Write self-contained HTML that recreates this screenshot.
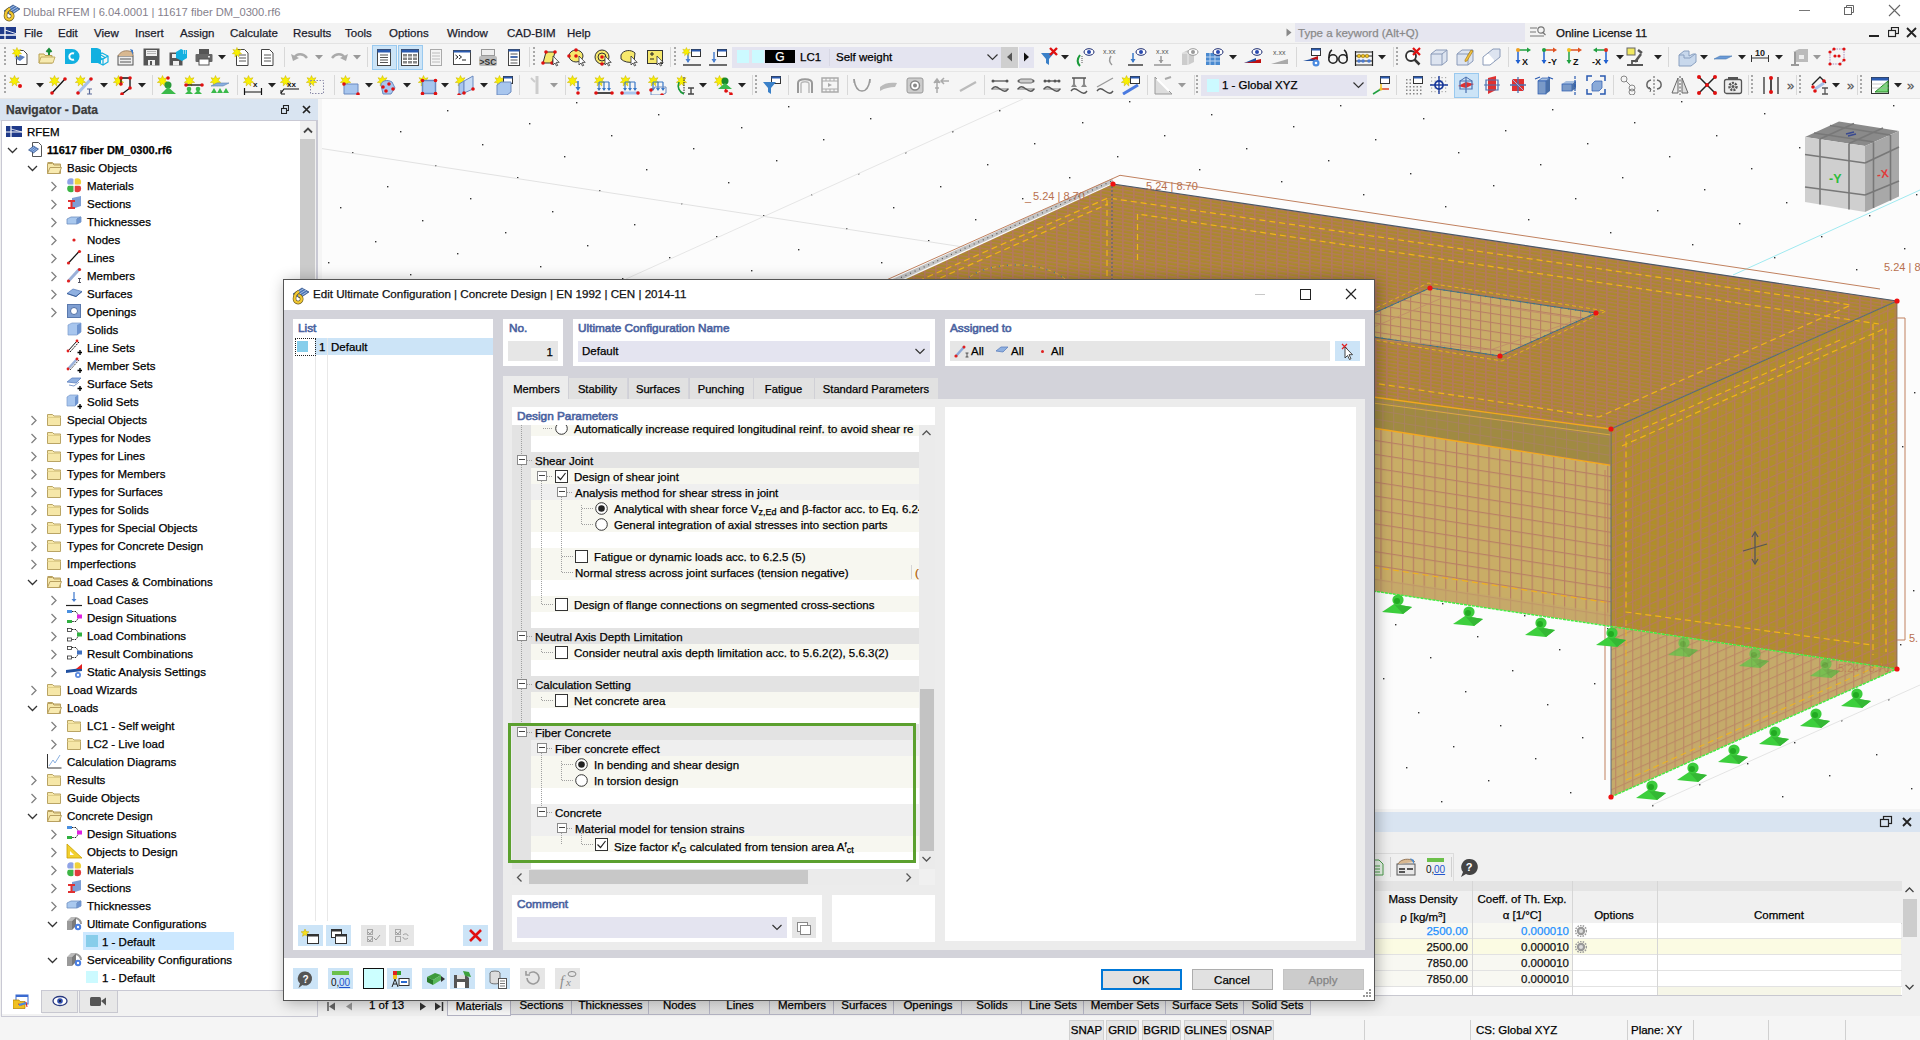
<!DOCTYPE html><html><head><meta charset="utf-8"><style>
*{margin:0;padding:0;box-sizing:border-box}
html,body{width:1920px;height:1040px;overflow:hidden;background:#f0f0f0;font-family:"Liberation Sans",sans-serif;font-size:11.5px;color:#000}
.t{-webkit-text-stroke:0.25px currentColor}
div{position:absolute}
.t{white-space:nowrap}
</style></head><body><div style="left:0px;top:0px;width:1920px;height:23px;background:#fff"></div>
<div class="t" style="left:23px;top:4.0px;height:16px;line-height:16px;color:#857f8c;font-size:11.2px;-webkit-text-stroke:0">Dlubal RFEM | 6.04.0001 | 11617 fiber DM_0300.rf6</div>
<div style="left:0px;top:23px;width:1920px;height:20px;background:#f3f3f3"></div>
<div class="t" style="left:24px;top:25.0px;height:16px;line-height:16px;color:#1c1c2c">File</div>
<div class="t" style="left:58px;top:25.0px;height:16px;line-height:16px;color:#1c1c2c">Edit</div>
<div class="t" style="left:94px;top:25.0px;height:16px;line-height:16px;color:#1c1c2c">View</div>
<div class="t" style="left:135px;top:25.0px;height:16px;line-height:16px;color:#1c1c2c">Insert</div>
<div class="t" style="left:180px;top:25.0px;height:16px;line-height:16px;color:#1c1c2c">Assign</div>
<div class="t" style="left:230px;top:25.0px;height:16px;line-height:16px;color:#1c1c2c">Calculate</div>
<div class="t" style="left:293px;top:25.0px;height:16px;line-height:16px;color:#1c1c2c">Results</div>
<div class="t" style="left:345px;top:25.0px;height:16px;line-height:16px;color:#1c1c2c">Tools</div>
<div class="t" style="left:389px;top:25.0px;height:16px;line-height:16px;color:#1c1c2c">Options</div>
<div class="t" style="left:447px;top:25.0px;height:16px;line-height:16px;color:#1c1c2c">Window</div>
<div class="t" style="left:507px;top:25.0px;height:16px;line-height:16px;color:#1c1c2c">CAD-BIM</div>
<div class="t" style="left:567px;top:25.0px;height:16px;line-height:16px;color:#1c1c2c">Help</div>
<div style="left:0px;top:43px;width:1920px;height:56px;background:#f5f5f5"></div>
<div style="left:0px;top:43px;width:1920px;height:1px;background:#e3e3e3"></div>
<div style="left:0px;top:71px;width:1920px;height:1px;background:#e6e6e6"></div>
<div style="left:0px;top:98px;width:1920px;height:1px;background:#e6e6e6"></div>
<div style="left:0px;top:99px;width:318px;height:22px;background:#d9e4f1"></div>
<div class="t" style="left:6px;top:102.0px;height:16px;line-height:16px;font-weight:bold;font-size:12px;color:#3a3a3a">Navigator - Data</div>
<div style="left:1px;top:120px;width:317px;height:870px;background:#fff;border:1px solid #c9c9d4;border-bottom:none;border-right:2px solid #c9c9d4"></div>
<div style="left:318px;top:99px;width:1602px;height:710px;background:#f5f5f5"></div>
<div style="left:322px;top:99px;width:1598px;height:710px;background:#fcfcfc"></div>
<div style="left:318px;top:809px;width:1602px;height:188px;background:#f0f0f0"></div>
<div style="left:318px;top:812px;width:1602px;height:20px;background:#d9e4f1"></div>
<div style="left:0px;top:1016px;width:1920px;height:24px;background:#f0f0f0"></div>
<div style="left:318px;top:809px;width:1602px;height:3px;background:#f4f4f4"></div>
<svg style="position:absolute;left:1879px;top:815px;" width="14" height="14" viewBox="0 0 14 14"><rect x="4.5" y="1.5" width="8" height="7" fill="none" stroke="#222" stroke-width="1.2"/><rect x="1.5" y="4.5" width="8" height="7" fill="#d9e4f1" stroke="#222" stroke-width="1.2"/></svg>
<svg style="position:absolute;left:1901px;top:816px;" width="12" height="12" viewBox="0 0 12 12"><path d="M2 2l8 8M10 2l-8 8" stroke="#222" stroke-width="1.8"/></svg>
<div style="left:1330px;top:853px;width:124px;height:28px;border:1px solid #dcdcdc;border-bottom:none;background:#f0f0f0"></div>
<svg style="position:absolute;left:1366px;top:857px;" width="20" height="20" viewBox="0 0 20 20"><path d="M3 3h10l4 4v11h-14z" fill="#e8f4e8" stroke="#4a9a4a"/><path d="M5 9h9M5 12h9M5 15h9" stroke="#4a9a4a"/></svg>
<div style="left:1390px;top:857px;width:1px;height:20px;background:#d0d0d0"></div>
<svg style="position:absolute;left:1395px;top:855px;" width="22" height="22" viewBox="0 0 22 22"><rect x="2" y="9" width="18" height="11" fill="#e8e8e8" stroke="#555"/><rect x="4" y="13" width="6" height="2" fill="#555"/><rect x="12" y="13" width="6" height="2" fill="#555"/><rect x="4" y="16" width="6" height="2" fill="#555"/><path d="M3 9c2-4 8-6 14-4l3 2" fill="#d8b890" stroke="#806040" stroke-width="0.8"/><path d="M15 3l4 2v4" fill="#4a8ad0"/></svg>
<svg style="position:absolute;left:1424px;top:856px;" width="22" height="22" viewBox="0 0 22 22"><rect x="3" y="2" width="17" height="4" fill="#6cc04a"/><text x="2" y="17" font-size="10" fill="#111" font-family="Liberation Sans">0,</text><text x="10" y="17" font-size="10" fill="#2255cc" font-family="Liberation Sans" text-decoration="underline">00</text></svg>
<div style="left:1451px;top:857px;width:1px;height:20px;background:#d0d0d0"></div>
<svg style="position:absolute;left:1458px;top:857px;" width="20" height="20" viewBox="0 0 20 20"><path d="M11 2a8 8 0 1 1-3 15l-5 3 2-5a8 8 0 0 1 6-13z" fill="#444"/><text x="11" y="14" font-size="11" font-weight="bold" text-anchor="middle" fill="#fff" font-family="Liberation Sans">?</text></svg>
<div style="left:318px;top:881px;width:1584px;height:10px;background:#e4e4e4"></div>
<div style="left:318px;top:891px;width:1584px;height:32px;background:#f0f0f0"></div>
<div style="left:1472px;top:881px;width:1px;height:114px;background:#d6d6d6"></div>
<div style="left:1572px;top:881px;width:1px;height:114px;background:#d6d6d6"></div>
<div style="left:1657px;top:881px;width:1px;height:114px;background:#d6d6d6"></div>
<div style="left:318px;top:923px;width:1584px;height:1px;background:#d6d6d6"></div>
<div class="t" style="left:1363.0px;width:120px;text-align:center;top:891.0px;height:16px;line-height:16px;">Mass Density</div>
<div class="t" style="left:1363.0px;width:120px;text-align:center;top:907.0px;height:16px;line-height:16px;">ρ [kg/m<sup style='font-size:8px;vertical-align:4px'>3</sup>]</div>
<div class="t" style="left:1462.0px;width:120px;text-align:center;top:891.0px;height:16px;line-height:16px;">Coeff. of Th. Exp.</div>
<div class="t" style="left:1462.0px;width:120px;text-align:center;top:907.0px;height:16px;line-height:16px;">α [1/°C]</div>
<div class="t" style="left:1571.5px;width:85px;text-align:center;top:907.0px;height:16px;line-height:16px;">Options</div>
<div class="t" style="left:1659.0px;width:240px;text-align:center;top:907.0px;height:16px;line-height:16px;">Comment</div>
<div style="left:1373px;top:923px;width:99px;height:16px;background:#f8f8f2"></div>
<div style="left:1473px;top:923px;width:99px;height:16px;background:#f8f8f2"></div>
<div style="left:1573px;top:923px;width:84px;height:16px;background:#ffffff"></div>
<div style="left:1658px;top:923px;width:243px;height:16px;background:#ffffff"></div>
<div style="left:1373px;top:939px;width:99px;height:16px;background:#fbfbe3"></div>
<div style="left:1473px;top:939px;width:99px;height:16px;background:#fbfbe3"></div>
<div style="left:1573px;top:939px;width:84px;height:16px;background:#fbfbe3"></div>
<div style="left:1658px;top:939px;width:243px;height:16px;background:#fbfbe3"></div>
<div style="left:1373px;top:955px;width:99px;height:16px;background:#f8f8f2"></div>
<div style="left:1473px;top:955px;width:99px;height:16px;background:#f8f8f2"></div>
<div style="left:1573px;top:955px;width:84px;height:16px;background:#ffffff"></div>
<div style="left:1658px;top:955px;width:243px;height:16px;background:#ffffff"></div>
<div style="left:1373px;top:971px;width:99px;height:16px;background:#f8f8f2"></div>
<div style="left:1473px;top:971px;width:99px;height:16px;background:#f8f8f2"></div>
<div style="left:1573px;top:971px;width:84px;height:16px;background:#ffffff"></div>
<div style="left:1658px;top:971px;width:243px;height:16px;background:#ffffff"></div>
<div style="left:1373px;top:987px;width:529px;height:8px;background:#fff"></div>
<div style="left:1658px;top:987px;width:243px;height:8px;background:#f6f6e8"></div>
<div style="left:1373px;top:938px;width:529px;height:1px;background:#e2e2e2"></div>
<div style="left:1373px;top:954px;width:529px;height:1px;background:#e2e2e2"></div>
<div style="left:1373px;top:970px;width:529px;height:1px;background:#e2e2e2"></div>
<div style="left:1373px;top:986px;width:529px;height:1px;background:#e2e2e2"></div>
<div style="left:1472px;top:881px;width:1px;height:114px;background:#d6d6d6"></div>
<div style="left:1572px;top:881px;width:1px;height:114px;background:#d6d6d6"></div>
<div style="left:1657px;top:881px;width:1px;height:114px;background:#d6d6d6"></div>
<div style="left:318px;top:995px;width:1584px;height:1px;background:#c8c8d0"></div>
<div class="t" style="right:452px;top:923.0px;height:16px;line-height:16px;color:#1e90ff">2500.00</div>
<div class="t" style="right:351px;top:923.0px;height:16px;line-height:16px;color:#1e90ff">0.000010</div>
<svg style="position:absolute;left:1575px;top:925px;" width="12" height="12" viewBox="0 0 12 12"><circle cx="6" cy="6" r="4.2" fill="#999"/><circle cx="6" cy="6" r="5.5" fill="none" stroke="#999" stroke-width="1.5" stroke-dasharray="1.5 1.2"/><circle cx="6" cy="6" r="2" fill="#ddd"/></svg>
<div class="t" style="right:452px;top:939.0px;height:16px;line-height:16px;color:#111">2500.00</div>
<div class="t" style="right:351px;top:939.0px;height:16px;line-height:16px;color:#111">0.000010</div>
<svg style="position:absolute;left:1575px;top:941px;" width="12" height="12" viewBox="0 0 12 12"><circle cx="6" cy="6" r="4.2" fill="#999"/><circle cx="6" cy="6" r="5.5" fill="none" stroke="#999" stroke-width="1.5" stroke-dasharray="1.5 1.2"/><circle cx="6" cy="6" r="2" fill="#ddd"/></svg>
<div class="t" style="right:452px;top:955.0px;height:16px;line-height:16px;color:#111">7850.00</div>
<div class="t" style="right:351px;top:955.0px;height:16px;line-height:16px;color:#111">0.000010</div>
<div class="t" style="right:452px;top:971.0px;height:16px;line-height:16px;color:#111">7850.00</div>
<div class="t" style="right:351px;top:971.0px;height:16px;line-height:16px;color:#111">0.000010</div>
<div style="left:1902px;top:881px;width:16px;height:114px;background:#f0f0f0"></div>
<svg style="position:absolute;left:1904px;top:886px;" width="11" height="8" viewBox="0 0 11 8"><path d="M1.5 6l4-4 4 4" fill="none" stroke="#444" stroke-width="1.3"/></svg>
<div style="left:1903px;top:899px;width:14px;height:38px;background:#cdcdcd"></div>
<svg style="position:absolute;left:1904px;top:983px;" width="11" height="8" viewBox="0 0 11 8"><path d="M1.5 2l4 4 4-4" fill="none" stroke="#444" stroke-width="1.3"/></svg>
<div style="left:318px;top:996px;width:1602px;height:20px;background:#f0f0f0"></div>
<svg style="position:absolute;left:327px;top:1002px;" width="9" height="10" viewBox="0 0 9 10"><path d="M1 0v9" stroke="#666" stroke-width="1.6"/><path d="M8 0.5l-6 4 6 4z" fill="#666"/></svg>
<svg style="position:absolute;left:345px;top:1002px;" width="8" height="10" viewBox="0 0 8 10"><path d="M7 0.5l-6 4 6 4z" fill="#999"/></svg>
<div class="t" style="left:369px;top:997.0px;height:16px;line-height:16px;">1 of 13</div>
<svg style="position:absolute;left:418px;top:1001px;" width="10" height="11" viewBox="0 0 10 11"><path d="M2 1.5l6 4-6 4z" fill="#333"/></svg>
<svg style="position:absolute;left:433px;top:1001px;" width="12" height="11" viewBox="0 0 12 11"><path d="M2 1.5l6 4-6 4z" fill="#333"/><path d="M9.5 1v9" stroke="#333" stroke-width="1.5"/></svg>
<div style="left:447px;top:996px;width:64px;height:20px;background:#f7f7f7;border:1px solid #b4b4c4;border-top:none"></div>
<div class="t" style="left:447.0px;width:64px;text-align:center;top:998.0px;height:16px;line-height:16px;">Materials</div>
<div style="left:511px;top:996px;width:61px;height:19px;background:linear-gradient(#f0f0f0,#dedede);border:1px solid #b4b4c4;border-top:none;border-left:none"></div>
<div class="t" style="left:511.0px;width:61px;text-align:center;top:997.0px;height:16px;line-height:16px;">Sections</div>
<div style="left:572px;top:996px;width:77px;height:19px;background:linear-gradient(#f0f0f0,#dedede);border:1px solid #b4b4c4;border-top:none;border-left:none"></div>
<div class="t" style="left:572.0px;width:77px;text-align:center;top:997.0px;height:16px;line-height:16px;">Thicknesses</div>
<div style="left:649px;top:996px;width:61px;height:19px;background:linear-gradient(#f0f0f0,#dedede);border:1px solid #b4b4c4;border-top:none;border-left:none"></div>
<div class="t" style="left:649.0px;width:61px;text-align:center;top:997.0px;height:16px;line-height:16px;">Nodes</div>
<div style="left:710px;top:996px;width:60px;height:19px;background:linear-gradient(#f0f0f0,#dedede);border:1px solid #b4b4c4;border-top:none;border-left:none"></div>
<div class="t" style="left:710.0px;width:60px;text-align:center;top:997.0px;height:16px;line-height:16px;">Lines</div>
<div style="left:770px;top:996px;width:64px;height:19px;background:linear-gradient(#f0f0f0,#dedede);border:1px solid #b4b4c4;border-top:none;border-left:none"></div>
<div class="t" style="left:770.0px;width:64px;text-align:center;top:997.0px;height:16px;line-height:16px;">Members</div>
<div style="left:834px;top:996px;width:60px;height:19px;background:linear-gradient(#f0f0f0,#dedede);border:1px solid #b4b4c4;border-top:none;border-left:none"></div>
<div class="t" style="left:834.0px;width:60px;text-align:center;top:997.0px;height:16px;line-height:16px;">Surfaces</div>
<div style="left:894px;top:996px;width:68px;height:19px;background:linear-gradient(#f0f0f0,#dedede);border:1px solid #b4b4c4;border-top:none;border-left:none"></div>
<div class="t" style="left:894.0px;width:68px;text-align:center;top:997.0px;height:16px;line-height:16px;">Openings</div>
<div style="left:962px;top:996px;width:60px;height:19px;background:linear-gradient(#f0f0f0,#dedede);border:1px solid #b4b4c4;border-top:none;border-left:none"></div>
<div class="t" style="left:962.0px;width:60px;text-align:center;top:997.0px;height:16px;line-height:16px;">Solids</div>
<div style="left:1022px;top:996px;width:62px;height:19px;background:linear-gradient(#f0f0f0,#dedede);border:1px solid #b4b4c4;border-top:none;border-left:none"></div>
<div class="t" style="left:1022.0px;width:62px;text-align:center;top:997.0px;height:16px;line-height:16px;">Line Sets</div>
<div style="left:1084px;top:996px;width:82px;height:19px;background:linear-gradient(#f0f0f0,#dedede);border:1px solid #b4b4c4;border-top:none;border-left:none"></div>
<div class="t" style="left:1084.0px;width:82px;text-align:center;top:997.0px;height:16px;line-height:16px;">Member Sets</div>
<div style="left:1166px;top:996px;width:78px;height:19px;background:linear-gradient(#f0f0f0,#dedede);border:1px solid #b4b4c4;border-top:none;border-left:none"></div>
<div class="t" style="left:1166.0px;width:78px;text-align:center;top:997.0px;height:16px;line-height:16px;">Surface Sets</div>
<div style="left:1244px;top:996px;width:67px;height:19px;background:linear-gradient(#f0f0f0,#dedede);border:1px solid #b4b4c4;border-top:none;border-left:none"></div>
<div class="t" style="left:1244.0px;width:67px;text-align:center;top:997.0px;height:16px;line-height:16px;">Solid Sets</div>
<div style="left:0px;top:1016px;width:1920px;height:24px;background:#f5f5f5"></div>
<div style="left:1069px;top:1020px;width:35px;height:20px;background:#e6e6e6;border:1px solid #d0d0d0;border-bottom:none"></div>
<div class="t" style="left:1069.0px;width:35px;text-align:center;top:1022.0px;height:16px;line-height:16px;">SNAP</div>
<div style="left:1106px;top:1020px;width:33px;height:20px;background:#e6e6e6;border:1px solid #d0d0d0;border-bottom:none"></div>
<div class="t" style="left:1106.0px;width:33px;text-align:center;top:1022.0px;height:16px;line-height:16px;">GRID</div>
<div style="left:1142px;top:1020px;width:39px;height:20px;background:#e6e6e6;border:1px solid #d0d0d0;border-bottom:none"></div>
<div class="t" style="left:1142.0px;width:39px;text-align:center;top:1022.0px;height:16px;line-height:16px;">BGRID</div>
<div style="left:1184px;top:1020px;width:43px;height:20px;background:#e6e6e6;border:1px solid #d0d0d0;border-bottom:none"></div>
<div class="t" style="left:1184.0px;width:43px;text-align:center;top:1022.0px;height:16px;line-height:16px;">GLINES</div>
<div style="left:1230px;top:1020px;width:44px;height:20px;background:#e6e6e6;border:1px solid #d0d0d0;border-bottom:none"></div>
<div class="t" style="left:1230.0px;width:44px;text-align:center;top:1022.0px;height:16px;line-height:16px;">OSNAP</div>
<div style="left:1364px;top:1020px;width:1px;height:20px;background:#d0d0d0"></div>
<div style="left:1470px;top:1020px;width:1px;height:20px;background:#d0d0d0"></div>
<div style="left:1627px;top:1020px;width:1px;height:20px;background:#d0d0d0"></div>
<div style="left:1693px;top:1020px;width:1px;height:20px;background:#d0d0d0"></div>
<div style="left:1768px;top:1020px;width:1px;height:20px;background:#d0d0d0"></div>
<div style="left:1845px;top:1020px;width:1px;height:20px;background:#d0d0d0"></div>
<div class="t" style="left:1476px;top:1022.0px;height:16px;line-height:16px;">CS: Global XYZ</div>
<div class="t" style="left:1631px;top:1022.0px;height:16px;line-height:16px;">Plane: XY</div>
<svg style="position:absolute;left:2px;top:2px;" width="20" height="20" viewBox="0 0 20 20"><path d="M2 9l9-6 7 4-9 6z" fill="#4a72b4" stroke="#2a4a80" stroke-width="0.7"/><path d="M5 8.5l8-5M7 10l8-5M9 11.5l7-4.5" stroke="#b0c8ea" stroke-width="0.9"/><path d="M8 6.5c-3 1.5-4.5 4-4.5 7.5a3.6 3.6 0 1 0 3.6-3.6" fill="none" stroke="#6a5a20" stroke-width="3.6"/><path d="M8 6.5c-3 1.5-4.5 4-4.5 7.5a3.6 3.6 0 1 0 3.6-3.6" fill="none" stroke="#f2c832" stroke-width="2.3"/><circle cx="7.1" cy="14" r="1" fill="#fff"/></svg>
<div style="left:1799px;top:10px;width:11px;height:1px;background:#777"></div>
<svg style="position:absolute;left:1843px;top:4px;" width="12" height="12" viewBox="0 0 12 12"><rect x="1.5" y="3.5" width="7" height="7" fill="none" stroke="#666"/><path d="M3.5 3.5v-2h7v7h-2" fill="none" stroke="#666"/></svg>
<svg style="position:absolute;left:1888px;top:4px;" width="13" height="13" viewBox="0 0 13 13"><path d="M1 1l11 11M12 1l-11 11" stroke="#666" stroke-width="1.1"/></svg>
<svg style="position:absolute;left:0px;top:27px;" width="16" height="12" viewBox="0 0 16 12"><rect x="0" y="0" width="17" height="13" fill="#1f3a8a"/><path d="M0 8h17M5 0v13" stroke="#fff" stroke-width="1.3"/><path d="M5 3l12 4" stroke="#fff" stroke-width="0.9"/></svg>
<svg style="position:absolute;left:1286px;top:28px;" width="6" height="9" viewBox="0 0 6 9"><path d="M0.5 0.5l5 4-5 4z" fill="#888"/></svg>
<div style="left:1295px;top:23px;width:230px;height:19px;background:#e6e6f0"></div>
<div class="t" style="left:1298px;top:24.5px;height:16px;line-height:16px;color:#8a8a8a">Type a keyword (Alt+Q)</div>
<svg style="position:absolute;left:1530px;top:25px;" width="16" height="14" viewBox="0 0 16 14"><path d="M0 3h7M0 7h6M0 11h14" stroke="#777" stroke-width="1.2"/><circle cx="11" cy="5" r="3.2" fill="none" stroke="#777" stroke-width="1.2"/><path d="M13 7.5l2.5 2.5" stroke="#777" stroke-width="1.2"/></svg>
<div class="t" style="left:1556px;top:24.5px;height:16px;line-height:16px;color:#111">Online License 11</div>
<div style="left:1869px;top:35px;width:10px;height:2px;background:#222"></div>
<svg style="position:absolute;left:1888px;top:27px;" width="11" height="11" viewBox="0 0 11 11"><rect x="3.5" y="0.5" width="7" height="6" fill="none" stroke="#222" stroke-width="1.2"/><rect x="0.5" y="3.5" width="7" height="6" fill="#f3f3f3" stroke="#222" stroke-width="1.2"/></svg>
<svg style="position:absolute;left:1906px;top:27px;" width="11" height="11" viewBox="0 0 11 11"><path d="M1 1l9 9M10 1l-9 9" stroke="#222" stroke-width="1.8"/></svg>
<svg style="position:absolute;left:2.5px;top:46px;" width="4" height="22" viewBox="0 0 4 22"><g fill="#a8a8a8"><rect x="1" y="1" width="2" height="2"/><rect x="1" y="5" width="2" height="2"/><rect x="1" y="9" width="2" height="2"/><rect x="1" y="13" width="2" height="2"/><rect x="1" y="17" width="2" height="2"/></g></svg>
<svg style="position:absolute;left:12px;top:47px;" width="20" height="20" viewBox="0 0 20 20"><path d="M4.5 3.5h7l3.5 3.5v10.5h-10.5z" fill="#fff" stroke="#444"/><path d="M3 11l5-3 5 2-5 4z" fill="#5a80c0"/><g transform="translate(0,0) scale(0.9)"><path d="M5.5 0.5l1.3 3 3.2-.8-1.8 2.7 2.5 2-3.2.4.3 3.2-2.3-2.2-2.3 2.2.3-3.2-3.2-.4 2.5-2-1.8-2.7 3.2.8z" fill="#f8f000" stroke="#c8b000" stroke-width="0.5"/></g></svg>
<svg style="position:absolute;left:38px;top:47px;" width="20" height="20" viewBox="0 0 20 20"><path d="M1 16v-9h5l1 1.5h7v7.5z" fill="#f3e6a0" stroke="#b8a050"/><path d="M1 16l2-6h14l-2 6z" fill="#f6eab0" stroke="#b8a050" stroke-width="0.8"/><path d="M11 8v-5M8.5 5l2.5-3 2.5 3" stroke="#1a8a3a" stroke-width="2" fill="#1a8a3a"/></svg>
<svg style="position:absolute;left:63px;top:47px;" width="20" height="20" viewBox="0 0 20 20"><path d="M2 2h7a7.5 7.5 0 0 1 0 15h-7z" fill="#12b0e0"/><path d="M11 6.5a3.3 3.3 0 1 0 0 6" fill="none" stroke="#fff" stroke-width="2"/></svg>
<svg style="position:absolute;left:90px;top:47px;" width="20" height="20" viewBox="0 0 20 20"><path d="M1 1h6a7 7 0 0 1 4 2v13h-10z" fill="#12b0e0"/><g fill="none" stroke="#12b0e0" stroke-width="1.2"><path d="M7 9l5-3 6 3v6l-5 3-6-3z"/><path d="M7 9l6 3 5-3M13 12v6M10 7.5l5 3M9.5 13.5l6-3"/></g></svg>
<svg style="position:absolute;left:116px;top:47px;" width="20" height="20" viewBox="0 0 20 20"><rect x="2" y="9" width="15" height="9" fill="#eee" stroke="#555"/><path d="M4 12h11M4 15h11" stroke="#555"/><path d="M2 9c2-4 6-6 11-5l4 1v4" fill="#d8b890" stroke="#8a6a4a" stroke-width="0.7"/><path d="M14 2l3 1v5" fill="#3a78c8"/></svg>
<svg style="position:absolute;left:142px;top:47px;" width="20" height="20" viewBox="0 0 20 20"><path d="M1.5 1.5h16v17h-16z" fill="#555"/><rect x="4" y="3" width="11" height="6" fill="#eee"/><path d="M5 4.5h9M5 6.5h9" stroke="#999" stroke-width="0.7"/><rect x="6" y="13" width="7" height="5.5" fill="#eee"/><rect x="8" y="14" width="2" height="4" fill="#555"/></svg>
<svg style="position:absolute;left:168px;top:47px;" width="20" height="20" viewBox="0 0 20 20"><path d="M1.5 5.5h13v13h-13z" fill="#555"/><rect x="4" y="7" width="7" height="4" fill="#eee"/><rect x="5" y="14" width="6" height="4.5" fill="#eee"/><path d="M8 5l5-3 6 3v6l-5 3-6-3z" fill="#12b0e0"/><path d="M14 3h5v6h-5z" fill="#12b0e0"/><path d="M15 4h1M17 4h1M15 6h1M17 6h1" stroke="#fff"/></svg>
<svg style="position:absolute;left:194px;top:47px;" width="20" height="20" viewBox="0 0 20 20"><rect x="5" y="2" width="10" height="5" fill="#555"/><rect x="1.5" y="7" width="17" height="8" rx="1" fill="#666"/><rect x="5" y="12" width="10" height="6" fill="#fff" stroke="#555"/><rect x="14" y="9" width="2" height="1.5" fill="#ddd"/></svg>
<svg style="position:absolute;left:218px;top:55px;" width="8" height="5" viewBox="0 0 8 5"><path d="M0 0h8l-4 4.5z" fill="#222"/></svg>
<svg style="position:absolute;left:232px;top:47px;" width="20" height="20" viewBox="0 0 20 20"><path d="M4.5 2.5h8l3.5 3.5v12.5h-11.5z" fill="#fff" stroke="#444"/><path d="M7 8h7M7 11h7M7 14h7" stroke="#444" stroke-width="0.9"/><g transform="translate(0,0) scale(0.9)"><path d="M5.5 0.5l1.3 3 3.2-.8-1.8 2.7 2.5 2-3.2.4.3 3.2-2.3-2.2-2.3 2.2.3-3.2-3.2-.4 2.5-2-1.8-2.7 3.2.8z" fill="#f8f000" stroke="#c8b000" stroke-width="0.5"/></g></svg>
<svg style="position:absolute;left:258px;top:47px;" width="20" height="20" viewBox="0 0 20 20"><path d="M3.5 2.5h8l3.5 3.5v12.5h-11.5z" fill="#fff" stroke="#444"/><path d="M6 8h7M6 11h7M6 14h7" stroke="#444" stroke-width="0.9"/></svg>
<div style="left:284px;top:47px;width:1px;height:20px;background:#d8d8d8"></div>
<svg style="position:absolute;left:290px;top:47px;" width="20" height="20" viewBox="0 0 20 20"><path d="M4 11c3-5 9-5 13 0" fill="none" stroke="#aaa" stroke-width="2.5"/><path d="M1 7l2 7 6-3z" fill="#aaa"/></svg>
<svg style="position:absolute;left:315px;top:55px;" width="8" height="5" viewBox="0 0 8 5"><path d="M0 0h8l-4 4.5z" fill="#999"/></svg>
<svg style="position:absolute;left:329px;top:47px;" width="20" height="20" viewBox="0 0 20 20"><path d="M16 11c-3-5-9-5-13 0" fill="none" stroke="#aaa" stroke-width="2.5"/><path d="M19 7l-2 7-6-3z" fill="#aaa"/></svg>
<svg style="position:absolute;left:353px;top:55px;" width="8" height="5" viewBox="0 0 8 5"><path d="M0 0h8l-4 4.5z" fill="#999"/></svg>
<div style="left:367px;top:47px;width:1px;height:20px;background:#d8d8d8"></div>
<div style="left:372px;top:45px;width:25px;height:25px;background:#cce4f7;border:1px solid #99c9ef"></div>
<svg style="position:absolute;left:374px;top:47px;" width="20" height="20" viewBox="0 0 20 20"><rect x="3.5" y="2.5" width="13" height="16" fill="#fff" stroke="#444"/><rect x="3.5" y="2.5" width="13" height="3" fill="#2a5ab0"/><path d="M6 8h8M6 10.5h8M6 13h8M6 15.5h8" stroke="#555" stroke-width="1.2"/></svg>
<div style="left:398px;top:45px;width:25px;height:25px;background:#cce4f7;border:1px solid #99c9ef"></div>
<svg style="position:absolute;left:400px;top:47px;" width="20" height="20" viewBox="0 0 20 20"><rect x="1.5" y="2.5" width="17" height="16" fill="#fff" stroke="#444"/><rect x="1.5" y="2.5" width="17" height="3" fill="#2a5ab0"/><g fill="#888"><rect x="3" y="7" width="4" height="2.5"/><rect x="8" y="7" width="4" height="2.5"/><rect x="13" y="7" width="4" height="2.5"/><rect x="3" y="10.5" width="4" height="2.5"/><rect x="8" y="10.5" width="4" height="2.5"/><rect x="13" y="10.5" width="4" height="2.5"/><rect x="3" y="14" width="4" height="2.5"/><rect x="8" y="14" width="4" height="2.5"/><rect x="13" y="14" width="4" height="2.5"/></g></svg>
<svg style="position:absolute;left:426px;top:47px;" width="20" height="20" viewBox="0 0 20 20"><rect x="4.5" y="2.5" width="11" height="16" fill="#f4f4f4" stroke="#aaa"/><path d="M6 6h8M6 9h8M6 12h8M6 15h8" stroke="#bbb" stroke-width="1.2"/></svg>
<svg style="position:absolute;left:452px;top:47px;" width="20" height="20" viewBox="0 0 20 20"><rect x="1.5" y="3.5" width="17" height="14" fill="#fff" stroke="#444"/><rect x="1.5" y="3.5" width="17" height="2" fill="#2a5ab0"/><path d="M3.5 8l2.5 2-2.5 2M7 8l2.5 2-2.5 2M10 13h4" stroke="#222" fill="none"/></svg>
<svg style="position:absolute;left:478px;top:47px;" width="20" height="20" viewBox="0 0 20 20"><rect x="3.5" y="2.5" width="13" height="6" fill="#eee" stroke="#999"/><rect x="1" y="9" width="18" height="10" rx="2" fill="#bbb"/><text x="10" y="17.5" font-size="8.5" font-weight="bold" text-anchor="middle" fill="#333" font-family="Liberation Sans">&gt;SC</text></svg>
<svg style="position:absolute;left:504px;top:47px;" width="20" height="20" viewBox="0 0 20 20"><rect x="4.5" y="2.5" width="11" height="16" fill="#fff" stroke="#444"/><rect x="4.5" y="2.5" width="11" height="2" fill="#2a5ab0"/><path d="M6.5 7h7M6.5 10h7M6.5 13h7M6.5 16h7" stroke="#555"/><path d="M6.5 10h7" stroke="#2a5ab0" stroke-width="1.5"/></svg>
<div style="left:529px;top:47px;width:1px;height:20px;background:#d8d8d8"></div>
<svg style="position:absolute;left:532px;top:46px;" width="4" height="22" viewBox="0 0 4 22"><g fill="#a8a8a8"><rect x="1" y="1" width="2" height="2"/><rect x="1" y="5" width="2" height="2"/><rect x="1" y="9" width="2" height="2"/><rect x="1" y="13" width="2" height="2"/><rect x="1" y="17" width="2" height="2"/></g></svg>
<svg style="position:absolute;left:541px;top:47px;" width="20" height="20" viewBox="0 0 20 20"><path d="M5 5h9l-3 11h-9z" fill="#f6e86c" stroke="#333"/><circle cx="5" cy="5" r="1.8" fill="#e01010"/><circle cx="14" cy="5" r="1.8" fill="#e01010"/><circle cx="11" cy="16" r="1.8" fill="#e01010"/><circle cx="2" cy="16" r="1.8" fill="#e01010"/><path d="M12 9v9l2-2 1.5 3 1.2-.6-1.5-3h3z" fill="#fff" stroke="#333" stroke-width="0.8"/></svg>
<svg style="position:absolute;left:567px;top:47px;" width="20" height="20" viewBox="0 0 20 20"><ellipse cx="9" cy="9" rx="7" ry="6" fill="#f6e86c" stroke="#333"/><circle cx="9" cy="3" r="1.8" fill="#e01010"/><circle cx="2" cy="9" r="1.8" fill="#e01010"/><circle cx="9" cy="9" r="1.8" fill="#e01010"/><path d="M12 9v9l2-2 1.5 3 1.2-.6-1.5-3h3z" fill="#fff" stroke="#333" stroke-width="0.8"/></svg>
<svg style="position:absolute;left:593px;top:47px;" width="20" height="20" viewBox="0 0 20 20"><circle cx="9" cy="10" r="7" fill="#f6e86c" stroke="#333"/><circle cx="9" cy="10" r="4" fill="none" stroke="#333"/><circle cx="9" cy="10" r="1.8" fill="#e01010"/><circle cx="9" cy="17" r="1.8" fill="#e01010"/><path d="M12 9v9l2-2 1.5 3 1.2-.6-1.5-3h3z" fill="#fff" stroke="#333" stroke-width="0.8"/></svg>
<svg style="position:absolute;left:619px;top:47px;" width="20" height="20" viewBox="0 0 20 20"><path d="M2 8c2-5 10-6 14-2l-1 9c-5 1-10 0-13-3z" fill="#f6e86c" stroke="#333"/><path d="M12 9v9l2-2 1.5 3 1.2-.6-1.5-3h3z" fill="#fff" stroke="#333" stroke-width="0.8"/></svg>
<svg style="position:absolute;left:645px;top:47px;" width="20" height="20" viewBox="0 0 20 20"><rect x="2.5" y="3.5" width="15" height="13" fill="#f6e86c" stroke="#333"/><path d="M5 7h4M7 5v4M5 12h4" stroke="#222"/><path d="M12 9v9l2-2 1.5 3 1.2-.6-1.5-3h3z" fill="#fff" stroke="#333" stroke-width="0.8"/></svg>
<div style="left:670px;top:47px;width:1px;height:20px;background:#d8d8d8"></div>
<svg style="position:absolute;left:673px;top:46px;" width="4" height="22" viewBox="0 0 4 22"><g fill="#a8a8a8"><rect x="1" y="1" width="2" height="2"/><rect x="1" y="5" width="2" height="2"/><rect x="1" y="9" width="2" height="2"/><rect x="1" y="13" width="2" height="2"/><rect x="1" y="17" width="2" height="2"/></g></svg>
<svg style="position:absolute;left:682px;top:47px;" width="20" height="20" viewBox="0 0 20 20"><rect x="9.5" y="2.5" width="9" height="7" fill="#fff" stroke="#333"/><rect x="9.5" y="2.5" width="9" height="2" fill="#2a5ab0"/><path d="M6 5v10" stroke="#4a80d0" stroke-width="1.5"/><path d="M3.5 12l2.5 4 2.5-4z" fill="#4a80d0"/><path d="M1 18h18" stroke="#222" stroke-width="1.3"/><g transform="translate(0,0) scale(0.8)"><path d="M5.5 0.5l1.3 3 3.2-.8-1.8 2.7 2.5 2-3.2.4.3 3.2-2.3-2.2-2.3 2.2.3-3.2-3.2-.4 2.5-2-1.8-2.7 3.2.8z" fill="#f8f000" stroke="#c8b000" stroke-width="0.5"/></g></svg>
<svg style="position:absolute;left:708px;top:47px;" width="20" height="20" viewBox="0 0 20 20"><rect x="9.5" y="2.5" width="9" height="7" fill="#fff" stroke="#333"/><rect x="9.5" y="2.5" width="9" height="2" fill="#2a5ab0"/><path d="M6 5v10" stroke="#4a80d0" stroke-width="1.5"/><path d="M3.5 12l2.5 4 2.5-4z" fill="#4a80d0"/><path d="M1 18h18" stroke="#222" stroke-width="1.3"/></svg>
<div style="left:732px;top:47px;width:270px;height:21px;background:#e4e4f0"></div>
<div style="left:737px;top:50px;width:12px;height:13px;background:#ccfaff"></div>
<div style="left:752px;top:50px;width:12px;height:13px;background:#ccfaff"></div>
<div style="left:765px;top:50px;width:30px;height:13px;background:#000"></div>
<div class="t" style="left:765.0px;width:30px;text-align:center;top:48.5px;height:16px;line-height:16px;color:#fff;font-size:12px">G</div>
<div class="t" style="left:800px;top:49.0px;height:16px;line-height:16px;">LC1</div>
<div style="left:829px;top:49px;width:1px;height:17px;background:#d8d8e4"></div>
<div class="t" style="left:836px;top:49.0px;height:16px;line-height:16px;">Self weight</div>
<svg style="position:absolute;left:986px;top:53px;" width="13" height="8" viewBox="0 0 13 8"><path d="M1.5 1.5l5 5 5-5" fill="none" stroke="#333" stroke-width="1.2"/></svg>
<div style="left:1001px;top:47px;width:17px;height:21px;background:#cfcfcf"></div>
<svg style="position:absolute;left:1006px;top:52px;" width="7" height="10" viewBox="0 0 7 10"><path d="M6 0.5l-5 4.5 5 4.5z" fill="#555"/></svg>
<div style="left:1019px;top:47px;width:15px;height:21px;background:#e4e4f0"></div>
<svg style="position:absolute;left:1023px;top:52px;" width="7" height="10" viewBox="0 0 7 10"><path d="M1 0.5l5 4.5-5 4.5z" fill="#111"/></svg>
<svg style="position:absolute;left:1040px;top:47px;" width="20" height="20" viewBox="0 0 20 20"><path d="M1 6h13l-5 6v6l-3-2v-4z" fill="#3a80c8"/><path d="M10 1l7 7M17 1l-7 7" stroke="#e01010" stroke-width="2.4"/></svg>
<svg style="position:absolute;left:1061px;top:55px;" width="8" height="5" viewBox="0 0 8 5"><path d="M0 0h8l-4 4.5z" fill="#222"/></svg>
<svg style="position:absolute;left:1075px;top:47px;" width="20" height="20" viewBox="0 0 20 20"><path d="M5 8c-3 4-3 8 0 11" fill="none" stroke="#1a9a3a" stroke-width="2"/><path d="M7 9v8" stroke="#555" stroke-dasharray="1 1"/><ellipse cx="14" cy="5" rx="5" ry="3.3" fill="#fff" stroke="#1a2a70"/><circle cx="14" cy="5" r="2" fill="#2a4ab0"/></svg>
<svg style="position:absolute;left:1102px;top:47px;" width="20" height="20" viewBox="0 0 20 20"><text x="1" y="7" font-size="7" fill="#555" font-family="Liberation Sans">x.xx</text><path d="M9 9c-2 3-2 6 1 9" fill="none" stroke="#999" stroke-width="1.5"/></svg>
<svg style="position:absolute;left:1127px;top:47px;" width="20" height="20" viewBox="0 0 20 20"><path d="M6 6v9" stroke="#3a78c8" stroke-width="1.5"/><path d="M3.5 12l2.5 4 2.5-4z" fill="#3a78c8"/><path d="M1 18h15" stroke="#222" stroke-width="1.3"/><ellipse cx="14" cy="5" rx="5" ry="3.3" fill="#fff" stroke="#1a2a70"/><circle cx="14" cy="5" r="2" fill="#2a4ab0"/></svg>
<svg style="position:absolute;left:1153px;top:47px;" width="20" height="20" viewBox="0 0 20 20"><text x="3" y="7" font-size="7" fill="#555" font-family="Liberation Sans">x.xx</text><path d="M8 9v7" stroke="#999" stroke-width="1.5"/><path d="M5.5 13l2.5 3 2.5-3z" fill="#999"/><path d="M1 18h17" stroke="#888" stroke-width="1.3"/></svg>
<svg style="position:absolute;left:1179px;top:47px;" width="20" height="20" viewBox="0 0 20 20"><path d="M3 6l6-3h6v12l-6 3h-6z" fill="#ccc"/><path d="M9 6v12M3 6h6l6-3" fill="none" stroke="#eee"/><ellipse cx="14" cy="5" rx="5" ry="3.3" fill="#fff" stroke="#999"/><circle cx="14" cy="5" r="2" fill="#999"/></svg>
<svg style="position:absolute;left:1204px;top:47px;" width="20" height="20" viewBox="0 0 20 20"><rect x="2" y="6" width="14" height="12" fill="#4a8ad0"/><path d="M2 10h14M2 14h14M6 6v12M11 6v12" stroke="#bcd4f0"/><ellipse cx="14" cy="5" rx="5" ry="3.3" fill="#fff" stroke="#1a2a70"/><circle cx="14" cy="5" r="2" fill="#2a4ab0"/></svg>
<svg style="position:absolute;left:1229px;top:55px;" width="8" height="5" viewBox="0 0 8 5"><path d="M0 0h8l-4 4.5z" fill="#222"/></svg>
<svg style="position:absolute;left:1243px;top:47px;" width="20" height="20" viewBox="0 0 20 20"><path d="M1 16l17-4v4z" fill="#c01010"/><path d="M1 16l12-5v3z" fill="#2050a0"/><ellipse cx="14" cy="5" rx="5" ry="3.3" fill="#fff" stroke="#1a2a70"/><circle cx="14" cy="5" r="2" fill="#2a4ab0"/></svg>
<svg style="position:absolute;left:1270px;top:47px;" width="20" height="20" viewBox="0 0 20 20"><text x="3" y="8" font-size="7" fill="#555" font-family="Liberation Sans">x.xx</text><path d="M1 17l17-5v5z" fill="#aaa"/></svg>
<div style="left:1296px;top:47px;width:1px;height:20px;background:#d8d8d8"></div>
<svg style="position:absolute;left:1302px;top:47px;" width="20" height="20" viewBox="0 0 20 20"><rect x="9.5" y="1.5" width="9" height="7" fill="#fff" stroke="#333"/><rect x="9.5" y="1.5" width="9" height="2" fill="#2a5ab0"/><path d="M1 14l12-3v3z" fill="#2050a0"/><path d="M8 12l8-3v4z" fill="#c01010"/><circle cx="14" cy="16" r="3.5" fill="#4a8ae0"/><circle cx="14" cy="16" r="1.3" fill="#fff"/></svg>
<svg style="position:absolute;left:1328px;top:47px;" width="20" height="20" viewBox="0 0 20 20"><circle cx="5" cy="12" r="4.2" fill="none" stroke="#222" stroke-width="1.6"/><circle cx="15" cy="12" r="4.2" fill="none" stroke="#222" stroke-width="1.6"/><path d="M1 11c0-4 1-7 3-8M19 11c0-4-1-7-3-8" fill="none" stroke="#222" stroke-width="1.6"/></svg>
<svg style="position:absolute;left:1354px;top:47px;" width="20" height="20" viewBox="0 0 20 20"><path d="M1.5 4v15M18.5 4v15M1 5h18M1 18h18M1 9h18M1 14h18" stroke="#222" stroke-width="1.2"/><g fill="#f0c020" stroke="#806000" stroke-width="0.5"><circle cx="5" cy="9" r="1.8"/><circle cx="9" cy="9" r="1.8"/><circle cx="13" cy="9" r="1.8"/></g><g fill="#4a7ad0"><circle cx="5" cy="14" r="1.8"/><circle cx="9" cy="14" r="1.8"/><circle cx="15" cy="14" r="1.8"/></g></svg>
<svg style="position:absolute;left:1378px;top:55px;" width="8" height="5" viewBox="0 0 8 5"><path d="M0 0h8l-4 4.5z" fill="#222"/></svg>
<div style="left:1393px;top:47px;width:1px;height:20px;background:#d8d8d8"></div>
<svg style="position:absolute;left:1395px;top:46px;" width="4" height="22" viewBox="0 0 4 22"><g fill="#a8a8a8"><rect x="1" y="1" width="2" height="2"/><rect x="1" y="5" width="2" height="2"/><rect x="1" y="9" width="2" height="2"/><rect x="1" y="13" width="2" height="2"/><rect x="1" y="17" width="2" height="2"/></g></svg>
<svg style="position:absolute;left:1403px;top:47px;" width="20" height="20" viewBox="0 0 20 20"><circle cx="8" cy="9" r="5" fill="#fff" stroke="#333" stroke-width="1.8"/><path d="M11.5 12.5l5 5" stroke="#333" stroke-width="2.5"/><path d="M10 1l7 7M17 1l-7 7" stroke="#e01010" stroke-width="2.2"/></svg>
<svg style="position:absolute;left:1429px;top:47px;" width="20" height="20" viewBox="0 0 20 20"><path d="M2 7l5-4h11v11l-5 4h-11z" fill="#dde4f0" stroke="#8a9ab8"/><path d="M2 7h11v11M13 7l5-4" fill="none" stroke="#8a9ab8"/></svg>
<svg style="position:absolute;left:1455px;top:47px;" width="20" height="20" viewBox="0 0 20 20"><path d="M2 7l5-4h11v11l-5 4h-11z" fill="#dde4f0" stroke="#8a9ab8"/><path d="M2 7h11v11M13 7l5-4" fill="none" stroke="#8a9ab8"/><path d="M10 13l6-10 2 1-6 10-2 .5z" fill="#f0c040" stroke="#a07000" stroke-width="0.6"/></svg>
<svg style="position:absolute;left:1481px;top:47px;" width="20" height="20" viewBox="0 0 20 20"><path d="M2 10l5-4h7v8l-5 4h-7z" fill="#fff" stroke="#8a9ab8"/><path d="M7 6l5-4h7v8l-5 4" fill="#dde4f0" stroke="#8a9ab8"/></svg>
<div style="left:1508px;top:47px;width:1px;height:20px;background:#d8d8d8"></div>
<svg style="position:absolute;left:1514px;top:47px;" width="20" height="20" viewBox="0 0 20 20"><path d="M4 3v13" stroke="#2060d0" stroke-width="1.5"/><path d="M1.5 13l2.5 4 2.5-4z" fill="#2060d0"/><path d="M4 3h11" stroke="#20a040" stroke-width="1.5"/><path d="M13 0.5l4 2.5-4 2.5z" fill="#20a040"/><circle cx="4" cy="3" r="2" fill="#f0a020"/><text x="8" y="18" font-size="9" font-weight="bold" fill="#111" font-family="Liberation Sans">X</text></svg>
<svg style="position:absolute;left:1540px;top:47px;" width="20" height="20" viewBox="0 0 20 20"><path d="M4 3v13" stroke="#2060d0" stroke-width="1.5"/><path d="M1.5 13l2.5 4 2.5-4z" fill="#2060d0"/><path d="M4 3h11" stroke="#e05020" stroke-width="1.5"/><path d="M13 0.5l4 2.5-4 2.5z" fill="#e05020"/><circle cx="4" cy="3" r="2" fill="#20a040"/><text x="8" y="18" font-size="9" font-weight="bold" fill="#111" font-family="Liberation Sans">-Y</text></svg>
<svg style="position:absolute;left:1565px;top:47px;" width="20" height="20" viewBox="0 0 20 20"><path d="M4 3v13" stroke="#20a040" stroke-width="1.5"/><path d="M1.5 13l2.5 4 2.5-4z" fill="#20a040"/><path d="M4 3h11" stroke="#e05020" stroke-width="1.5"/><path d="M13 0.5l4 2.5-4 2.5z" fill="#e05020"/><circle cx="4" cy="3" r="2" fill="#f0c020"/><text x="8" y="18" font-size="9" font-weight="bold" fill="#111" font-family="Liberation Sans">Z</text></svg>
<svg style="position:absolute;left:1591px;top:47px;" width="20" height="20" viewBox="0 0 20 20"><path d="M15 3v13" stroke="#2060d0" stroke-width="1.5"/><path d="M12.5 13l2.5 4 2.5-4z" fill="#2060d0"/><path d="M15 3h-11" stroke="#20a040" stroke-width="1.5"/><path d="M6 0.5l-4 2.5 4 2.5z" fill="#20a040"/><circle cx="15" cy="3" r="2" fill="#e03020"/><text x="1" y="18" font-size="9" font-weight="bold" fill="#111" font-family="Liberation Sans">-X</text></svg>
<svg style="position:absolute;left:1616px;top:55px;" width="8" height="5" viewBox="0 0 8 5"><path d="M0 0h8l-4 4.5z" fill="#222"/></svg>
<svg style="position:absolute;left:1626px;top:47px;" width="20" height="20" viewBox="0 0 20 20"><rect x="1" y="1" width="8" height="7" fill="#f0e860" stroke="#666"/><path d="M9 15l6-8M12 3l4 3" stroke="#555" stroke-width="2.5"/><path d="M1 18h16M6 18v-4h6" stroke="#555" stroke-width="1.8" fill="none"/></svg>
<svg style="position:absolute;left:1654px;top:55px;" width="8" height="5" viewBox="0 0 8 5"><path d="M0 0h8l-4 4.5z" fill="#222"/></svg>
<div style="left:1668px;top:47px;width:1px;height:20px;background:#d8d8d8"></div>
<svg style="position:absolute;left:1677px;top:47px;" width="20" height="20" viewBox="0 0 20 20"><path d="M2 8l5-4h5v5l4-2h3v8l-5 4h-12z" fill="#c8d8ec" stroke="#8aa0c0"/><path d="M2 8h5v3h6l5-4" fill="none" stroke="#8aa0c0"/></svg>
<svg style="position:absolute;left:1700px;top:55px;" width="8" height="5" viewBox="0 0 8 5"><path d="M0 0h8l-4 4.5z" fill="#222"/></svg>
<svg style="position:absolute;left:1713px;top:47px;" width="20" height="20" viewBox="0 0 20 20"><path d="M1 12l6-3h12l-6 3z" fill="#6a9ad8" stroke="#4a7ab0" stroke-width="0.6"/></svg>
<svg style="position:absolute;left:1738px;top:55px;" width="8" height="5" viewBox="0 0 8 5"><path d="M0 0h8l-4 4.5z" fill="#222"/></svg>
<svg style="position:absolute;left:1750px;top:47px;" width="20" height="20" viewBox="0 0 20 20"><text x="5" y="9" font-size="9" font-weight="bold" fill="#222" font-family="Liberation Sans">10</text><path d="M1 11h18M1.5 8v7M18.5 8v7" stroke="#333"/></svg>
<svg style="position:absolute;left:1775px;top:55px;" width="8" height="5" viewBox="0 0 8 5"><path d="M0 0h8l-4 4.5z" fill="#222"/></svg>
<svg style="position:absolute;left:1790px;top:47px;" width="20" height="20" viewBox="0 0 20 20"><path d="M3 5l6-3h9v13h-12v-10z" fill="#bbb"/><rect x="9" y="8" width="5" height="4" fill="#eee"/><path d="M1 18h8M5 5v13" stroke="#999" stroke-width="2"/></svg>
<svg style="position:absolute;left:1813px;top:55px;" width="8" height="5" viewBox="0 0 8 5"><path d="M0 0h8l-4 4.5z" fill="#999"/></svg>
<svg style="position:absolute;left:1827px;top:47px;" width="20" height="20" viewBox="0 0 20 20"><path d="M3 5l4-3h10v11l-4 4h-10z" fill="none" stroke="#aa8ab8" stroke-dasharray="1.5 1"/><circle cx="3" cy="5" r="1.6" fill="#e01010"/><circle cx="7" cy="2" r="1.6" fill="#e01010"/><circle cx="17" cy="2" r="1.6" fill="#e01010"/><circle cx="17" cy="13" r="1.6" fill="#e01010"/><circle cx="13" cy="17" r="1.6" fill="#e01010"/><circle cx="3" cy="17" r="1.6" fill="#e01010"/><circle cx="8" cy="9" r="1.6" fill="#e01010"/><circle cx="12" cy="9" r="1.6" fill="#e01010"/></svg>
<svg style="position:absolute;left:2.5px;top:74px;" width="4" height="22" viewBox="0 0 4 22"><g fill="#a8a8a8"><rect x="1" y="1" width="2" height="2"/><rect x="1" y="5" width="2" height="2"/><rect x="1" y="9" width="2" height="2"/><rect x="1" y="13" width="2" height="2"/><rect x="1" y="17" width="2" height="2"/></g></svg>
<svg style="position:absolute;left:9px;top:75px;" width="20" height="20" viewBox="0 0 20 20"><g transform="translate(0,0) scale(1)"><path d="M5.5 0.5l1.3 3 3.2-.8-1.8 2.7 2.5 2-3.2.4.3 3.2-2.3-2.2-2.3 2.2.3-3.2-3.2-.4 2.5-2-1.8-2.7 3.2.8z" fill="#f8f000" stroke="#c8b000" stroke-width="0.5"/></g><circle cx="11" cy="11" r="2" fill="#e01010"/></svg>
<svg style="position:absolute;left:36px;top:83px;" width="8" height="5" viewBox="0 0 8 5"><path d="M0 0h8l-4 4.5z" fill="#222"/></svg>
<svg style="position:absolute;left:49px;top:75px;" width="20" height="20" viewBox="0 0 20 20"><g transform="translate(0,0) scale(1)"><path d="M5.5 0.5l1.3 3 3.2-.8-1.8 2.7 2.5 2-3.2.4.3 3.2-2.3-2.2-2.3 2.2.3-3.2-3.2-.4 2.5-2-1.8-2.7 3.2.8z" fill="#f8f000" stroke="#c8b000" stroke-width="0.5"/></g><path d="M3 18l13-14" stroke="#111" stroke-width="1.3"/><circle cx="3" cy="18" r="1.8" fill="#e01010"/><circle cx="16" cy="4" r="1.8" fill="#e01010"/></svg>
<svg style="position:absolute;left:75px;top:75px;" width="20" height="20" viewBox="0 0 20 20"><g transform="translate(0,0) scale(1)"><path d="M5.5 0.5l1.3 3 3.2-.8-1.8 2.7 2.5 2-3.2.4.3 3.2-2.3-2.2-2.3 2.2.3-3.2-3.2-.4 2.5-2-1.8-2.7 3.2.8z" fill="#f8f000" stroke="#c8b000" stroke-width="0.5"/></g><path d="M3 18l13-14" stroke="#a8c0e8" stroke-width="3"/><circle cx="3" cy="18" r="1.8" fill="#e01010"/><circle cx="16" cy="4" r="1.8" fill="#e01010"/><path d="M12 14h5M14.5 14v5M12 19h5" stroke="#5a6a9a" stroke-width="1.2"/></svg>
<svg style="position:absolute;left:100px;top:83px;" width="8" height="5" viewBox="0 0 8 5"><path d="M0 0h8l-4 4.5z" fill="#222"/></svg>
<svg style="position:absolute;left:113px;top:75px;" width="20" height="20" viewBox="0 0 20 20"><g transform="translate(0,0) scale(1)"><path d="M5.5 0.5l1.3 3 3.2-.8-1.8 2.7 2.5 2-3.2.4.3 3.2-2.3-2.2-2.3 2.2.3-3.2-3.2-.4 2.5-2-1.8-2.7 3.2.8z" fill="#f8f000" stroke="#c8b000" stroke-width="0.5"/></g><path d="M8 3h9v10l-8 6" fill="none" stroke="#111" stroke-width="1.3"/><path d="M8 3v6" stroke="#111" stroke-width="1.3"/><circle cx="8" cy="3" r="1.8" fill="#e01010"/><circle cx="17" cy="3" r="1.8" fill="#e01010"/><circle cx="8" cy="9" r="1.8" fill="#e01010"/><circle cx="17" cy="13" r="1.8" fill="#e01010"/><circle cx="9" cy="19" r="1.8" fill="#e01010"/></svg>
<svg style="position:absolute;left:138px;top:83px;" width="8" height="5" viewBox="0 0 8 5"><path d="M0 0h8l-4 4.5z" fill="#222"/></svg>
<div style="left:152px;top:75px;width:1px;height:20px;background:#d8d8d8"></div>
<svg style="position:absolute;left:157px;top:75px;" width="20" height="20" viewBox="0 0 20 20"><g transform="translate(0,0) scale(1)"><path d="M5.5 0.5l1.3 3 3.2-.8-1.8 2.7 2.5 2-3.2.4.3 3.2-2.3-2.2-2.3 2.2.3-3.2-3.2-.4 2.5-2-1.8-2.7 3.2.8z" fill="#f8f000" stroke="#c8b000" stroke-width="0.5"/></g><circle cx="11" cy="3" r="1.8" fill="#e01010"/><circle cx="11" cy="10" r="3.5" fill="#2a9a3a"/><path d="M4 19l7-7 8 7z" fill="#3aba4a"/></svg>
<svg style="position:absolute;left:184px;top:75px;" width="20" height="20" viewBox="0 0 20 20"><g transform="translate(0,0) scale(1)"><path d="M5.5 0.5l1.3 3 3.2-.8-1.8 2.7 2.5 2-3.2.4.3 3.2-2.3-2.2-2.3 2.2.3-3.2-3.2-.4 2.5-2-1.8-2.7 3.2.8z" fill="#f8f000" stroke="#c8b000" stroke-width="0.5"/></g><path d="M2 10h16" stroke="#111" stroke-width="1.3"/><circle cx="2" cy="10" r="1.8" fill="#e01010"/><circle cx="18" cy="10" r="1.8" fill="#e01010"/><g fill="#3aba4a"><circle cx="5" cy="14" r="2.3"/><circle cx="14" cy="14" r="2.3"/><path d="M1 19l4-4 4 4zM10 19l4-4 4 4z"/></g></svg>
<svg style="position:absolute;left:210px;top:75px;" width="20" height="20" viewBox="0 0 20 20"><g transform="translate(0,0) scale(1)"><path d="M5.5 0.5l1.3 3 3.2-.8-1.8 2.7 2.5 2-3.2.4.3 3.2-2.3-2.2-2.3 2.2.3-3.2-3.2-.4 2.5-2-1.8-2.7 3.2.8z" fill="#f8f000" stroke="#c8b000" stroke-width="0.5"/></g><path d="M1 11l6-3h12l-6 3z" fill="#8ab0e0" stroke="#5a80b0" stroke-width="0.6"/><g fill="#3aba4a"><path d="M1 18l3-5 3 5zM7 18l3-5 3 5zM13 18l3-5 3 5z"/></g></svg>
<div style="left:237px;top:75px;width:1px;height:20px;background:#d8d8d8"></div>
<svg style="position:absolute;left:243px;top:75px;" width="20" height="20" viewBox="0 0 20 20"><g transform="translate(0,0) scale(1)"><path d="M5.5 0.5l1.3 3 3.2-.8-1.8 2.7 2.5 2-3.2.4.3 3.2-2.3-2.2-2.3 2.2.3-3.2-3.2-.4 2.5-2-1.8-2.7 3.2.8z" fill="#f8f000" stroke="#c8b000" stroke-width="0.5"/></g><text x="10" y="12" font-size="8" font-weight="bold" fill="#111" font-family="Liberation Sans">x</text><path d="M1 17h18M1.5 13v7M18.5 13v7" stroke="#111" stroke-width="1.2"/></svg>
<svg style="position:absolute;left:268px;top:83px;" width="8" height="5" viewBox="0 0 8 5"><path d="M0 0h8l-4 4.5z" fill="#222"/></svg>
<svg style="position:absolute;left:280px;top:75px;" width="20" height="20" viewBox="0 0 20 20"><g transform="translate(0,0) scale(1)"><path d="M5.5 0.5l1.3 3 3.2-.8-1.8 2.7 2.5 2-3.2.4.3 3.2-2.3-2.2-2.3 2.2.3-3.2-3.2-.4 2.5-2-1.8-2.7 3.2.8z" fill="#f8f000" stroke="#c8b000" stroke-width="0.5"/></g><text x="7" y="12" font-size="8" font-weight="bold" fill="#111" font-family="Liberation Sans">xx</text><path d="M19 14h-15l-3 4" stroke="#111" stroke-width="1.2" fill="none"/><path d="M1 15v4h4" stroke="#111" fill="none"/></svg>
<svg style="position:absolute;left:306px;top:75px;" width="20" height="20" viewBox="0 0 20 20"><g transform="translate(0,0) scale(1)"><path d="M5.5 0.5l1.3 3 3.2-.8-1.8 2.7 2.5 2-3.2.4.3 3.2-2.3-2.2-2.3 2.2.3-3.2-3.2-.4 2.5-2-1.8-2.7 3.2.8z" fill="#f8f000" stroke="#c8b000" stroke-width="0.5"/></g><rect x="4.5" y="5.5" width="13" height="13" fill="none" stroke="#8a8aa8" stroke-dasharray="1.5 1.5"/></svg>
<div style="left:334px;top:75px;width:1px;height:20px;background:#d8d8d8"></div>
<svg style="position:absolute;left:340px;top:75px;" width="20" height="20" viewBox="0 0 20 20"><g transform="translate(0,0) scale(1)"><path d="M5.5 0.5l1.3 3 3.2-.8-1.8 2.7 2.5 2-3.2.4.3 3.2-2.3-2.2-2.3 2.2.3-3.2-3.2-.4 2.5-2-1.8-2.7 3.2.8z" fill="#f8f000" stroke="#c8b000" stroke-width="0.5"/></g><path d="M4 9h14v10h-14z" fill="#a8c6ee" stroke="#6a8ac0"/><circle cx="4" cy="9" r="1.8" fill="#e01010"/><circle cx="18" cy="19" r="1.8" fill="#e01010"/></svg>
<svg style="position:absolute;left:365px;top:83px;" width="8" height="5" viewBox="0 0 8 5"><path d="M0 0h8l-4 4.5z" fill="#222"/></svg>
<svg style="position:absolute;left:377px;top:75px;" width="20" height="20" viewBox="0 0 20 20"><g transform="translate(0,0) scale(1)"><path d="M5.5 0.5l1.3 3 3.2-.8-1.8 2.7 2.5 2-3.2.4.3 3.2-2.3-2.2-2.3 2.2.3-3.2-3.2-.4 2.5-2-1.8-2.7 3.2.8z" fill="#f8f000" stroke="#c8b000" stroke-width="0.5"/></g><path d="M4 10c0-4 6-6 11-3l3 6-4 6h-8z" fill="#a8c6ee" stroke="#6a8ac0"/><circle cx="6" cy="12" r="1.8" fill="#e01010"/><circle cx="12" cy="9" r="1.8" fill="#e01010"/><circle cx="9" cy="16" r="1.8" fill="#e01010"/><circle cx="16" cy="14" r="1.8" fill="#e01010"/></svg>
<svg style="position:absolute;left:403px;top:83px;" width="8" height="5" viewBox="0 0 8 5"><path d="M0 0h8l-4 4.5z" fill="#222"/></svg>
<svg style="position:absolute;left:418px;top:75px;" width="20" height="20" viewBox="0 0 20 20"><g transform="translate(0,0) scale(1)"><path d="M5.5 0.5l1.3 3 3.2-.8-1.8 2.7 2.5 2-3.2.4.3 3.2-2.3-2.2-2.3 2.2.3-3.2-3.2-.4 2.5-2-1.8-2.7 3.2.8z" fill="#f8f000" stroke="#c8b000" stroke-width="0.5"/></g><rect x="4.5" y="5.5" width="13" height="13" fill="#a8c6ee" stroke="#6a8ac0" stroke-width="1.5"/><circle cx="4.5" cy="5.5" r="1.8" fill="#e01010"/><circle cx="17.5" cy="5.5" r="1.8" fill="#e01010"/><circle cx="4.5" cy="18.5" r="1.8" fill="#e01010"/><circle cx="17.5" cy="18.5" r="1.8" fill="#e01010"/></svg>
<svg style="position:absolute;left:441px;top:83px;" width="8" height="5" viewBox="0 0 8 5"><path d="M0 0h8l-4 4.5z" fill="#222"/></svg>
<svg style="position:absolute;left:455px;top:75px;" width="20" height="20" viewBox="0 0 20 20"><g transform="translate(0,0) scale(1)"><path d="M5.5 0.5l1.3 3 3.2-.8-1.8 2.7 2.5 2-3.2.4.3 3.2-2.3-2.2-2.3 2.2.3-3.2-3.2-.4 2.5-2-1.8-2.7 3.2.8z" fill="#f8f000" stroke="#c8b000" stroke-width="0.5"/></g><path d="M4 9l5-3v12l-5 2z" fill="#a8c6ee" stroke="#6a8ac0"/><path d="M9 6l9-5v13l-9 4z" fill="#c8dcf4" stroke="#6a8ac0"/><circle cx="4" cy="20" r="1.8" fill="#e01010"/><circle cx="18" cy="14" r="1.8" fill="#e01010"/><circle cx="9" cy="18" r="1.8" fill="#e01010"/></svg>
<svg style="position:absolute;left:480px;top:83px;" width="8" height="5" viewBox="0 0 8 5"><path d="M0 0h8l-4 4.5z" fill="#222"/></svg>
<svg style="position:absolute;left:494px;top:75px;" width="20" height="20" viewBox="0 0 20 20"><g transform="translate(0,0) scale(1)"><path d="M5.5 0.5l1.3 3 3.2-.8-1.8 2.7 2.5 2-3.2.4.3 3.2-2.3-2.2-2.3 2.2.3-3.2-3.2-.4 2.5-2-1.8-2.7 3.2.8z" fill="#f8f000" stroke="#c8b000" stroke-width="0.5"/></g><rect x="9.5" y="1.5" width="9" height="7" fill="#fff" stroke="#333"/><rect x="9.5" y="1.5" width="9" height="2" fill="#2a5ab0"/><path d="M3 10l4-3h10v10l-4 3h-10z" fill="#a8c6ee" stroke="#6a8ac0"/></svg>
<div style="left:519px;top:75px;width:1px;height:20px;background:#d8d8d8"></div>
<svg style="position:absolute;left:527px;top:75px;" width="20" height="20" viewBox="0 0 20 20"><path d="M10 1v18" stroke="#ccc" stroke-width="3"/><path d="M4 3l4 4" stroke="#ccc" stroke-width="2"/></svg>
<svg style="position:absolute;left:550px;top:83px;" width="8" height="5" viewBox="0 0 8 5"><path d="M0 0h8l-4 4.5z" fill="#999"/></svg>
<div style="left:565px;top:75px;width:1px;height:20px;background:#d8d8d8"></div>
<svg style="position:absolute;left:567px;top:75px;" width="20" height="20" viewBox="0 0 20 20"><g transform="translate(0,0) scale(1)"><path d="M5.5 0.5l1.3 3 3.2-.8-1.8 2.7 2.5 2-3.2.4.3 3.2-2.3-2.2-2.3 2.2.3-3.2-3.2-.4 2.5-2-1.8-2.7 3.2.8z" fill="#f8f000" stroke="#c8b000" stroke-width="0.5"/></g><path d="M11 6v8" stroke="#3a78c8" stroke-width="1.5"/><path d="M8.5 12l2.5 4 2.5-4z" fill="#3a78c8"/><circle cx="11" cy="18" r="1.8" fill="#e01010"/></svg>
<svg style="position:absolute;left:594px;top:75px;" width="20" height="20" viewBox="0 0 20 20"><g transform="translate(0,0) scale(1)"><path d="M5.5 0.5l1.3 3 3.2-.8-1.8 2.7 2.5 2-3.2.4.3 3.2-2.3-2.2-2.3 2.2.3-3.2-3.2-.4 2.5-2-1.8-2.7 3.2.8z" fill="#f8f000" stroke="#c8b000" stroke-width="0.5"/></g><g stroke="#3a78c8" stroke-width="1.2"><path d="M5 7v8M10 7v8M15 7v8M5 7h10"/></g><g fill="#3a78c8"><path d="M3 13l2 3 2-3zM8 13l2 3 2-3zM13 13l2 3 2-3z"/></g><path d="M2 18h16" stroke="#111" stroke-width="1.5"/><circle cx="2" cy="18" r="1.8" fill="#e01010"/><circle cx="18" cy="18" r="1.8" fill="#e01010"/></svg>
<svg style="position:absolute;left:620px;top:75px;" width="20" height="20" viewBox="0 0 20 20"><g transform="translate(0,0) scale(1)"><path d="M5.5 0.5l1.3 3 3.2-.8-1.8 2.7 2.5 2-3.2.4.3 3.2-2.3-2.2-2.3 2.2.3-3.2-3.2-.4 2.5-2-1.8-2.7 3.2.8z" fill="#f8f000" stroke="#c8b000" stroke-width="0.5"/></g><g stroke="#3a78c8" stroke-width="1.2"><path d="M5 7v8M10 7v8M15 7v8M5 7h10"/></g><g fill="#3a78c8"><path d="M3 13l2 3 2-3zM8 13l2 3 2-3zM13 13l2 3 2-3z"/></g><path d="M1 18h18" stroke="#a8c6ee" stroke-width="3"/><circle cx="2" cy="18" r="1.8" fill="#e01010"/><circle cx="18" cy="18" r="1.8" fill="#e01010"/></svg>
<svg style="position:absolute;left:648px;top:75px;" width="20" height="20" viewBox="0 0 20 20"><g transform="translate(0,0) scale(1)"><path d="M5.5 0.5l1.3 3 3.2-.8-1.8 2.7 2.5 2-3.2.4.3 3.2-2.3-2.2-2.3 2.2.3-3.2-3.2-.4 2.5-2-1.8-2.7 3.2.8z" fill="#f8f000" stroke="#c8b000" stroke-width="0.5"/></g><g stroke="#3a78c8" stroke-width="1.2"><path d="M5 7v8M10 7v8M15 7v8M5 7h10"/></g><g fill="#3a78c8"><path d="M3 13l2 3 2-3zM8 13l2 3 2-3zM13 13l2 3 2-3z"/></g><path d="M3 15l4-3h11v6l-4 2h-11z" fill="none" stroke="#6a8ac0"/><circle cx="3" cy="15" r="1.8" fill="#e01010"/><circle cx="14" cy="20" r="1.8" fill="#e01010"/></svg>
<svg style="position:absolute;left:676px;top:75px;" width="20" height="20" viewBox="0 0 20 20"><g transform="translate(0,0) scale(1)"><path d="M5.5 0.5l1.3 3 3.2-.8-1.8 2.7 2.5 2-3.2.4.3 3.2-2.3-2.2-2.3 2.2.3-3.2-3.2-.4 2.5-2-1.8-2.7 3.2.8z" fill="#f8f000" stroke="#c8b000" stroke-width="0.5"/></g><path d="M3 7c-2 5 0 10 5 12" fill="none" stroke="#1a9a3a" stroke-width="1.6"/><path d="M8 2v16" stroke="#222" stroke-dasharray="1.5 1"/><path d="M12 13h6M15 13v6M12 19h6" stroke="#444" stroke-width="1.4"/></svg>
<svg style="position:absolute;left:699px;top:83px;" width="8" height="5" viewBox="0 0 8 5"><path d="M0 0h8l-4 4.5z" fill="#222"/></svg>
<svg style="position:absolute;left:714px;top:75px;" width="20" height="20" viewBox="0 0 20 20"><g transform="translate(0,0) scale(1)"><path d="M5.5 0.5l1.3 3 3.2-.8-1.8 2.7 2.5 2-3.2.4.3 3.2-2.3-2.2-2.3 2.2.3-3.2-3.2-.4 2.5-2-1.8-2.7 3.2.8z" fill="#f8f000" stroke="#c8b000" stroke-width="0.5"/></g><circle cx="11" cy="6" r="3.5" fill="#1a8a2a"/><path d="M4 14l7-6 7 6z" fill="#3aba4a"/><circle cx="12" cy="16" r="1.8" fill="#e01010"/><circle cx="17" cy="19" r="1.8" fill="#e01010"/><path d="M11 14l6 5" stroke="#e01010" stroke-dasharray="1.5 1"/></svg>
<svg style="position:absolute;left:738px;top:83px;" width="8" height="5" viewBox="0 0 8 5"><path d="M0 0h8l-4 4.5z" fill="#222"/></svg>
<div style="left:752px;top:75px;width:1px;height:20px;background:#d8d8d8"></div>
<svg style="position:absolute;left:754px;top:74px;" width="4" height="22" viewBox="0 0 4 22"><g fill="#a8a8a8"><rect x="1" y="1" width="2" height="2"/><rect x="1" y="5" width="2" height="2"/><rect x="1" y="9" width="2" height="2"/><rect x="1" y="13" width="2" height="2"/><rect x="1" y="17" width="2" height="2"/></g></svg>
<svg style="position:absolute;left:762px;top:75px;" width="20" height="20" viewBox="0 0 20 20"><rect x="9.5" y="1.5" width="9" height="7" fill="#fff" stroke="#333"/><rect x="9.5" y="1.5" width="9" height="2" fill="#2a5ab0"/><path d="M1 7h13l-5 6v6l-3-2v-4z" fill="#3a80c8"/></svg>
<div style="left:788px;top:75px;width:1px;height:20px;background:#d8d8d8"></div>
<svg style="position:absolute;left:795px;top:75px;" width="20" height="20" viewBox="0 0 20 20"><path d="M3 18v-10c0-5 14-5 14 0v10" fill="none" stroke="#999" stroke-width="2"/><path d="M6 18v-9c0-3 8-3 8 0v9" fill="none" stroke="#bbb" stroke-width="1.5"/></svg>
<svg style="position:absolute;left:820px;top:75px;" width="20" height="20" viewBox="0 0 20 20"><rect x="2" y="3" width="16" height="14" fill="none" stroke="#aaa" stroke-width="1.5"/><path d="M2 6h16M2 14h16M6 3v3M10 3v3M14 3v3M6 14v3M10 14v3M14 14v3" stroke="#aaa"/><path d="M8 8l4 2-4 2z" fill="#aaa"/></svg>
<div style="left:847px;top:75px;width:1px;height:20px;background:#d8d8d8"></div>
<svg style="position:absolute;left:852px;top:75px;" width="20" height="20" viewBox="0 0 20 20"><path d="M2 4c1 8 3 12 8 12s7-4 8-12" fill="none" stroke="#999" stroke-width="1.6"/><path d="M2 4v4M18 4v4" stroke="#999"/></svg>
<svg style="position:absolute;left:879px;top:75px;" width="20" height="20" viewBox="0 0 20 20"><path d="M1 12c4-4 10-5 17-4l-2 4c-5 0-10 1-15 4z" fill="#bbb"/></svg>
<svg style="position:absolute;left:905px;top:75px;" width="20" height="20" viewBox="0 0 20 20"><rect x="2" y="3" width="16" height="15" rx="2" fill="#ccc" stroke="#999"/><circle cx="10" cy="10.5" r="4.5" fill="#fff" stroke="#888" stroke-width="1.5"/><circle cx="10" cy="10.5" r="2" fill="#888"/></svg>
<svg style="position:absolute;left:931px;top:75px;" width="20" height="20" viewBox="0 0 20 20"><path d="M6 4v14M3 8l3-4 3 4M4 13h4" stroke="#aaa" stroke-width="1.5" fill="#aaa"/><path d="M10 6h8M13 3l-3 3 3 3" stroke="#aaa" stroke-width="1.5" fill="none"/></svg>
<svg style="position:absolute;left:958px;top:75px;" width="20" height="20" viewBox="0 0 20 20"><path d="M2 16l16-9" stroke="#bbb" stroke-width="2.2"/></svg>
<div style="left:984px;top:75px;width:1px;height:20px;background:#d8d8d8"></div>
<svg style="position:absolute;left:990px;top:75px;" width="20" height="20" viewBox="0 0 20 20"><path d="M3 6h14" stroke="#555" stroke-width="1.3"/><circle cx="3" cy="6" r="1.5" fill="#555"/><circle cx="17" cy="6" r="1.5" fill="#555"/><path d="M2 14c2-3 4-3 8 0s6 3 8 0" fill="none" stroke="#555" stroke-width="1.4"/><path d="M1 14h18" stroke="#555" stroke-width="0.8"/></svg>
<svg style="position:absolute;left:1016px;top:75px;" width="20" height="20" viewBox="0 0 20 20"><path d="M3 6h14" stroke="#555" stroke-width="1.3"/><circle cx="3" cy="6" r="1.5" fill="#555"/><circle cx="17" cy="6" r="1.5" fill="#555"/><rect x="3" y="4" width="14" height="4" rx="2" fill="#ccc" stroke="#777"/><path d="M2 14c2-3 4-3 8 0s6 3 8 0" fill="none" stroke="#555" stroke-width="1.4"/><path d="M1 14h18" stroke="#555" stroke-width="0.8"/></svg>
<svg style="position:absolute;left:1042px;top:75px;" width="20" height="20" viewBox="0 0 20 20"><path d="M3 6h14" stroke="#555" stroke-width="1.3"/><circle cx="3" cy="6" r="1.5" fill="#555"/><circle cx="17" cy="6" r="1.5" fill="#555"/><circle cx="7" cy="6" r="1.5" fill="#555"/><circle cx="13" cy="6" r="1.5" fill="#555"/><path d="M2 14c2-3 4-3 8 0s6 3 8 0" fill="none" stroke="#555" stroke-width="1.4"/><path d="M1 14h18" stroke="#555" stroke-width="0.8"/></svg>
<svg style="position:absolute;left:1069px;top:75px;" width="20" height="20" viewBox="0 0 20 20"><path d="M3 3h14M5 3v6M15 3v6" stroke="#555" stroke-width="1.3"/><path d="M2 12l3-4 3 4zM12 12l3-4 3 4z" fill="#888"/><path d="M2 16c2-3 4-3 8 0s6 3 8 0" fill="none" stroke="#555" stroke-width="1.4"/></svg>
<svg style="position:absolute;left:1095px;top:75px;" width="20" height="20" viewBox="0 0 20 20"><path d="M2 12l16-9" stroke="#999" stroke-width="1.3"/><path d="M2 16c2-3 4-3 8 0s6 3 8 0" fill="none" stroke="#555" stroke-width="1.4"/></svg>
<svg style="position:absolute;left:1121px;top:75px;" width="20" height="20" viewBox="0 0 20 20"><g transform="translate(0,0) scale(1)"><path d="M5.5 0.5l1.3 3 3.2-.8-1.8 2.7 2.5 2-3.2.4.3 3.2-2.3-2.2-2.3 2.2.3-3.2-3.2-.4 2.5-2-1.8-2.7 3.2.8z" fill="#f8f000" stroke="#c8b000" stroke-width="0.5"/></g><rect x="9.5" y="1.5" width="9" height="7" fill="#fff" stroke="#333"/><rect x="9.5" y="1.5" width="9" height="2" fill="#2a5ab0"/><path d="M2 19l15-9" stroke="#4a7ae0" stroke-width="3"/></svg>
<div style="left:1147px;top:75px;width:1px;height:20px;background:#d8d8d8"></div>
<svg style="position:absolute;left:1153px;top:75px;" width="20" height="20" viewBox="0 0 20 20"><path d="M2 2v17h17z" fill="#ddd" stroke="#999"/><path d="M4 4l12 12" stroke="#fff" stroke-width="2"/><path d="M12 4l6 -2" stroke="#aaa" stroke-width="2"/></svg>
<svg style="position:absolute;left:1178px;top:83px;" width="8" height="5" viewBox="0 0 8 5"><path d="M0 0h8l-4 4.5z" fill="#999"/></svg>
<div style="left:1194px;top:75px;width:1px;height:20px;background:#d8d8d8"></div>
<svg style="position:absolute;left:1195px;top:74px;" width="4" height="22" viewBox="0 0 4 22"><g fill="#a8a8a8"><rect x="1" y="1" width="2" height="2"/><rect x="1" y="5" width="2" height="2"/><rect x="1" y="9" width="2" height="2"/><rect x="1" y="13" width="2" height="2"/><rect x="1" y="17" width="2" height="2"/></g></svg>
<div style="left:1201px;top:75px;width:166px;height:21px;background:#e4e4f0"></div>
<div style="left:1207px;top:79px;width:12px;height:13px;background:#ccfaff"></div>
<div class="t" style="left:1222px;top:77.0px;height:16px;line-height:16px;">1 - Global XYZ</div>
<svg style="position:absolute;left:1352px;top:81px;" width="13" height="8" viewBox="0 0 13 8"><path d="M1.5 1.5l5 5 5-5" fill="none" stroke="#333" stroke-width="1.2"/></svg>
<svg style="position:absolute;left:1371px;top:75px;" width="20" height="20" viewBox="0 0 20 20"><rect x="9.5" y="1.5" width="9" height="7" fill="#fff" stroke="#333"/><rect x="9.5" y="1.5" width="9" height="2" fill="#2a5ab0"/><path d="M10 14l-8 5" stroke="#20a040" stroke-width="1.5"/><path d="M10 14h8" stroke="#e04020" stroke-width="1.5"/><path d="M10 14v-5" stroke="#f0c020" stroke-width="1.5"/><circle cx="10" cy="14" r="1.5" fill="#f0c020"/></svg>
<div style="left:1396px;top:75px;width:1px;height:20px;background:#d8d8d8"></div>
<svg style="position:absolute;left:1404px;top:75px;" width="20" height="20" viewBox="0 0 20 20"><g fill="#888"><rect x="2.0" y="4.0" width="1.5" height="1.5"/><rect x="2.0" y="7.5" width="1.5" height="1.5"/><rect x="2.0" y="11.0" width="1.5" height="1.5"/><rect x="2.0" y="14.5" width="1.5" height="1.5"/><rect x="2.0" y="18.0" width="1.5" height="1.5"/><rect x="5.5" y="4.0" width="1.5" height="1.5"/><rect x="5.5" y="7.5" width="1.5" height="1.5"/><rect x="5.5" y="11.0" width="1.5" height="1.5"/><rect x="5.5" y="14.5" width="1.5" height="1.5"/><rect x="5.5" y="18.0" width="1.5" height="1.5"/><rect x="9.0" y="4.0" width="1.5" height="1.5"/><rect x="9.0" y="7.5" width="1.5" height="1.5"/><rect x="9.0" y="11.0" width="1.5" height="1.5"/><rect x="9.0" y="14.5" width="1.5" height="1.5"/><rect x="9.0" y="18.0" width="1.5" height="1.5"/><rect x="12.5" y="4.0" width="1.5" height="1.5"/><rect x="12.5" y="7.5" width="1.5" height="1.5"/><rect x="12.5" y="11.0" width="1.5" height="1.5"/><rect x="12.5" y="14.5" width="1.5" height="1.5"/><rect x="12.5" y="18.0" width="1.5" height="1.5"/><rect x="16.0" y="4.0" width="1.5" height="1.5"/><rect x="16.0" y="7.5" width="1.5" height="1.5"/><rect x="16.0" y="11.0" width="1.5" height="1.5"/><rect x="16.0" y="14.5" width="1.5" height="1.5"/><rect x="16.0" y="18.0" width="1.5" height="1.5"/></g><rect x="9.5" y="1.5" width="9" height="7" fill="#fff" stroke="#333"/><rect x="9.5" y="1.5" width="9" height="2" fill="#2a5ab0"/></svg>
<svg style="position:absolute;left:1429px;top:75px;" width="20" height="20" viewBox="0 0 20 20"><g fill="#aaa"><rect x="2.0" y="2.0" width="1.2" height="1.2"/><rect x="2.0" y="5.5" width="1.2" height="1.2"/><rect x="2.0" y="9.0" width="1.2" height="1.2"/><rect x="2.0" y="12.5" width="1.2" height="1.2"/><rect x="2.0" y="16.0" width="1.2" height="1.2"/><rect x="5.5" y="2.0" width="1.2" height="1.2"/><rect x="5.5" y="5.5" width="1.2" height="1.2"/><rect x="5.5" y="9.0" width="1.2" height="1.2"/><rect x="5.5" y="12.5" width="1.2" height="1.2"/><rect x="5.5" y="16.0" width="1.2" height="1.2"/><rect x="9.0" y="2.0" width="1.2" height="1.2"/><rect x="9.0" y="5.5" width="1.2" height="1.2"/><rect x="9.0" y="9.0" width="1.2" height="1.2"/><rect x="9.0" y="12.5" width="1.2" height="1.2"/><rect x="9.0" y="16.0" width="1.2" height="1.2"/><rect x="12.5" y="2.0" width="1.2" height="1.2"/><rect x="12.5" y="5.5" width="1.2" height="1.2"/><rect x="12.5" y="9.0" width="1.2" height="1.2"/><rect x="12.5" y="12.5" width="1.2" height="1.2"/><rect x="12.5" y="16.0" width="1.2" height="1.2"/><rect x="16.0" y="2.0" width="1.2" height="1.2"/><rect x="16.0" y="5.5" width="1.2" height="1.2"/><rect x="16.0" y="9.0" width="1.2" height="1.2"/><rect x="16.0" y="12.5" width="1.2" height="1.2"/><rect x="16.0" y="16.0" width="1.2" height="1.2"/></g><circle cx="10" cy="10" r="4" fill="#fff" stroke="#1a3a9a" stroke-width="1.8"/><path d="M10 1v18M1 10h18" stroke="#1a3a9a" stroke-width="1.4"/></svg>
<div style="left:1454px;top:73px;width:25px;height:25px;background:#cce4f7;border:1px solid #99c9ef"></div>
<svg style="position:absolute;left:1456px;top:75px;" width="20" height="20" viewBox="0 0 20 20"><path d="M2 11l8-4 8 2-8 4z" fill="#e03030"/><path d="M10 2v16M4 6h12v8h-12z" fill="none" stroke="#4a70b0" stroke-width="1.2"/><path d="M4 6l6-4 6 4" fill="none" stroke="#4a70b0"/></svg>
<svg style="position:absolute;left:1482px;top:75px;" width="20" height="20" viewBox="0 0 20 20"><path d="M6 3l8-2v14l-8 4z" fill="#e03030"/><path d="M2 10h16M4 5h12v10h-12z" fill="none" stroke="#4a70b0" stroke-width="1.2"/></svg>
<svg style="position:absolute;left:1508px;top:75px;" width="20" height="20" viewBox="0 0 20 20"><rect x="4" y="4" width="12" height="12" fill="#e03030"/><path d="M2 10h16M10 2v16" stroke="#4a70b0" stroke-width="1.3"/><path d="M4 4l12 12" stroke="#a0b8e0"/></svg>
<svg style="position:absolute;left:1534px;top:75px;" width="20" height="20" viewBox="0 0 20 20"><path d="M4 6l4-3h8l-4 3z" fill="#a8c0e0" stroke="#2a5ab0" stroke-width="0.7"/><rect x="4" y="6" width="8" height="13" fill="#7a9ac8" stroke="#2a5ab0" stroke-width="0.7"/><path d="M12 6l4-3v13l-4 3z" fill="#4a70a8"/><path d="M1 4l5-2M14 2l5 2" stroke="#2a5ab0" stroke-width="1.3"/></svg>
<svg style="position:absolute;left:1560px;top:75px;" width="20" height="20" viewBox="0 0 20 20"><path d="M2 9l4-3h10l-4 3z" fill="#a8c0e0"/><rect x="2" y="9" width="10" height="7" fill="#7a9ac8" stroke="#2a5ab0" stroke-width="0.7"/><path d="M12 9l4-3v7l-4 3z" fill="#4a70a8"/><path d="M15 1v19" stroke="#2a5ab0" stroke-width="1.2" stroke-dasharray="3 1"/></svg>
<svg style="position:absolute;left:1586px;top:75px;" width="20" height="20" viewBox="0 0 20 20"><path d="M1 6v-5h5M19 14v5h-5M1 14v5h5M19 6v-5h-5" fill="none" stroke="#2a5ab0" stroke-width="1.5"/><path d="M6 9l3-3h7v7l-3 3h-7z" fill="#8aaad8" stroke="#2a5ab0" stroke-width="0.7"/></svg>
<div style="left:1613px;top:75px;width:1px;height:20px;background:#d8d8d8"></div>
<svg style="position:absolute;left:1619px;top:75px;" width="20" height="20" viewBox="0 0 20 20"><circle cx="5" cy="4" r="3" fill="none" stroke="#888"/><circle cx="13" cy="13" r="3" fill="none" stroke="#888"/><circle cx="13" cy="17" r="3" fill="none" stroke="#888"/><path d="M7 6l5 5" stroke="#888"/></svg>
<svg style="position:absolute;left:1644px;top:75px;" width="20" height="20" viewBox="0 0 20 20"><path d="M10 1v19" stroke="#555" stroke-dasharray="2 1.5"/><path d="M7 5c-5 1-6 8 0 9M13 5c5 1 6 8 0 9" fill="none" stroke="#666" stroke-width="1.5"/><path d="M5 12l2 2-1 3" fill="none" stroke="#666"/></svg>
<svg style="position:absolute;left:1670px;top:75px;" width="20" height="20" viewBox="0 0 20 20"><path d="M10 1v19" stroke="#555" stroke-dasharray="2 1.5"/><path d="M8 3l-6 15h6z" fill="#eee" stroke="#666"/><path d="M12 3l6 15h-6z" fill="#ddd" stroke="#666"/></svg>
<svg style="position:absolute;left:1697px;top:75px;" width="20" height="20" viewBox="0 0 20 20"><path d="M2 2l16 16M18 2l-16 16" stroke="#222" stroke-width="1.5"/><circle cx="2" cy="2" r="2" fill="#e01010"/><circle cx="18" cy="2" r="2" fill="#e01010"/><circle cx="2" cy="18" r="2" fill="#e01010"/><circle cx="18" cy="18" r="2" fill="#e01010"/><circle cx="10" cy="10" r="2" fill="#e01010"/></svg>
<svg style="position:absolute;left:1723px;top:75px;" width="20" height="20" viewBox="0 0 20 20"><rect x="1.5" y="4.5" width="17" height="14" rx="2" fill="#eee" stroke="#555" stroke-width="1.3"/><rect x="5" y="2" width="10" height="3" fill="#555"/><circle cx="10" cy="11.5" r="3.5" fill="none" stroke="#555" stroke-width="2.5" stroke-dasharray="2 1"/><circle cx="10" cy="11.5" r="1.5" fill="#555"/></svg>
<div style="left:1748px;top:75px;width:1px;height:20px;background:#d8d8d8"></div>
<svg style="position:absolute;left:1750px;top:74px;" width="4" height="22" viewBox="0 0 4 22"><g fill="#a8a8a8"><rect x="1" y="1" width="2" height="2"/><rect x="1" y="5" width="2" height="2"/><rect x="1" y="9" width="2" height="2"/><rect x="1" y="13" width="2" height="2"/><rect x="1" y="17" width="2" height="2"/></g></svg>
<svg style="position:absolute;left:1761px;top:75px;" width="20" height="20" viewBox="0 0 20 20"><path d="M3 2v17M17 2v17" stroke="#555" stroke-width="1.6"/><path d="M10 3v14" stroke="#222" stroke-width="1.6"/><circle cx="10" cy="3" r="2" fill="#e01010"/><circle cx="10" cy="17" r="2" fill="#e01010"/></svg>
<div class="t" style="left:1787px;top:78.0px;height:16px;line-height:16px;color:#555;font-size:13px">»</div>
<div style="left:1796px;top:75px;width:1px;height:20px;background:#d8d8d8"></div>
<svg style="position:absolute;left:1798px;top:74px;" width="4" height="22" viewBox="0 0 4 22"><g fill="#a8a8a8"><rect x="1" y="1" width="2" height="2"/><rect x="1" y="5" width="2" height="2"/><rect x="1" y="9" width="2" height="2"/><rect x="1" y="13" width="2" height="2"/><rect x="1" y="17" width="2" height="2"/></g></svg>
<svg style="position:absolute;left:1810px;top:75px;" width="20" height="20" viewBox="0 0 20 20"><path d="M2 10l8-8 6 6" fill="none" stroke="#222" stroke-width="1.3"/><path d="M5 14l9-6" stroke="#a8c0e8" stroke-width="3"/><circle cx="3" cy="12" r="1.8" fill="#e01010"/><circle cx="14" cy="6" r="1.8" fill="#e01010"/><circle cx="5" cy="16" r="1.8" fill="#e01010"/><path d="M12 13h6M15 13v6M12 19h6" stroke="#555" stroke-width="1.3"/></svg>
<svg style="position:absolute;left:1832px;top:83px;" width="8" height="5" viewBox="0 0 8 5"><path d="M0 0h8l-4 4.5z" fill="#222"/></svg>
<div class="t" style="left:1847px;top:78.0px;height:16px;line-height:16px;color:#555;font-size:13px">»</div>
<div style="left:1857px;top:75px;width:1px;height:20px;background:#d8d8d8"></div>
<svg style="position:absolute;left:1859px;top:74px;" width="4" height="22" viewBox="0 0 4 22"><g fill="#a8a8a8"><rect x="1" y="1" width="2" height="2"/><rect x="1" y="5" width="2" height="2"/><rect x="1" y="9" width="2" height="2"/><rect x="1" y="13" width="2" height="2"/><rect x="1" y="17" width="2" height="2"/></g></svg>
<svg style="position:absolute;left:1870px;top:75px;" width="20" height="20" viewBox="0 0 20 20"><rect x="1.5" y="2.5" width="17" height="16" fill="#fff" stroke="#333"/><rect x="1.5" y="2.5" width="17" height="3" fill="#2a5ab0"/><path d="M5 17l13-11v11z" fill="#7ad87a" stroke="#2a8a2a"/><path d="M1.5 9h17M1.5 13h17" stroke="#aaa" stroke-width="0.6"/></svg>
<svg style="position:absolute;left:1894px;top:83px;" width="8" height="5" viewBox="0 0 8 5"><path d="M0 0h8l-4 4.5z" fill="#222"/></svg>
<div class="t" style="left:1907px;top:78.0px;height:16px;line-height:16px;color:#555;font-size:13px">»</div>
<div style="left:83px;top:932px;width:151px;height:18px;background:#cce8ff"></div>
<div style="left:2px;top:121px;width:298px;height:869px;overflow:hidden">
<svg style="position:absolute;left:4px;top:1.5px;" width="16" height="16" viewBox="0 0 16 16"><rect x="0" y="3" width="16" height="11" fill="#1f3a8a"/><path d="M0 9h16M5 3v11" stroke="#fff" stroke-width="1.2"/><path d="M5 6l11 3" stroke="#fff" stroke-width="0.8"/></svg>
<div class="t" style="left:25px;top:3.0px;height:16px;line-height:16px;">RFEM</div>
<svg style="position:absolute;left:5px;top:24px;" width="11" height="11" viewBox="0 0 11 11"><path d="M1 3l4.5 4.5 4.5-4.5" fill="none" stroke="#333" stroke-width="1.3"/></svg>
<svg style="position:absolute;left:26px;top:19.5px;" width="16" height="16" viewBox="0 0 16 16"><path d="M4.5 1.5h6l3 3v11h-9z" fill="#fff" stroke="#555"/><path d="M0.5 9l5-4 5 3-5 4z" fill="#5a82c4" stroke="#2a4a80" stroke-width="0.6"/><path d="M2 9l4-3M3.5 10l4-3M5 11l4-3" stroke="#b8d0ee" stroke-width="0.7"/></svg>
<div class="t" style="left:45px;top:21.0px;height:16px;line-height:16px;font-weight:bold;font-size:11px">11617 fiber DM_0300.rf6</div>
<svg style="position:absolute;left:25px;top:42px;" width="11" height="11" viewBox="0 0 11 11"><path d="M1 3l4.5 4.5 4.5-4.5" fill="none" stroke="#333" stroke-width="1.3"/></svg>
<svg style="position:absolute;left:44px;top:37.5px;" width="16" height="16" viewBox="0 0 16 16"><path d="M1.5 3.5h5l1.5 1.5h6.5v2" fill="#f3e4a4" stroke="#b8a060"/><path d="M1.5 14.5v-10h5l1.5 1.5h6.5v8.5z" fill="#f6e7a8" stroke="#b8a060"/><path d="M1.5 14.5l2.5-6h11.5l-2.5 6z" fill="#f8eab0" stroke="#b8a060"/></svg>
<div class="t" style="left:65px;top:39.0px;height:16px;line-height:16px;">Basic Objects</div>
<svg style="position:absolute;left:47px;top:60px;" width="10" height="11" viewBox="0 0 10 11"><path d="M2.5 1l4.5 4.5-4.5 4.5" fill="none" stroke="#808080" stroke-width="1.3"/></svg>
<svg style="position:absolute;left:64px;top:55.5px;" width="16" height="16" viewBox="0 0 16 16"><circle cx="5" cy="5" r="3.8" fill="#8fa3e6"/><circle cx="11.3" cy="5" r="3.8" fill="#f0d23a"/><circle cx="5" cy="11.5" r="3.8" fill="#3db545"/><circle cx="11.3" cy="11.5" r="3.8" fill="#e23c3c"/><path d="M8.1 0v16M0 8.2h16" stroke="#fff" stroke-width="1.2"/></svg>
<div class="t" style="left:85px;top:57.0px;height:16px;line-height:16px;">Materials</div>
<svg style="position:absolute;left:47px;top:78px;" width="10" height="11" viewBox="0 0 10 11"><path d="M2.5 1l4.5 4.5-4.5 4.5" fill="none" stroke="#808080" stroke-width="1.3"/></svg>
<svg style="position:absolute;left:64px;top:73.5px;" width="16" height="16" viewBox="0 0 16 16"><path d="M6 3l9-2v10l-9 3z" fill="#7d9fd6"/><path d="M2 5h7v2h-2.5v5h2.5v2h-7v-2h2.5v-5h-2.5z" fill="#e03030"/></svg>
<div class="t" style="left:85px;top:75.0px;height:16px;line-height:16px;">Sections</div>
<svg style="position:absolute;left:47px;top:96px;" width="10" height="11" viewBox="0 0 10 11"><path d="M2.5 1l4.5 4.5-4.5 4.5" fill="none" stroke="#808080" stroke-width="1.3"/></svg>
<svg style="position:absolute;left:64px;top:91.5px;" width="16" height="16" viewBox="0 0 16 16"><path d="M1 6l4-2h10v5l-4 2h-10z" fill="#a9c8ee" stroke="#6e8fc0" stroke-width="0.8"/><path d="M11 11v-5l4-2" fill="none" stroke="#5d7fb5"/><path d="M11 6v5l4-2v-5z" fill="#6f95cf"/></svg>
<div class="t" style="left:85px;top:93.0px;height:16px;line-height:16px;">Thicknesses</div>
<svg style="position:absolute;left:47px;top:114px;" width="10" height="11" viewBox="0 0 10 11"><path d="M2.5 1l4.5 4.5-4.5 4.5" fill="none" stroke="#808080" stroke-width="1.3"/></svg>
<svg style="position:absolute;left:64px;top:109.5px;" width="16" height="16" viewBox="0 0 16 16"><circle cx="8" cy="9" r="1.6" fill="#e02020"/></svg>
<div class="t" style="left:85px;top:111.0px;height:16px;line-height:16px;">Nodes</div>
<svg style="position:absolute;left:47px;top:132px;" width="10" height="11" viewBox="0 0 10 11"><path d="M2.5 1l4.5 4.5-4.5 4.5" fill="none" stroke="#808080" stroke-width="1.3"/></svg>
<svg style="position:absolute;left:64px;top:127.5px;" width="16" height="16" viewBox="0 0 16 16"><path d="M2.5 14l11-12" stroke="#111" stroke-width="1.2"/><circle cx="2.5" cy="14" r="1.6" fill="#e02020"/><circle cx="13.5" cy="2.5" r="1.6" fill="#e02020"/></svg>
<div class="t" style="left:85px;top:129.0px;height:16px;line-height:16px;">Lines</div>
<svg style="position:absolute;left:47px;top:150px;" width="10" height="11" viewBox="0 0 10 11"><path d="M2.5 1l4.5 4.5-4.5 4.5" fill="none" stroke="#808080" stroke-width="1.3"/></svg>
<svg style="position:absolute;left:64px;top:145.5px;" width="16" height="16" viewBox="0 0 16 16"><path d="M2.5 14l11-12" stroke="#9ab0d8" stroke-width="3"/><circle cx="2.5" cy="14" r="1.6" fill="#e02020"/><circle cx="13.5" cy="2.5" r="1.6" fill="#e02020"/><path d="M12 11.5h3M13.5 11.5v4M12 15.5h3" stroke="#445" stroke-width="0.9"/></svg>
<div class="t" style="left:85px;top:147.0px;height:16px;line-height:16px;">Members</div>
<svg style="position:absolute;left:47px;top:168px;" width="10" height="11" viewBox="0 0 10 11"><path d="M2.5 1l4.5 4.5-4.5 4.5" fill="none" stroke="#808080" stroke-width="1.3"/></svg>
<svg style="position:absolute;left:64px;top:163.5px;" width="16" height="16" viewBox="0 0 16 16"><path d="M1 8.5l6-4.5 9 2.5-6 5z" fill="#8fb0e0" stroke="#5e82bf" stroke-width="0.8"/><path d="M1 8.5l9 3 6-5" fill="none" stroke="#3a5e98" stroke-width="1"/></svg>
<div class="t" style="left:85px;top:165.0px;height:16px;line-height:16px;">Surfaces</div>
<svg style="position:absolute;left:47px;top:186px;" width="10" height="11" viewBox="0 0 10 11"><path d="M2.5 1l4.5 4.5-4.5 4.5" fill="none" stroke="#808080" stroke-width="1.3"/></svg>
<svg style="position:absolute;left:64px;top:181.5px;" width="16" height="16" viewBox="0 0 16 16"><rect x="1.5" y="1.5" width="13" height="13" fill="#7f9fd2" stroke="#5a79ad"/><circle cx="8" cy="8" r="3.5" fill="#fff" stroke="#4f6fa5"/></svg>
<div class="t" style="left:85px;top:183.0px;height:16px;line-height:16px;">Openings</div>
<svg style="position:absolute;left:64px;top:199.5px;" width="16" height="16" viewBox="0 0 16 16"><path d="M2 4l4-2h9v9l-4 3h-9z" fill="#a8c6ee" stroke="#7b9bcc" stroke-width="0.7"/><path d="M11 14v-10l4-2v9z" fill="#6e94cf"/></svg>
<div class="t" style="left:85px;top:201.0px;height:16px;line-height:16px;">Solids</div>
<svg style="position:absolute;left:64px;top:217.5px;" width="16" height="16" viewBox="0 0 16 16"><path d="M2 12l9-10" stroke="#111" stroke-width="1"/><path d="M4 13l9-10" stroke="#111" stroke-width="1" stroke-dasharray="2 1"/><circle cx="2" cy="12" r="1.4" fill="#e02020"/><circle cx="11" cy="2" r="1.4" fill="#e02020"/><path d="M11.5 13.5h5M14 11v5" stroke="#000" stroke-width="1.4"/></svg>
<div class="t" style="left:85px;top:219.0px;height:16px;line-height:16px;">Line Sets</div>
<svg style="position:absolute;left:64px;top:235.5px;" width="16" height="16" viewBox="0 0 16 16"><path d="M2 12l9-10" stroke="#9ab0d8" stroke-width="2.5"/><path d="M4 13l9-10" stroke="#111" stroke-width="0.8" stroke-dasharray="2 1"/><circle cx="2" cy="12" r="1.4" fill="#e02020"/><circle cx="11" cy="2" r="1.4" fill="#e02020"/><path d="M11.5 13.5h5M14 11v5" stroke="#000" stroke-width="1.4"/></svg>
<div class="t" style="left:85px;top:237.0px;height:16px;line-height:16px;">Member Sets</div>
<svg style="position:absolute;left:64px;top:253.5px;" width="16" height="16" viewBox="0 0 16 16"><path d="M1 7l5-4h9l-5 5z" fill="#8fb0e0" stroke="#5e82bf" stroke-width="0.8"/><path d="M3 10l5 1 5-4" fill="none" stroke="#5e82bf" stroke-width="0.8"/><path d="M11.5 13.5h5M14 11v5" stroke="#000" stroke-width="1.4"/></svg>
<div class="t" style="left:85px;top:255.0px;height:16px;line-height:16px;">Surface Sets</div>
<svg style="position:absolute;left:64px;top:271.5px;" width="16" height="16" viewBox="0 0 16 16"><path d="M1 4l3-2h8v8l-3 3h-8z" fill="#a8c6ee" stroke="#7b9bcc" stroke-width="0.7"/><path d="M9 13v-9l3-2v8z" fill="#6e94cf"/><path d="M11.5 13.5h5M14 11v5" stroke="#000" stroke-width="1.4"/></svg>
<div class="t" style="left:85px;top:273.0px;height:16px;line-height:16px;">Solid Sets</div>
<svg style="position:absolute;left:27px;top:294px;" width="10" height="11" viewBox="0 0 10 11"><path d="M2.5 1l4.5 4.5-4.5 4.5" fill="none" stroke="#808080" stroke-width="1.3"/></svg>
<svg style="position:absolute;left:44px;top:289.5px;" width="16" height="16" viewBox="0 0 16 16"><path d="M1.5 14.5v-11h5l1.5 1.5h6.5v9.5z" fill="#f6e7a8" stroke="#b9a464"/><path d="M1.5 6.5h13" stroke="#e0cf8a"/></svg>
<div class="t" style="left:65px;top:291.0px;height:16px;line-height:16px;">Special Objects</div>
<svg style="position:absolute;left:27px;top:312px;" width="10" height="11" viewBox="0 0 10 11"><path d="M2.5 1l4.5 4.5-4.5 4.5" fill="none" stroke="#808080" stroke-width="1.3"/></svg>
<svg style="position:absolute;left:44px;top:307.5px;" width="16" height="16" viewBox="0 0 16 16"><path d="M1.5 14.5v-11h5l1.5 1.5h6.5v9.5z" fill="#f6e7a8" stroke="#b9a464"/><path d="M1.5 6.5h13" stroke="#e0cf8a"/></svg>
<div class="t" style="left:65px;top:309.0px;height:16px;line-height:16px;">Types for Nodes</div>
<svg style="position:absolute;left:27px;top:330px;" width="10" height="11" viewBox="0 0 10 11"><path d="M2.5 1l4.5 4.5-4.5 4.5" fill="none" stroke="#808080" stroke-width="1.3"/></svg>
<svg style="position:absolute;left:44px;top:325.5px;" width="16" height="16" viewBox="0 0 16 16"><path d="M1.5 14.5v-11h5l1.5 1.5h6.5v9.5z" fill="#f6e7a8" stroke="#b9a464"/><path d="M1.5 6.5h13" stroke="#e0cf8a"/></svg>
<div class="t" style="left:65px;top:327.0px;height:16px;line-height:16px;">Types for Lines</div>
<svg style="position:absolute;left:27px;top:348px;" width="10" height="11" viewBox="0 0 10 11"><path d="M2.5 1l4.5 4.5-4.5 4.5" fill="none" stroke="#808080" stroke-width="1.3"/></svg>
<svg style="position:absolute;left:44px;top:343.5px;" width="16" height="16" viewBox="0 0 16 16"><path d="M1.5 14.5v-11h5l1.5 1.5h6.5v9.5z" fill="#f6e7a8" stroke="#b9a464"/><path d="M1.5 6.5h13" stroke="#e0cf8a"/></svg>
<div class="t" style="left:65px;top:345.0px;height:16px;line-height:16px;">Types for Members</div>
<svg style="position:absolute;left:27px;top:366px;" width="10" height="11" viewBox="0 0 10 11"><path d="M2.5 1l4.5 4.5-4.5 4.5" fill="none" stroke="#808080" stroke-width="1.3"/></svg>
<svg style="position:absolute;left:44px;top:361.5px;" width="16" height="16" viewBox="0 0 16 16"><path d="M1.5 14.5v-11h5l1.5 1.5h6.5v9.5z" fill="#f6e7a8" stroke="#b9a464"/><path d="M1.5 6.5h13" stroke="#e0cf8a"/></svg>
<div class="t" style="left:65px;top:363.0px;height:16px;line-height:16px;">Types for Surfaces</div>
<svg style="position:absolute;left:27px;top:384px;" width="10" height="11" viewBox="0 0 10 11"><path d="M2.5 1l4.5 4.5-4.5 4.5" fill="none" stroke="#808080" stroke-width="1.3"/></svg>
<svg style="position:absolute;left:44px;top:379.5px;" width="16" height="16" viewBox="0 0 16 16"><path d="M1.5 14.5v-11h5l1.5 1.5h6.5v9.5z" fill="#f6e7a8" stroke="#b9a464"/><path d="M1.5 6.5h13" stroke="#e0cf8a"/></svg>
<div class="t" style="left:65px;top:381.0px;height:16px;line-height:16px;">Types for Solids</div>
<svg style="position:absolute;left:27px;top:402px;" width="10" height="11" viewBox="0 0 10 11"><path d="M2.5 1l4.5 4.5-4.5 4.5" fill="none" stroke="#808080" stroke-width="1.3"/></svg>
<svg style="position:absolute;left:44px;top:397.5px;" width="16" height="16" viewBox="0 0 16 16"><path d="M1.5 14.5v-11h5l1.5 1.5h6.5v9.5z" fill="#f6e7a8" stroke="#b9a464"/><path d="M1.5 6.5h13" stroke="#e0cf8a"/></svg>
<div class="t" style="left:65px;top:399.0px;height:16px;line-height:16px;">Types for Special Objects</div>
<svg style="position:absolute;left:27px;top:420px;" width="10" height="11" viewBox="0 0 10 11"><path d="M2.5 1l4.5 4.5-4.5 4.5" fill="none" stroke="#808080" stroke-width="1.3"/></svg>
<svg style="position:absolute;left:44px;top:415.5px;" width="16" height="16" viewBox="0 0 16 16"><path d="M1.5 14.5v-11h5l1.5 1.5h6.5v9.5z" fill="#f6e7a8" stroke="#b9a464"/><path d="M1.5 6.5h13" stroke="#e0cf8a"/></svg>
<div class="t" style="left:65px;top:417.0px;height:16px;line-height:16px;">Types for Concrete Design</div>
<svg style="position:absolute;left:27px;top:438px;" width="10" height="11" viewBox="0 0 10 11"><path d="M2.5 1l4.5 4.5-4.5 4.5" fill="none" stroke="#808080" stroke-width="1.3"/></svg>
<svg style="position:absolute;left:44px;top:433.5px;" width="16" height="16" viewBox="0 0 16 16"><path d="M1.5 14.5v-11h5l1.5 1.5h6.5v9.5z" fill="#f6e7a8" stroke="#b9a464"/><path d="M1.5 6.5h13" stroke="#e0cf8a"/></svg>
<div class="t" style="left:65px;top:435.0px;height:16px;line-height:16px;">Imperfections</div>
<svg style="position:absolute;left:25px;top:456px;" width="11" height="11" viewBox="0 0 11 11"><path d="M1 3l4.5 4.5 4.5-4.5" fill="none" stroke="#333" stroke-width="1.3"/></svg>
<svg style="position:absolute;left:44px;top:451.5px;" width="16" height="16" viewBox="0 0 16 16"><path d="M1.5 3.5h5l1.5 1.5h6.5v2" fill="#f3e4a4" stroke="#b8a060"/><path d="M1.5 14.5v-10h5l1.5 1.5h6.5v8.5z" fill="#f6e7a8" stroke="#b8a060"/><path d="M1.5 14.5l2.5-6h11.5l-2.5 6z" fill="#f8eab0" stroke="#b8a060"/></svg>
<div class="t" style="left:65px;top:453.0px;height:16px;line-height:16px;">Load Cases &amp; Combinations</div>
<svg style="position:absolute;left:47px;top:474px;" width="10" height="11" viewBox="0 0 10 11"><path d="M2.5 1l4.5 4.5-4.5 4.5" fill="none" stroke="#808080" stroke-width="1.3"/></svg>
<svg style="position:absolute;left:64px;top:469.5px;" width="16" height="16" viewBox="0 0 16 16"><path d="M8 1v9" stroke="#4a80d0" stroke-width="1.3"/><path d="M5.5 8l2.5 3 2.5-3z" fill="#4a80d0"/><path d="M0 14.5h16" stroke="#222" stroke-width="1.2"/></svg>
<div class="t" style="left:85px;top:471.0px;height:16px;line-height:16px;">Load Cases</div>
<svg style="position:absolute;left:47px;top:492px;" width="10" height="11" viewBox="0 0 10 11"><path d="M2.5 1l4.5 4.5-4.5 4.5" fill="none" stroke="#808080" stroke-width="1.3"/></svg>
<svg style="position:absolute;left:64px;top:487.5px;" width="16" height="16" viewBox="0 0 16 16"><rect x="1" y="1" width="5" height="3" fill="#4a90e0"/><rect x="1" y="11" width="5" height="3" fill="#30b040"/><path d="M6 2.5h4l2 3v4l-2 3h-4" fill="none" stroke="#222" stroke-width="1" stroke-dasharray="1.5 1"/><rect x="11" y="5.5" width="5" height="4" fill="#e020e0"/></svg>
<div class="t" style="left:85px;top:489.0px;height:16px;line-height:16px;">Design Situations</div>
<svg style="position:absolute;left:47px;top:510px;" width="10" height="11" viewBox="0 0 10 11"><path d="M2.5 1l4.5 4.5-4.5 4.5" fill="none" stroke="#808080" stroke-width="1.3"/></svg>
<svg style="position:absolute;left:64px;top:505.5px;" width="16" height="16" viewBox="0 0 16 16"><rect x="1.5" y="1.5" width="4" height="3" fill="none" stroke="#333" stroke-width="0.8"/><rect x="1.5" y="11" width="4" height="3" fill="none" stroke="#333" stroke-width="0.8"/><path d="M6 2.5h4l2 3v4l-2 3h-4" fill="none" stroke="#222" stroke-width="1" stroke-dasharray="1.5 1"/><rect x="11" y="5.5" width="5" height="4" fill="#30b040"/></svg>
<div class="t" style="left:85px;top:507.0px;height:16px;line-height:16px;">Load Combinations</div>
<svg style="position:absolute;left:47px;top:528px;" width="10" height="11" viewBox="0 0 10 11"><path d="M2.5 1l4.5 4.5-4.5 4.5" fill="none" stroke="#808080" stroke-width="1.3"/></svg>
<svg style="position:absolute;left:64px;top:523.5px;" width="16" height="16" viewBox="0 0 16 16"><rect x="1.5" y="1.5" width="4" height="3" fill="none" stroke="#333" stroke-width="0.8"/><rect x="1.5" y="11" width="4" height="3" fill="none" stroke="#333" stroke-width="0.8"/><path d="M6 2.5h4l2 3v4l-2 3h-4" fill="none" stroke="#222" stroke-width="1" stroke-dasharray="1.5 1"/><rect x="11" y="5.5" width="5" height="4" fill="#4070c0"/></svg>
<div class="t" style="left:85px;top:525.0px;height:16px;line-height:16px;">Result Combinations</div>
<svg style="position:absolute;left:47px;top:546px;" width="10" height="11" viewBox="0 0 10 11"><path d="M2.5 1l4.5 4.5-4.5 4.5" fill="none" stroke="#808080" stroke-width="1.3"/></svg>
<svg style="position:absolute;left:64px;top:541.5px;" width="16" height="16" viewBox="0 0 16 16"><path d="M0 7l16-2v3l-16 2z" fill="#2050a0"/><path d="M10 6l6-5v5z" fill="#e02020"/><circle cx="12" cy="12" r="3" fill="#5a8ae0"/><circle cx="12" cy="12" r="1.2" fill="#fff"/></svg>
<div class="t" style="left:85px;top:543.0px;height:16px;line-height:16px;">Static Analysis Settings</div>
<svg style="position:absolute;left:27px;top:564px;" width="10" height="11" viewBox="0 0 10 11"><path d="M2.5 1l4.5 4.5-4.5 4.5" fill="none" stroke="#808080" stroke-width="1.3"/></svg>
<svg style="position:absolute;left:44px;top:559.5px;" width="16" height="16" viewBox="0 0 16 16"><path d="M1.5 14.5v-11h5l1.5 1.5h6.5v9.5z" fill="#f6e7a8" stroke="#b9a464"/><path d="M1.5 6.5h13" stroke="#e0cf8a"/></svg>
<div class="t" style="left:65px;top:561.0px;height:16px;line-height:16px;">Load Wizards</div>
<svg style="position:absolute;left:25px;top:582px;" width="11" height="11" viewBox="0 0 11 11"><path d="M1 3l4.5 4.5 4.5-4.5" fill="none" stroke="#333" stroke-width="1.3"/></svg>
<svg style="position:absolute;left:44px;top:577.5px;" width="16" height="16" viewBox="0 0 16 16"><path d="M1.5 3.5h5l1.5 1.5h6.5v2" fill="#f3e4a4" stroke="#b8a060"/><path d="M1.5 14.5v-10h5l1.5 1.5h6.5v8.5z" fill="#f6e7a8" stroke="#b8a060"/><path d="M1.5 14.5l2.5-6h11.5l-2.5 6z" fill="#f8eab0" stroke="#b8a060"/></svg>
<div class="t" style="left:65px;top:579.0px;height:16px;line-height:16px;">Loads</div>
<svg style="position:absolute;left:47px;top:600px;" width="10" height="11" viewBox="0 0 10 11"><path d="M2.5 1l4.5 4.5-4.5 4.5" fill="none" stroke="#808080" stroke-width="1.3"/></svg>
<svg style="position:absolute;left:64px;top:595.5px;" width="16" height="16" viewBox="0 0 16 16"><path d="M1.5 14.5v-11h5l1.5 1.5h6.5v9.5z" fill="#f6e7a8" stroke="#b9a464"/><path d="M1.5 6.5h13" stroke="#e0cf8a"/></svg>
<div class="t" style="left:85px;top:597.0px;height:16px;line-height:16px;">LC1 - Self weight</div>
<svg style="position:absolute;left:47px;top:618px;" width="10" height="11" viewBox="0 0 10 11"><path d="M2.5 1l4.5 4.5-4.5 4.5" fill="none" stroke="#808080" stroke-width="1.3"/></svg>
<svg style="position:absolute;left:64px;top:613.5px;" width="16" height="16" viewBox="0 0 16 16"><path d="M1.5 14.5v-11h5l1.5 1.5h6.5v9.5z" fill="#f6e7a8" stroke="#b9a464"/><path d="M1.5 6.5h13" stroke="#e0cf8a"/></svg>
<div class="t" style="left:85px;top:615.0px;height:16px;line-height:16px;">LC2 - Live load</div>
<svg style="position:absolute;left:44px;top:631.5px;" width="16" height="16" viewBox="0 0 16 16"><path d="M1.5 1v14h14" fill="none" stroke="#333" stroke-width="1"/><path d="M3 13l4-6 2 3 5-8" fill="none" stroke="#8ab0e0" stroke-width="1"/></svg>
<div class="t" style="left:65px;top:633.0px;height:16px;line-height:16px;">Calculation Diagrams</div>
<svg style="position:absolute;left:27px;top:654px;" width="10" height="11" viewBox="0 0 10 11"><path d="M2.5 1l4.5 4.5-4.5 4.5" fill="none" stroke="#808080" stroke-width="1.3"/></svg>
<svg style="position:absolute;left:44px;top:649.5px;" width="16" height="16" viewBox="0 0 16 16"><path d="M1.5 14.5v-11h5l1.5 1.5h6.5v9.5z" fill="#f6e7a8" stroke="#b9a464"/><path d="M1.5 6.5h13" stroke="#e0cf8a"/></svg>
<div class="t" style="left:65px;top:651.0px;height:16px;line-height:16px;">Results</div>
<svg style="position:absolute;left:27px;top:672px;" width="10" height="11" viewBox="0 0 10 11"><path d="M2.5 1l4.5 4.5-4.5 4.5" fill="none" stroke="#808080" stroke-width="1.3"/></svg>
<svg style="position:absolute;left:44px;top:667.5px;" width="16" height="16" viewBox="0 0 16 16"><path d="M1.5 14.5v-11h5l1.5 1.5h6.5v9.5z" fill="#f6e7a8" stroke="#b9a464"/><path d="M1.5 6.5h13" stroke="#e0cf8a"/></svg>
<div class="t" style="left:65px;top:669.0px;height:16px;line-height:16px;">Guide Objects</div>
<svg style="position:absolute;left:25px;top:690px;" width="11" height="11" viewBox="0 0 11 11"><path d="M1 3l4.5 4.5 4.5-4.5" fill="none" stroke="#333" stroke-width="1.3"/></svg>
<svg style="position:absolute;left:44px;top:685.5px;" width="16" height="16" viewBox="0 0 16 16"><path d="M1.5 3.5h5l1.5 1.5h6.5v2" fill="#f3e4a4" stroke="#b8a060"/><path d="M1.5 14.5v-10h5l1.5 1.5h6.5v8.5z" fill="#f6e7a8" stroke="#b8a060"/><path d="M1.5 14.5l2.5-6h11.5l-2.5 6z" fill="#f8eab0" stroke="#b8a060"/></svg>
<div class="t" style="left:65px;top:687.0px;height:16px;line-height:16px;">Concrete Design</div>
<svg style="position:absolute;left:47px;top:708px;" width="10" height="11" viewBox="0 0 10 11"><path d="M2.5 1l4.5 4.5-4.5 4.5" fill="none" stroke="#808080" stroke-width="1.3"/></svg>
<svg style="position:absolute;left:64px;top:703.5px;" width="16" height="16" viewBox="0 0 16 16"><rect x="1" y="1" width="5" height="3" fill="#4a90e0"/><rect x="1" y="11" width="5" height="3" fill="#30b040"/><path d="M6 2.5h4l2 3v4l-2 3h-4" fill="none" stroke="#222" stroke-width="1" stroke-dasharray="1.5 1"/><rect x="11" y="5.5" width="5" height="4" fill="#e020e0"/></svg>
<div class="t" style="left:85px;top:705.0px;height:16px;line-height:16px;">Design Situations</div>
<svg style="position:absolute;left:47px;top:726px;" width="10" height="11" viewBox="0 0 10 11"><path d="M2.5 1l4.5 4.5-4.5 4.5" fill="none" stroke="#808080" stroke-width="1.3"/></svg>
<svg style="position:absolute;left:64px;top:721.5px;" width="16" height="16" viewBox="0 0 16 16"><path d="M1 1v14h15z" fill="#f2d030" stroke="#c9a000" stroke-width="0.8"/><path d="M4 8v4h4z" fill="#fff"/></svg>
<div class="t" style="left:85px;top:723.0px;height:16px;line-height:16px;">Objects to Design</div>
<svg style="position:absolute;left:47px;top:744px;" width="10" height="11" viewBox="0 0 10 11"><path d="M2.5 1l4.5 4.5-4.5 4.5" fill="none" stroke="#808080" stroke-width="1.3"/></svg>
<svg style="position:absolute;left:64px;top:739.5px;" width="16" height="16" viewBox="0 0 16 16"><circle cx="5" cy="5" r="3.8" fill="#8fa3e6"/><circle cx="11.3" cy="5" r="3.8" fill="#f0d23a"/><circle cx="5" cy="11.5" r="3.8" fill="#3db545"/><circle cx="11.3" cy="11.5" r="3.8" fill="#e23c3c"/><path d="M8.1 0v16M0 8.2h16" stroke="#fff" stroke-width="1.2"/></svg>
<div class="t" style="left:85px;top:741.0px;height:16px;line-height:16px;">Materials</div>
<svg style="position:absolute;left:47px;top:762px;" width="10" height="11" viewBox="0 0 10 11"><path d="M2.5 1l4.5 4.5-4.5 4.5" fill="none" stroke="#808080" stroke-width="1.3"/></svg>
<svg style="position:absolute;left:64px;top:757.5px;" width="16" height="16" viewBox="0 0 16 16"><path d="M6 3l9-2v10l-9 3z" fill="#7d9fd6"/><path d="M2 5h7v2h-2.5v5h2.5v2h-7v-2h2.5v-5h-2.5z" fill="#e03030"/></svg>
<div class="t" style="left:85px;top:759.0px;height:16px;line-height:16px;">Sections</div>
<svg style="position:absolute;left:47px;top:780px;" width="10" height="11" viewBox="0 0 10 11"><path d="M2.5 1l4.5 4.5-4.5 4.5" fill="none" stroke="#808080" stroke-width="1.3"/></svg>
<svg style="position:absolute;left:64px;top:775.5px;" width="16" height="16" viewBox="0 0 16 16"><path d="M1 6l4-2h10v5l-4 2h-10z" fill="#a9c8ee" stroke="#6e8fc0" stroke-width="0.8"/><path d="M11 11v-5l4-2" fill="none" stroke="#5d7fb5"/><path d="M11 6v5l4-2v-5z" fill="#6f95cf"/></svg>
<div class="t" style="left:85px;top:777.0px;height:16px;line-height:16px;">Thicknesses</div>
<svg style="position:absolute;left:45px;top:798px;" width="11" height="11" viewBox="0 0 11 11"><path d="M1 3l4.5 4.5 4.5-4.5" fill="none" stroke="#333" stroke-width="1.3"/></svg>
<svg style="position:absolute;left:64px;top:793.5px;" width="16" height="16" viewBox="0 0 16 16"><path d="M1 6l4-4h5l-4 4z" fill="#bbb"/><path d="M1 6h5v9h-5z" fill="#9a9a9a"/><path d="M6 6l4-4v9l-4 4z" fill="#7a7a7a"/><path d="M10 3c3 1 5 3 5 6" fill="none" stroke="#999" stroke-width="2"/><circle cx="12" cy="12" r="3.2" fill="#4a7ee0"/><circle cx="12" cy="12" r="1.2" fill="#fff"/></svg>
<div class="t" style="left:85px;top:795.0px;height:16px;line-height:16px;">Ultimate Configurations</div>
<svg style="position:absolute;left:82px;top:811.5px;" width="16" height="16" viewBox="0 0 16 16"><rect x="2" y="2" width="12" height="12" fill="#87cdea"/></svg>
<div class="t" style="left:100px;top:813.0px;height:16px;line-height:16px;">1 - Default</div>
<svg style="position:absolute;left:45px;top:834px;" width="11" height="11" viewBox="0 0 11 11"><path d="M1 3l4.5 4.5 4.5-4.5" fill="none" stroke="#333" stroke-width="1.3"/></svg>
<svg style="position:absolute;left:64px;top:829.5px;" width="16" height="16" viewBox="0 0 16 16"><path d="M1 6l4-4h5l-4 4z" fill="#bbb"/><path d="M1 6h5v9h-5z" fill="#9a9a9a"/><path d="M6 6l4-4v9l-4 4z" fill="#7a7a7a"/><path d="M10 3c3 1 5 3 5 6" fill="none" stroke="#999" stroke-width="2"/><circle cx="12" cy="12" r="3.2" fill="#4a7ee0"/><circle cx="12" cy="12" r="1.2" fill="#fff"/></svg>
<div class="t" style="left:85px;top:831.0px;height:16px;line-height:16px;">Serviceability Configurations</div>
<svg style="position:absolute;left:82px;top:847.5px;" width="16" height="16" viewBox="0 0 16 16"><rect x="2" y="2" width="12" height="12" fill="#ccfaff"/></svg>
<div class="t" style="left:100px;top:849.0px;height:16px;line-height:16px;">1 - Default</div>
<svg style="position:absolute;left:27px;top:870px;" width="10" height="11" viewBox="0 0 10 11"><path d="M2.5 1l4.5 4.5-4.5 4.5" fill="none" stroke="#808080" stroke-width="1.3"/></svg>
<svg style="position:absolute;left:44px;top:865.5px;" width="16" height="16" viewBox="0 0 16 16"><path d="M1.5 14.5v-11h5l1.5 1.5h6.5v9.5z" fill="#f6e7a8" stroke="#b9a464"/><path d="M1.5 6.5h13" stroke="#e0cf8a"/></svg>
</div>
<div style="left:300px;top:121px;width:16px;height:160px;background:#f0f0f0"></div>
<svg style="position:absolute;left:303px;top:127px;" width="10" height="7" viewBox="0 0 10 7"><path d="M1 5.5l4-4 4 4" fill="none" stroke="#444" stroke-width="1.8"/></svg>
<div style="left:300px;top:139px;width:15px;height:142px;background:#cbcbcb"></div>
<svg style="position:absolute;left:281px;top:105px;" width="8" height="9" viewBox="0 0 8 9"><rect x="2.5" y="0.5" width="5" height="5" fill="none" stroke="#222" stroke-width="1.1"/><rect x="0.5" y="3.5" width="5" height="5" fill="#d9e4f1" stroke="#222" stroke-width="1.1"/></svg>
<svg style="position:absolute;left:302px;top:105px;" width="9" height="9" viewBox="0 0 9 9"><path d="M1 1l7 7M8 1l-7 7" stroke="#222" stroke-width="1.7"/></svg>
<div style="left:1px;top:990px;width:317px;height:27px;background:#f2f2f2;border:1px solid #c9c9d4;border-top:none"></div>
<div style="left:2px;top:990px;width:40px;height:24px;background:#fff"></div>
<div style="left:41px;top:990px;width:37px;height:23px;background:#e8e8e8;border:1px solid #c8c8d0;border-top:none"></div>
<div style="left:79px;top:990px;width:39px;height:23px;background:#e8e8e8;border:1px solid #c8c8d0;border-top:none"></div>
<div style="left:42px;top:990px;width:276px;height:1px;background:#c9c9d4"></div>
<svg style="position:absolute;left:13px;top:994px;" width="16" height="17" viewBox="0 0 16 17"><rect x="3" y="1" width="12" height="9" fill="#fff" stroke="#3a6ad0"/><rect x="3" y="1" width="12" height="2" fill="#3a6ad0"/><path d="M0 6h6l1 1.5h5v7h-12z" fill="#f0c020" stroke="#b08000" stroke-width="0.7"/><path d="M5 10l4 1 4-3 1 5" fill="none" stroke="#e02020" stroke-width="1"/><path d="M6 11l7-2" stroke="#4a8ae0" stroke-width="2"/></svg>
<svg style="position:absolute;left:52px;top:995px;" width="16" height="12" viewBox="0 0 16 12"><ellipse cx="8" cy="6" rx="7" ry="4.5" fill="#fff" stroke="#2a3a80" stroke-width="1.3"/><circle cx="8" cy="6" r="2.8" fill="#3050b0"/><circle cx="8" cy="6" r="1" fill="#112"/></svg>
<svg style="position:absolute;left:90px;top:996px;" width="16" height="11" viewBox="0 0 16 11"><rect x="0" y="1" width="11" height="9" rx="1.5" fill="#555"/><path d="M11 5l5-3.5v8z" fill="#555"/></svg>
<svg style="position:absolute;left:322px;top:99px" width="1598" height="710" viewBox="322 99 1598 710"><g fill="#333"><rect x="447" y="110" width="1.4" height="1.4"/><rect x="400" y="131" width="1.4" height="1.4"/><rect x="352" y="152" width="1.4" height="1.4"/><rect x="576" y="102" width="1.4" height="1.4"/><rect x="529" y="123" width="1.4" height="1.4"/><rect x="482" y="144" width="1.4" height="1.4"/><rect x="435" y="165" width="1.4" height="1.4"/><rect x="387" y="186" width="1.4" height="1.4"/><rect x="340" y="207" width="1.4" height="1.4"/><rect x="658" y="114" width="1.4" height="1.4"/><rect x="611" y="135" width="1.4" height="1.4"/><rect x="564" y="156" width="1.4" height="1.4"/><rect x="517" y="177" width="1.4" height="1.4"/><rect x="470" y="198" width="1.4" height="1.4"/><rect x="422" y="220" width="1.4" height="1.4"/><rect x="375" y="241" width="1.4" height="1.4"/><rect x="328" y="262" width="1.4" height="1.4"/><rect x="788" y="106" width="1.4" height="1.4"/><rect x="741" y="127" width="1.4" height="1.4"/><rect x="693" y="148" width="1.4" height="1.4"/><rect x="646" y="169" width="1.4" height="1.4"/><rect x="599" y="190" width="1.4" height="1.4"/><rect x="552" y="211" width="1.4" height="1.4"/><rect x="505" y="232" width="1.4" height="1.4"/><rect x="457" y="253" width="1.4" height="1.4"/><rect x="410" y="274" width="1.4" height="1.4"/><rect x="363" y="296" width="1.4" height="1.4"/><rect x="870" y="118" width="1.4" height="1.4"/><rect x="823" y="139" width="1.4" height="1.4"/><rect x="776" y="160" width="1.4" height="1.4"/><rect x="728" y="182" width="1.4" height="1.4"/><rect x="681" y="203" width="1.4" height="1.4"/><rect x="634" y="224" width="1.4" height="1.4"/><rect x="587" y="245" width="1.4" height="1.4"/><rect x="540" y="266" width="1.4" height="1.4"/><rect x="492" y="287" width="1.4" height="1.4"/><rect x="445" y="308" width="1.4" height="1.4"/><rect x="398" y="329" width="1.4" height="1.4"/><rect x="351" y="350" width="1.4" height="1.4"/><rect x="999" y="110" width="1.4" height="1.4"/><rect x="952" y="131" width="1.4" height="1.4"/><rect x="905" y="152" width="1.4" height="1.4"/><rect x="858" y="173" width="1.4" height="1.4"/><rect x="811" y="194" width="1.4" height="1.4"/><rect x="763" y="215" width="1.4" height="1.4"/><rect x="716" y="236" width="1.4" height="1.4"/><rect x="669" y="257" width="1.4" height="1.4"/><rect x="622" y="278" width="1.4" height="1.4"/><rect x="575" y="300" width="1.4" height="1.4"/><rect x="527" y="321" width="1.4" height="1.4"/><rect x="480" y="342" width="1.4" height="1.4"/><rect x="433" y="363" width="1.4" height="1.4"/><rect x="386" y="384" width="1.4" height="1.4"/><rect x="339" y="405" width="1.4" height="1.4"/><rect x="1129" y="101" width="1.4" height="1.4"/><rect x="1082" y="122" width="1.4" height="1.4"/><rect x="1034" y="143" width="1.4" height="1.4"/><rect x="987" y="164" width="1.4" height="1.4"/><rect x="940" y="186" width="1.4" height="1.4"/><rect x="893" y="207" width="1.4" height="1.4"/><rect x="846" y="228" width="1.4" height="1.4"/><rect x="798" y="249" width="1.4" height="1.4"/><rect x="751" y="270" width="1.4" height="1.4"/><rect x="704" y="291" width="1.4" height="1.4"/><rect x="657" y="312" width="1.4" height="1.4"/><rect x="610" y="333" width="1.4" height="1.4"/><rect x="562" y="354" width="1.4" height="1.4"/><rect x="515" y="376" width="1.4" height="1.4"/><rect x="468" y="397" width="1.4" height="1.4"/><rect x="421" y="418" width="1.4" height="1.4"/><rect x="374" y="439" width="1.4" height="1.4"/><rect x="326" y="460" width="1.4" height="1.4"/><rect x="1211" y="114" width="1.4" height="1.4"/><rect x="1164" y="135" width="1.4" height="1.4"/><rect x="1117" y="156" width="1.4" height="1.4"/><rect x="1069" y="177" width="1.4" height="1.4"/><rect x="1022" y="198" width="1.4" height="1.4"/><rect x="975" y="219" width="1.4" height="1.4"/><rect x="928" y="240" width="1.4" height="1.4"/><rect x="881" y="262" width="1.4" height="1.4"/><rect x="833" y="283" width="1.4" height="1.4"/><rect x="786" y="304" width="1.4" height="1.4"/><rect x="739" y="325" width="1.4" height="1.4"/><rect x="692" y="346" width="1.4" height="1.4"/><rect x="645" y="367" width="1.4" height="1.4"/><rect x="597" y="388" width="1.4" height="1.4"/><rect x="550" y="409" width="1.4" height="1.4"/><rect x="503" y="430" width="1.4" height="1.4"/><rect x="456" y="451" width="1.4" height="1.4"/><rect x="409" y="472" width="1.4" height="1.4"/><rect x="361" y="494" width="1.4" height="1.4"/><rect x="1340" y="105" width="1.4" height="1.4"/><rect x="1293" y="126" width="1.4" height="1.4"/><rect x="1246" y="148" width="1.4" height="1.4"/><rect x="1199" y="169" width="1.4" height="1.4"/><rect x="1152" y="190" width="1.4" height="1.4"/><rect x="1104" y="211" width="1.4" height="1.4"/><rect x="1057" y="232" width="1.4" height="1.4"/><rect x="1010" y="253" width="1.4" height="1.4"/><rect x="963" y="274" width="1.4" height="1.4"/><rect x="916" y="295" width="1.4" height="1.4"/><rect x="868" y="316" width="1.4" height="1.4"/><rect x="821" y="337" width="1.4" height="1.4"/><rect x="774" y="358" width="1.4" height="1.4"/><rect x="727" y="380" width="1.4" height="1.4"/><rect x="680" y="401" width="1.4" height="1.4"/><rect x="632" y="422" width="1.4" height="1.4"/><rect x="585" y="443" width="1.4" height="1.4"/><rect x="538" y="464" width="1.4" height="1.4"/><rect x="491" y="485" width="1.4" height="1.4"/><rect x="444" y="506" width="1.4" height="1.4"/><rect x="396" y="527" width="1.4" height="1.4"/><rect x="349" y="548" width="1.4" height="1.4"/><rect x="1423" y="118" width="1.4" height="1.4"/><rect x="1375" y="139" width="1.4" height="1.4"/><rect x="1328" y="160" width="1.4" height="1.4"/><rect x="1281" y="181" width="1.4" height="1.4"/><rect x="1234" y="202" width="1.4" height="1.4"/><rect x="1187" y="223" width="1.4" height="1.4"/><rect x="1139" y="244" width="1.4" height="1.4"/><rect x="1092" y="266" width="1.4" height="1.4"/><rect x="1045" y="287" width="1.4" height="1.4"/><rect x="998" y="308" width="1.4" height="1.4"/><rect x="951" y="329" width="1.4" height="1.4"/><rect x="903" y="350" width="1.4" height="1.4"/><rect x="856" y="371" width="1.4" height="1.4"/><rect x="809" y="392" width="1.4" height="1.4"/><rect x="762" y="413" width="1.4" height="1.4"/><rect x="715" y="434" width="1.4" height="1.4"/><rect x="667" y="456" width="1.4" height="1.4"/><rect x="620" y="477" width="1.4" height="1.4"/><rect x="573" y="498" width="1.4" height="1.4"/><rect x="526" y="519" width="1.4" height="1.4"/><rect x="479" y="540" width="1.4" height="1.4"/><rect x="431" y="561" width="1.4" height="1.4"/><rect x="384" y="582" width="1.4" height="1.4"/><rect x="337" y="603" width="1.4" height="1.4"/><rect x="1552" y="109" width="1.4" height="1.4"/><rect x="1505" y="130" width="1.4" height="1.4"/><rect x="1458" y="152" width="1.4" height="1.4"/><rect x="1410" y="173" width="1.4" height="1.4"/><rect x="1363" y="194" width="1.4" height="1.4"/><rect x="1316" y="215" width="1.4" height="1.4"/><rect x="1269" y="236" width="1.4" height="1.4"/><rect x="1222" y="257" width="1.4" height="1.4"/><rect x="1174" y="278" width="1.4" height="1.4"/><rect x="1127" y="299" width="1.4" height="1.4"/><rect x="1080" y="320" width="1.4" height="1.4"/><rect x="1033" y="342" width="1.4" height="1.4"/><rect x="986" y="363" width="1.4" height="1.4"/><rect x="938" y="384" width="1.4" height="1.4"/><rect x="891" y="405" width="1.4" height="1.4"/><rect x="844" y="426" width="1.4" height="1.4"/><rect x="797" y="447" width="1.4" height="1.4"/><rect x="750" y="468" width="1.4" height="1.4"/><rect x="702" y="489" width="1.4" height="1.4"/><rect x="655" y="510" width="1.4" height="1.4"/><rect x="608" y="531" width="1.4" height="1.4"/><rect x="561" y="552" width="1.4" height="1.4"/><rect x="514" y="574" width="1.4" height="1.4"/><rect x="466" y="595" width="1.4" height="1.4"/><rect x="419" y="616" width="1.4" height="1.4"/><rect x="372" y="637" width="1.4" height="1.4"/><rect x="325" y="658" width="1.4" height="1.4"/><rect x="1681" y="101" width="1.4" height="1.4"/><rect x="1634" y="122" width="1.4" height="1.4"/><rect x="1587" y="143" width="1.4" height="1.4"/><rect x="1540" y="164" width="1.4" height="1.4"/><rect x="1493" y="185" width="1.4" height="1.4"/><rect x="1445" y="206" width="1.4" height="1.4"/><rect x="1398" y="228" width="1.4" height="1.4"/><rect x="1351" y="249" width="1.4" height="1.4"/><rect x="1304" y="270" width="1.4" height="1.4"/><rect x="1257" y="291" width="1.4" height="1.4"/><rect x="1209" y="312" width="1.4" height="1.4"/><rect x="1162" y="333" width="1.4" height="1.4"/><rect x="1115" y="354" width="1.4" height="1.4"/><rect x="1068" y="375" width="1.4" height="1.4"/><rect x="1021" y="396" width="1.4" height="1.4"/><rect x="973" y="417" width="1.4" height="1.4"/><rect x="926" y="438" width="1.4" height="1.4"/><rect x="879" y="460" width="1.4" height="1.4"/><rect x="832" y="481" width="1.4" height="1.4"/><rect x="785" y="502" width="1.4" height="1.4"/><rect x="737" y="523" width="1.4" height="1.4"/><rect x="690" y="544" width="1.4" height="1.4"/><rect x="643" y="565" width="1.4" height="1.4"/><rect x="596" y="586" width="1.4" height="1.4"/><rect x="549" y="607" width="1.4" height="1.4"/><rect x="501" y="628" width="1.4" height="1.4"/><rect x="454" y="650" width="1.4" height="1.4"/><rect x="407" y="671" width="1.4" height="1.4"/><rect x="360" y="692" width="1.4" height="1.4"/><rect x="1764" y="113" width="1.4" height="1.4"/><rect x="1716" y="135" width="1.4" height="1.4"/><rect x="1669" y="156" width="1.4" height="1.4"/><rect x="1622" y="177" width="1.4" height="1.4"/><rect x="1575" y="198" width="1.4" height="1.4"/><rect x="1528" y="219" width="1.4" height="1.4"/><rect x="1480" y="240" width="1.4" height="1.4"/><rect x="1433" y="261" width="1.4" height="1.4"/><rect x="1386" y="282" width="1.4" height="1.4"/><rect x="1339" y="303" width="1.4" height="1.4"/><rect x="1292" y="324" width="1.4" height="1.4"/><rect x="1244" y="346" width="1.4" height="1.4"/><rect x="1197" y="367" width="1.4" height="1.4"/><rect x="1150" y="388" width="1.4" height="1.4"/><rect x="1103" y="409" width="1.4" height="1.4"/><rect x="1056" y="430" width="1.4" height="1.4"/><rect x="1008" y="451" width="1.4" height="1.4"/><rect x="961" y="472" width="1.4" height="1.4"/><rect x="914" y="493" width="1.4" height="1.4"/><rect x="867" y="514" width="1.4" height="1.4"/><rect x="820" y="536" width="1.4" height="1.4"/><rect x="772" y="557" width="1.4" height="1.4"/><rect x="725" y="578" width="1.4" height="1.4"/><rect x="678" y="599" width="1.4" height="1.4"/><rect x="631" y="620" width="1.4" height="1.4"/><rect x="584" y="641" width="1.4" height="1.4"/><rect x="536" y="662" width="1.4" height="1.4"/><rect x="489" y="683" width="1.4" height="1.4"/><rect x="442" y="704" width="1.4" height="1.4"/><rect x="395" y="725" width="1.4" height="1.4"/><rect x="348" y="746" width="1.4" height="1.4"/><rect x="1893" y="105" width="1.4" height="1.4"/><rect x="1846" y="126" width="1.4" height="1.4"/><rect x="1799" y="147" width="1.4" height="1.4"/><rect x="1751" y="168" width="1.4" height="1.4"/><rect x="1704" y="189" width="1.4" height="1.4"/><rect x="1657" y="210" width="1.4" height="1.4"/><rect x="1610" y="232" width="1.4" height="1.4"/><rect x="1563" y="253" width="1.4" height="1.4"/><rect x="1515" y="274" width="1.4" height="1.4"/><rect x="1468" y="295" width="1.4" height="1.4"/><rect x="1421" y="316" width="1.4" height="1.4"/><rect x="1374" y="337" width="1.4" height="1.4"/><rect x="1327" y="358" width="1.4" height="1.4"/><rect x="1279" y="379" width="1.4" height="1.4"/><rect x="1232" y="400" width="1.4" height="1.4"/><rect x="1185" y="422" width="1.4" height="1.4"/><rect x="1138" y="443" width="1.4" height="1.4"/><rect x="1091" y="464" width="1.4" height="1.4"/><rect x="1043" y="485" width="1.4" height="1.4"/><rect x="996" y="506" width="1.4" height="1.4"/><rect x="949" y="527" width="1.4" height="1.4"/><rect x="902" y="548" width="1.4" height="1.4"/><rect x="855" y="569" width="1.4" height="1.4"/><rect x="807" y="590" width="1.4" height="1.4"/><rect x="760" y="611" width="1.4" height="1.4"/><rect x="713" y="632" width="1.4" height="1.4"/><rect x="666" y="654" width="1.4" height="1.4"/><rect x="619" y="675" width="1.4" height="1.4"/><rect x="571" y="696" width="1.4" height="1.4"/><rect x="524" y="717" width="1.4" height="1.4"/><rect x="477" y="738" width="1.4" height="1.4"/><rect x="430" y="759" width="1.4" height="1.4"/><rect x="383" y="780" width="1.4" height="1.4"/><rect x="335" y="801" width="1.4" height="1.4"/><rect x="1881" y="160" width="1.4" height="1.4"/><rect x="1834" y="181" width="1.4" height="1.4"/><rect x="1786" y="202" width="1.4" height="1.4"/><rect x="1739" y="223" width="1.4" height="1.4"/><rect x="1692" y="244" width="1.4" height="1.4"/><rect x="1645" y="265" width="1.4" height="1.4"/><rect x="1598" y="286" width="1.4" height="1.4"/><rect x="1550" y="308" width="1.4" height="1.4"/><rect x="1503" y="329" width="1.4" height="1.4"/><rect x="1456" y="350" width="1.4" height="1.4"/><rect x="1409" y="371" width="1.4" height="1.4"/><rect x="1362" y="392" width="1.4" height="1.4"/><rect x="1314" y="413" width="1.4" height="1.4"/><rect x="1267" y="434" width="1.4" height="1.4"/><rect x="1220" y="455" width="1.4" height="1.4"/><rect x="1173" y="476" width="1.4" height="1.4"/><rect x="1126" y="497" width="1.4" height="1.4"/><rect x="1078" y="518" width="1.4" height="1.4"/><rect x="1031" y="540" width="1.4" height="1.4"/><rect x="984" y="561" width="1.4" height="1.4"/><rect x="937" y="582" width="1.4" height="1.4"/><rect x="890" y="603" width="1.4" height="1.4"/><rect x="842" y="624" width="1.4" height="1.4"/><rect x="795" y="645" width="1.4" height="1.4"/><rect x="748" y="666" width="1.4" height="1.4"/><rect x="701" y="687" width="1.4" height="1.4"/><rect x="654" y="708" width="1.4" height="1.4"/><rect x="606" y="730" width="1.4" height="1.4"/><rect x="559" y="751" width="1.4" height="1.4"/><rect x="512" y="772" width="1.4" height="1.4"/><rect x="465" y="793" width="1.4" height="1.4"/><rect x="1916" y="194" width="1.4" height="1.4"/><rect x="1869" y="215" width="1.4" height="1.4"/><rect x="1821" y="236" width="1.4" height="1.4"/><rect x="1774" y="257" width="1.4" height="1.4"/><rect x="1727" y="278" width="1.4" height="1.4"/><rect x="1680" y="299" width="1.4" height="1.4"/><rect x="1633" y="320" width="1.4" height="1.4"/><rect x="1585" y="341" width="1.4" height="1.4"/><rect x="1538" y="362" width="1.4" height="1.4"/><rect x="1491" y="383" width="1.4" height="1.4"/><rect x="1444" y="404" width="1.4" height="1.4"/><rect x="1397" y="426" width="1.4" height="1.4"/><rect x="1349" y="447" width="1.4" height="1.4"/><rect x="1302" y="468" width="1.4" height="1.4"/><rect x="1255" y="489" width="1.4" height="1.4"/><rect x="1208" y="510" width="1.4" height="1.4"/><rect x="1161" y="531" width="1.4" height="1.4"/><rect x="1113" y="552" width="1.4" height="1.4"/><rect x="1066" y="573" width="1.4" height="1.4"/><rect x="1019" y="594" width="1.4" height="1.4"/><rect x="972" y="616" width="1.4" height="1.4"/><rect x="925" y="637" width="1.4" height="1.4"/><rect x="877" y="658" width="1.4" height="1.4"/><rect x="830" y="679" width="1.4" height="1.4"/><rect x="783" y="700" width="1.4" height="1.4"/><rect x="736" y="721" width="1.4" height="1.4"/><rect x="689" y="742" width="1.4" height="1.4"/><rect x="641" y="763" width="1.4" height="1.4"/><rect x="594" y="784" width="1.4" height="1.4"/><rect x="547" y="805" width="1.4" height="1.4"/><rect x="1904" y="248" width="1.4" height="1.4"/><rect x="1856" y="269" width="1.4" height="1.4"/><rect x="1809" y="290" width="1.4" height="1.4"/><rect x="1762" y="312" width="1.4" height="1.4"/><rect x="1715" y="333" width="1.4" height="1.4"/><rect x="1668" y="354" width="1.4" height="1.4"/><rect x="1620" y="375" width="1.4" height="1.4"/><rect x="1573" y="396" width="1.4" height="1.4"/><rect x="1526" y="417" width="1.4" height="1.4"/><rect x="1479" y="438" width="1.4" height="1.4"/><rect x="1432" y="459" width="1.4" height="1.4"/><rect x="1384" y="480" width="1.4" height="1.4"/><rect x="1337" y="502" width="1.4" height="1.4"/><rect x="1290" y="523" width="1.4" height="1.4"/><rect x="1243" y="544" width="1.4" height="1.4"/><rect x="1196" y="565" width="1.4" height="1.4"/><rect x="1148" y="586" width="1.4" height="1.4"/><rect x="1101" y="607" width="1.4" height="1.4"/><rect x="1054" y="628" width="1.4" height="1.4"/><rect x="1007" y="649" width="1.4" height="1.4"/><rect x="960" y="670" width="1.4" height="1.4"/><rect x="912" y="691" width="1.4" height="1.4"/><rect x="865" y="712" width="1.4" height="1.4"/><rect x="818" y="734" width="1.4" height="1.4"/><rect x="771" y="755" width="1.4" height="1.4"/><rect x="724" y="776" width="1.4" height="1.4"/><rect x="676" y="797" width="1.4" height="1.4"/><rect x="1891" y="303" width="1.4" height="1.4"/><rect x="1844" y="324" width="1.4" height="1.4"/><rect x="1797" y="345" width="1.4" height="1.4"/><rect x="1750" y="366" width="1.4" height="1.4"/><rect x="1703" y="388" width="1.4" height="1.4"/><rect x="1655" y="409" width="1.4" height="1.4"/><rect x="1608" y="430" width="1.4" height="1.4"/><rect x="1561" y="451" width="1.4" height="1.4"/><rect x="1514" y="472" width="1.4" height="1.4"/><rect x="1467" y="493" width="1.4" height="1.4"/><rect x="1419" y="514" width="1.4" height="1.4"/><rect x="1372" y="535" width="1.4" height="1.4"/><rect x="1325" y="556" width="1.4" height="1.4"/><rect x="1278" y="577" width="1.4" height="1.4"/><rect x="1231" y="598" width="1.4" height="1.4"/><rect x="1183" y="620" width="1.4" height="1.4"/><rect x="1136" y="641" width="1.4" height="1.4"/><rect x="1089" y="662" width="1.4" height="1.4"/><rect x="1042" y="683" width="1.4" height="1.4"/><rect x="995" y="704" width="1.4" height="1.4"/><rect x="947" y="725" width="1.4" height="1.4"/><rect x="900" y="746" width="1.4" height="1.4"/><rect x="853" y="767" width="1.4" height="1.4"/><rect x="806" y="788" width="1.4" height="1.4"/><rect x="1879" y="358" width="1.4" height="1.4"/><rect x="1832" y="379" width="1.4" height="1.4"/><rect x="1785" y="400" width="1.4" height="1.4"/><rect x="1738" y="421" width="1.4" height="1.4"/><rect x="1690" y="442" width="1.4" height="1.4"/><rect x="1643" y="463" width="1.4" height="1.4"/><rect x="1596" y="484" width="1.4" height="1.4"/><rect x="1549" y="506" width="1.4" height="1.4"/><rect x="1502" y="527" width="1.4" height="1.4"/><rect x="1454" y="548" width="1.4" height="1.4"/><rect x="1407" y="569" width="1.4" height="1.4"/><rect x="1360" y="590" width="1.4" height="1.4"/><rect x="1313" y="611" width="1.4" height="1.4"/><rect x="1266" y="632" width="1.4" height="1.4"/><rect x="1218" y="653" width="1.4" height="1.4"/><rect x="1171" y="674" width="1.4" height="1.4"/><rect x="1124" y="696" width="1.4" height="1.4"/><rect x="1077" y="717" width="1.4" height="1.4"/><rect x="1030" y="738" width="1.4" height="1.4"/><rect x="982" y="759" width="1.4" height="1.4"/><rect x="935" y="780" width="1.4" height="1.4"/><rect x="888" y="801" width="1.4" height="1.4"/><rect x="1914" y="392" width="1.4" height="1.4"/><rect x="1867" y="413" width="1.4" height="1.4"/><rect x="1820" y="434" width="1.4" height="1.4"/><rect x="1773" y="455" width="1.4" height="1.4"/><rect x="1725" y="476" width="1.4" height="1.4"/><rect x="1678" y="497" width="1.4" height="1.4"/><rect x="1631" y="518" width="1.4" height="1.4"/><rect x="1584" y="539" width="1.4" height="1.4"/><rect x="1537" y="560" width="1.4" height="1.4"/><rect x="1489" y="582" width="1.4" height="1.4"/><rect x="1442" y="603" width="1.4" height="1.4"/><rect x="1395" y="624" width="1.4" height="1.4"/><rect x="1348" y="645" width="1.4" height="1.4"/><rect x="1301" y="666" width="1.4" height="1.4"/><rect x="1253" y="687" width="1.4" height="1.4"/><rect x="1206" y="708" width="1.4" height="1.4"/><rect x="1159" y="729" width="1.4" height="1.4"/><rect x="1112" y="750" width="1.4" height="1.4"/><rect x="1065" y="771" width="1.4" height="1.4"/><rect x="1017" y="792" width="1.4" height="1.4"/><rect x="1902" y="446" width="1.4" height="1.4"/><rect x="1855" y="468" width="1.4" height="1.4"/><rect x="1808" y="489" width="1.4" height="1.4"/><rect x="1760" y="510" width="1.4" height="1.4"/><rect x="1713" y="531" width="1.4" height="1.4"/><rect x="1666" y="552" width="1.4" height="1.4"/><rect x="1619" y="573" width="1.4" height="1.4"/><rect x="1572" y="594" width="1.4" height="1.4"/><rect x="1524" y="615" width="1.4" height="1.4"/><rect x="1477" y="636" width="1.4" height="1.4"/><rect x="1430" y="657" width="1.4" height="1.4"/><rect x="1383" y="678" width="1.4" height="1.4"/><rect x="1336" y="700" width="1.4" height="1.4"/><rect x="1288" y="721" width="1.4" height="1.4"/><rect x="1241" y="742" width="1.4" height="1.4"/><rect x="1194" y="763" width="1.4" height="1.4"/><rect x="1147" y="784" width="1.4" height="1.4"/><rect x="1100" y="805" width="1.4" height="1.4"/><rect x="1890" y="501" width="1.4" height="1.4"/><rect x="1843" y="522" width="1.4" height="1.4"/><rect x="1795" y="543" width="1.4" height="1.4"/><rect x="1748" y="564" width="1.4" height="1.4"/><rect x="1701" y="586" width="1.4" height="1.4"/><rect x="1654" y="607" width="1.4" height="1.4"/><rect x="1607" y="628" width="1.4" height="1.4"/><rect x="1559" y="649" width="1.4" height="1.4"/><rect x="1512" y="670" width="1.4" height="1.4"/><rect x="1465" y="691" width="1.4" height="1.4"/><rect x="1418" y="712" width="1.4" height="1.4"/><rect x="1371" y="733" width="1.4" height="1.4"/><rect x="1323" y="754" width="1.4" height="1.4"/><rect x="1276" y="776" width="1.4" height="1.4"/><rect x="1229" y="797" width="1.4" height="1.4"/><rect x="1878" y="556" width="1.4" height="1.4"/><rect x="1830" y="577" width="1.4" height="1.4"/><rect x="1783" y="598" width="1.4" height="1.4"/><rect x="1736" y="619" width="1.4" height="1.4"/><rect x="1689" y="640" width="1.4" height="1.4"/><rect x="1642" y="662" width="1.4" height="1.4"/><rect x="1594" y="683" width="1.4" height="1.4"/><rect x="1547" y="704" width="1.4" height="1.4"/><rect x="1500" y="725" width="1.4" height="1.4"/><rect x="1453" y="746" width="1.4" height="1.4"/><rect x="1406" y="767" width="1.4" height="1.4"/><rect x="1358" y="788" width="1.4" height="1.4"/><rect x="1913" y="590" width="1.4" height="1.4"/><rect x="1865" y="611" width="1.4" height="1.4"/><rect x="1818" y="632" width="1.4" height="1.4"/><rect x="1771" y="653" width="1.4" height="1.4"/><rect x="1724" y="674" width="1.4" height="1.4"/><rect x="1677" y="695" width="1.4" height="1.4"/><rect x="1629" y="716" width="1.4" height="1.4"/><rect x="1582" y="737" width="1.4" height="1.4"/><rect x="1535" y="758" width="1.4" height="1.4"/><rect x="1488" y="780" width="1.4" height="1.4"/><rect x="1441" y="801" width="1.4" height="1.4"/><rect x="1900" y="644" width="1.4" height="1.4"/><rect x="1853" y="666" width="1.4" height="1.4"/><rect x="1806" y="687" width="1.4" height="1.4"/><rect x="1759" y="708" width="1.4" height="1.4"/><rect x="1712" y="729" width="1.4" height="1.4"/><rect x="1664" y="750" width="1.4" height="1.4"/><rect x="1617" y="771" width="1.4" height="1.4"/><rect x="1570" y="792" width="1.4" height="1.4"/><rect x="1888" y="699" width="1.4" height="1.4"/><rect x="1841" y="720" width="1.4" height="1.4"/><rect x="1794" y="742" width="1.4" height="1.4"/><rect x="1747" y="763" width="1.4" height="1.4"/><rect x="1699" y="784" width="1.4" height="1.4"/><rect x="1652" y="805" width="1.4" height="1.4"/><rect x="1876" y="754" width="1.4" height="1.4"/><rect x="1829" y="775" width="1.4" height="1.4"/><rect x="1782" y="796" width="1.4" height="1.4"/><rect x="1911" y="788" width="1.4" height="1.4"/><rect x="1864" y="809" width="1.4" height="1.4"/></g><line x1="318" y1="148" x2="1113" y2="270" stroke="#e2e2e2" stroke-width="1" /><line x1="626" y1="279" x2="1023" y2="99" stroke="#e6e6e6" stroke-width="1" /><line x1="1733" y1="275" x2="1920" y2="190" stroke="#9feaf0" stroke-width="1" /><line x1="1652" y1="805" x2="1920" y2="685" stroke="#e4e4e4" stroke-width="1" /><defs>
<pattern id="pTop" width="11" height="3.6" patternUnits="userSpaceOnUse" patternTransform="skewY(8.5)">
 <rect width="11" height="3.6" fill="#ab892c"/><rect x="0" y="0" width="11" height="1.3" fill="#b47a5c"/><rect x="0" y="0" width="1.6" height="3.6" fill="#b47a5c"/></pattern>
<pattern id="pTop2" width="7" height="10" patternUnits="userSpaceOnUse" patternTransform="translate(3,0) skewY(-24.1)">
 <rect x="0" y="0" width="7" height="1.2" fill="#b47a5c"/></pattern>
<pattern id="pRight" width="8.5" height="10.4" patternUnits="userSpaceOnUse" patternTransform="skewY(-24.1)">
 <rect width="8.5" height="10.4" fill="#b08e2a"/><rect x="0" y="0" width="8.5" height="1.3" fill="#b67c5c"/><rect x="0" y="0" width="1.3" height="10.4" fill="#b67c5c"/></pattern>
<pattern id="pRight2" width="10.8" height="10.4" patternUnits="userSpaceOnUse" patternTransform="translate(4,0) skewY(8.75)">
 <rect x="0" y="0" width="10.8" height="1.2" fill="#b67c5c"/><rect x="0" y="0" width="1.2" height="10.4" fill="#b67c5c"/></pattern>
<pattern id="pRightLow" width="8.5" height="10" patternUnits="userSpaceOnUse" patternTransform="skewY(-24.1)">
 <rect width="8.5" height="10" fill="#c5aa6a"/><rect x="0" y="0" width="8.5" height="1.2" fill="#bd8a66"/><rect x="0" y="0" width="1.2" height="10" fill="#bd8a66"/></pattern>
<pattern id="pFront" width="10.8" height="13.9" patternUnits="userSpaceOnUse" patternTransform="translate(1456,494) skewY(8.75)">
 <rect width="10.8" height="13.9" fill="#c9ad66"/><rect x="0" y="0" width="10.8" height="1.2" fill="#b98064"/><rect x="0" y="0" width="1.2" height="13.9" fill="#b98064"/></pattern>
<pattern id="pOpen" width="10" height="9" patternUnits="userSpaceOnUse" patternTransform="skewY(8.5)">
 <rect width="10" height="9" fill="#c9ac68"/><rect x="0" y="0" width="10" height="1.1" fill="#b98064"/><rect x="0" y="0" width="1.1" height="9" fill="#b98064"/></pattern>
<pattern id="pBeam" width="10.8" height="9" patternUnits="userSpaceOnUse" patternTransform="skewY(8.75)">
 <rect width="10.8" height="9" fill="#a08a42"/><rect x="0" y="0" width="10.8" height="1" fill="#a8825e"/><rect x="0" y="0" width="1" height="9" fill="#a8825e"/></pattern>
</defs><polygon points="760,346 1113,184 1897,301 1611,429" fill="url(#pTop)" /><polygon points="760,346 1113,184 1897,301 1611,429" fill="url(#pTop2)" opacity="0.3"/><line x1="760" y1="342" x2="1113" y2="180.5" stroke="#c4c4c4" stroke-width="4.2" /><line x1="760" y1="342" x2="1113" y2="180.5" stroke="#555" stroke-width="1.2" stroke-dasharray="1 4"/><polygon points="1373,428 1611,466 1611,626 1373,591" fill="url(#pFront)" /><polygon points="1373,578 1611,613 1611,626 1373,591" fill="#c4a66a" opacity="0.6"/><line x1="1373" y1="567" x2="1611" y2="603" stroke="#f0b020" stroke-width="1.2" stroke-dasharray="6 4"/><polygon points="1373,397 1611,429 1611,466 1373,428" fill="url(#pBeam)" /><line x1="1373" y1="397" x2="1611" y2="429" stroke="#f3a81c" stroke-width="1.3" /><line x1="1373" y1="428" x2="1615" y2="466" stroke="#f3a81c" stroke-width="1.3" /><line x1="1373" y1="403" x2="1611" y2="435" stroke="#e8b040" stroke-width="0.8" /><line x1="1611" y1="431" x2="1611" y2="466" stroke="#f3a81c" stroke-width="1.2" /><line x1="1616" y1="433" x2="1616" y2="462" stroke="#f3a81c" stroke-width="1.2" /><polygon points="1611,429 1897,301 1897,669 1611,626" fill="url(#pRight)" /><polygon points="1611,429 1897,301 1897,669 1611,626" fill="url(#pRight2)" opacity="0.4"/><polygon points="1611,626 1897,669 1611,797" fill="url(#pRightLow)" /><polygon points="1334,331 1430,288 1596,313 1500,356" fill="url(#pOpen)" /><polygon points="1334,331 1430,288 1596,313 1500,356" fill="none" stroke="#4a6a80" stroke-width="1"/><polygon points="1326,332 1428,283 1606,311 1502,361" fill="none" stroke="#e8b020" stroke-width="1" stroke-dasharray="4 3"/><polygon points="1334,331 1430,288 1596,313 1500,356" fill="none" stroke="#2a7aa0" stroke-width="1.5" stroke-dasharray="1 6"/><polyline points="1350,337 1442,298 1580,319 1490,350 1350,337" fill="none" stroke="#c08a6a" stroke-width="0.8"/><polyline points="900,289 1108,198 1851,305 1599,417 1373,383" fill="none" stroke="#f2b418" stroke-width="1.2" stroke-dasharray="6 4"/><polyline points="922,286 1108,204" fill="none" stroke="#f2b418" stroke-width="1.2" stroke-dasharray="6 4"/><polyline points="1107,200 1107,420" fill="none" stroke="#f2b418" stroke-width="1.2" stroke-dasharray="6 4"/><polyline points="1137.5,260 1137.5,214 1879,324" fill="none" stroke="#f2b418" stroke-width="1.2" stroke-dasharray="6 4"/><ellipse cx="1016" cy="292" rx="56" ry="27" fill="none" stroke="#d8a838" stroke-width="1" stroke-dasharray="5 3"/><ellipse cx="1016" cy="292" rx="56" ry="27" fill="none" stroke="#3a7aa0" stroke-width="1.4" stroke-dasharray="1 7"/><polyline points="1622,446 1886,328 1886,652" fill="none" stroke="#f2b418" stroke-width="1.2" stroke-dasharray="6 4"/><polyline points="1873,324 1873,655" fill="none" stroke="#f2b418" stroke-width="1.2" stroke-dasharray="6 4"/><polyline points="1840,340 1626,436 1626,612 1872,645" fill="none" stroke="#f2b418" stroke-width="1.2" stroke-dasharray="6 4"/><polyline points="1626,620 1626,780 1882,664" fill="none" stroke="#f2b418" stroke-width="1.2" stroke-dasharray="6 4" opacity="0.8"/><line x1="1113" y1="184" x2="1897" y2="301" stroke="#4a5868" stroke-width="1.2" /><line x1="1611" y1="429" x2="1897" y2="301" stroke="#56687a" stroke-width="1.1" /><line x1="1611" y1="429" x2="1611" y2="797" stroke="#56687a" stroke-width="1" /><line x1="1897" y1="301" x2="1897" y2="669" stroke="#7a6a50" stroke-width="0.8" /><line x1="1112" y1="186" x2="1112" y2="400" stroke="#6a6a6a" stroke-width="1.5" stroke-dasharray="2 2"/><polyline points="760,336.6 1120,175.3 1880,289" fill="none" stroke="#c0805e" stroke-width="1"/><polyline points="1897,318 1905,318 1905,640 1897,640" fill="none" stroke="#c0805e" stroke-width="1"/><polyline points="1605,470 1605,780" fill="none" stroke="#c0805e" stroke-width="1"/><line x1="1373" y1="591" x2="1897" y2="669" stroke="#40ee40" stroke-width="1.4" stroke-dasharray="3 1"/><line x1="1611" y1="797" x2="1897" y2="669" stroke="#40ee40" stroke-width="1.4" stroke-dasharray="3 1"/><g opacity="1"><polygon points="1382,612 1394,604 1412,607 1403,614" fill="#3dcf3d"/><polygon points="1394,604 1412,607 1403,614" fill="#34b834"/><circle cx="1398" cy="600" r="5.6" fill="#3ccc3c"/><circle cx="1397" cy="601" r="3" fill="#22aa22"/></g><g opacity="1"><polygon points="1453,624 1465,616 1483,619 1474,626" fill="#3dcf3d"/><polygon points="1465,616 1483,619 1474,626" fill="#34b834"/><circle cx="1469" cy="612" r="5.6" fill="#3ccc3c"/><circle cx="1468" cy="613" r="3" fill="#22aa22"/></g><g opacity="1"><polygon points="1525,635 1537,627 1555,630 1546,637" fill="#3dcf3d"/><polygon points="1537,627 1555,630 1546,637" fill="#34b834"/><circle cx="1541" cy="623" r="5.6" fill="#3ccc3c"/><circle cx="1540" cy="624" r="3" fill="#22aa22"/></g><g opacity="1"><polygon points="1596,645 1608,637 1626,640 1617,647" fill="#3dcf3d"/><polygon points="1608,637 1626,640 1617,647" fill="#34b834"/><circle cx="1612" cy="633" r="5.6" fill="#3ccc3c"/><circle cx="1611" cy="634" r="3" fill="#22aa22"/></g><g opacity="0.55"><polygon points="1668,655 1680,647 1698,650 1689,657" fill="#3dcf3d"/><polygon points="1680,647 1698,650 1689,657" fill="#34b834"/><circle cx="1684" cy="643" r="5.6" fill="#3ccc3c"/><circle cx="1683" cy="644" r="3" fill="#22aa22"/></g><g opacity="0.55"><polygon points="1739,666 1751,658 1769,661 1760,668" fill="#3dcf3d"/><polygon points="1751,658 1769,661 1760,668" fill="#34b834"/><circle cx="1755" cy="654" r="5.6" fill="#3ccc3c"/><circle cx="1754" cy="655" r="3" fill="#22aa22"/></g><g opacity="0.55"><polygon points="1810,676 1822,668 1840,671 1831,678" fill="#3dcf3d"/><polygon points="1822,668 1840,671 1831,678" fill="#34b834"/><circle cx="1826" cy="664" r="5.6" fill="#3ccc3c"/><circle cx="1825" cy="665" r="3" fill="#22aa22"/></g><g opacity="1"><polygon points="1636,798 1648,790 1666,793 1657,800" fill="#3dcf3d"/><polygon points="1648,790 1666,793 1657,800" fill="#34b834"/><circle cx="1652" cy="786" r="5.6" fill="#3ccc3c"/><circle cx="1651" cy="787" r="3" fill="#22aa22"/></g><g opacity="1"><polygon points="1677,780 1689,772 1707,775 1698,782" fill="#3dcf3d"/><polygon points="1689,772 1707,775 1698,782" fill="#34b834"/><circle cx="1693" cy="768" r="5.6" fill="#3ccc3c"/><circle cx="1692" cy="769" r="3" fill="#22aa22"/></g><g opacity="1"><polygon points="1718,762 1730,754 1748,757 1739,764" fill="#3dcf3d"/><polygon points="1730,754 1748,757 1739,764" fill="#34b834"/><circle cx="1734" cy="750" r="5.6" fill="#3ccc3c"/><circle cx="1733" cy="751" r="3" fill="#22aa22"/></g><g opacity="1"><polygon points="1759,744 1771,736 1789,739 1780,746" fill="#3dcf3d"/><polygon points="1771,736 1789,739 1780,746" fill="#34b834"/><circle cx="1775" cy="732" r="5.6" fill="#3ccc3c"/><circle cx="1774" cy="733" r="3" fill="#22aa22"/></g><g opacity="1"><polygon points="1800,726 1812,718 1830,721 1821,728" fill="#3dcf3d"/><polygon points="1812,718 1830,721 1821,728" fill="#34b834"/><circle cx="1816" cy="714" r="5.6" fill="#3ccc3c"/><circle cx="1815" cy="715" r="3" fill="#22aa22"/></g><g opacity="1"><polygon points="1841,706 1853,698 1871,701 1862,708" fill="#3dcf3d"/><polygon points="1853,698 1871,701 1862,708" fill="#34b834"/><circle cx="1857" cy="694" r="5.6" fill="#3ccc3c"/><circle cx="1856" cy="695" r="3" fill="#22aa22"/></g><circle cx="1113" cy="184" r="2.6" fill="#f01010"/><circle cx="1897" cy="301" r="2.6" fill="#f01010"/><circle cx="1611" cy="429" r="2.6" fill="#f01010"/><circle cx="1611" cy="797" r="2.6" fill="#f01010"/><circle cx="1897" cy="669" r="2.6" fill="#f01010"/><circle cx="1430" cy="288" r="2.6" fill="#f01010"/><circle cx="1596" cy="313" r="2.6" fill="#f01010"/><circle cx="1500" cy="356" r="2.6" fill="#f01010"/><text x="1033" y="200" font-family="Liberation Sans" font-size="11" fill="#b8704e">5.24 | 8.70</text><text x="1025" y="201" font-family="Liberation Sans" font-size="11" fill="#b8704e">_</text><text x="1146" y="190" font-family="Liberation Sans" font-size="11" fill="#b8704e">5.24 | 8.70</text><text x="1884" y="271" font-family="Liberation Sans" font-size="11" fill="#b8704e">5.24 | 8</text><text x="1909" y="642" font-family="Liberation Sans" font-size="11" fill="#b8704e">5.</text><text x="1838" y="672" font-family="Liberation Sans" font-size="11" fill="#b8704e" opacity="0.6">5.24 | 8.70</text><g stroke="#555" stroke-width="1.3" fill="none"><path d="M1755 532v32M1743 551l24-7"/><path d="M1752 537l3-5 3 5M1752 559l3 5 3-5" /></g><g>
<polygon points="1805,137 1839,121.5 1899,131 1865,146" fill="#8a8a8a"/>
<polygon points="1805,137 1865,146 1865,212 1805,202" fill="#cfcfcf"/>
<polygon points="1865,146 1899,131 1899,196.5 1865,212" fill="#a8a8a8"/>
<g stroke="#787878" stroke-width="1.6">
<line x1="1820" y1="139" x2="1820" y2="204.5"/><line x1="1849" y1="143.5" x2="1849" y2="209.5"/>
<line x1="1805" y1="154.5" x2="1865" y2="163"/><line x1="1805" y1="187" x2="1865" y2="195"/>
<line x1="1873.5" y1="142.5" x2="1873.5" y2="208"/><line x1="1890.5" y1="135" x2="1890.5" y2="200.5"/>
<line x1="1865" y1="163" x2="1899" y2="147"/><line x1="1865" y1="195" x2="1899" y2="181"/>
<line x1="1814" y1="133" x2="1874" y2="142"/><line x1="1830" y1="125.5" x2="1890" y2="135"/>
<line x1="1820" y1="139" x2="1854" y2="123.5"/><line x1="1849" y1="143.5" x2="1883" y2="128"/>
</g>
<text x="1829" y="183" font-family="Liberation Sans" font-size="12.5" font-weight="bold" fill="#2dbd3a">-Y</text>
<text x="1877" y="178" font-family="Liberation Sans" font-size="11.5" font-weight="bold" fill="#e03a3a" transform="rotate(-8 1882 174)">-X</text>
<path d="M1846 134l8-2M1848 136l8-2" stroke="#3a4a90" stroke-width="1.6"/>
</g></svg>
<div style="left:283px;top:279px;width:1092px;height:722px;background:#d3d3da;border:1px solid #555;box-shadow:2px 2px 14px rgba(0,0,0,0.30)"></div>
<div style="left:284px;top:280px;width:1090px;height:30px;background:#fff"></div>
<svg style="position:absolute;left:291px;top:285px;" width="20" height="20" viewBox="0 0 20 20"><path d="M2 9l9-6 7 4-9 6z" fill="#4a72b4" stroke="#2a4a80" stroke-width="0.7"/><path d="M5 8.5l8-5M7 10l8-5M9 11.5l7-4.5" stroke="#b0c8ea" stroke-width="0.9"/><path d="M8 6.5c-3 1.5-4.5 4-4.5 7.5a3.6 3.6 0 1 0 3.6-3.6" fill="none" stroke="#6a5a20" stroke-width="3.6"/><path d="M8 6.5c-3 1.5-4.5 4-4.5 7.5a3.6 3.6 0 1 0 3.6-3.6" fill="none" stroke="#f2c832" stroke-width="2.3"/><circle cx="7.1" cy="14" r="1" fill="#fff"/></svg>
<div class="t" style="left:313px;top:286.0px;height:16px;line-height:16px;color:#111;font-size:11.6px">Edit Ultimate Configuration | Concrete Design | EN 1992 | CEN | 2014-11</div>
<div style="left:1255px;top:294px;width:10px;height:1px;background:#c8c8c8"></div>
<div style="left:1300px;top:289px;width:11px;height:11px;border:1.3px solid #222"></div>
<svg style="position:absolute;left:1345px;top:288px;" width="12" height="12" viewBox="0 0 12 12"><path d="M1 1l10 10M11 1l-10 10" stroke="#222" stroke-width="1.2"/></svg>
<div style="left:293px;top:319px;width:200px;height:631px;background:#fff"></div>
<div class="t" style="left:298px;top:320.0px;height:16px;line-height:16px;color:#4a62a0;font-size:11.8px;-webkit-text-stroke:0.6px #4a62a0">List</div>
<div style="left:315px;top:338px;width:178px;height:17px;background:#cce4f7"></div>
<div style="left:295px;top:338px;width:21px;height:18px;border:1px dotted #222"></div>
<div style="left:297px;top:341px;width:11px;height:11px;background:#87ceeb"></div>
<div style="left:315px;top:356px;width:1px;height:565px;background:#e8e8e8"></div>
<div style="left:327px;top:338px;width:1px;height:583px;background:#e8e8e8"></div>
<div class="t" style="left:319px;top:339.0px;height:16px;line-height:16px;">1</div>
<div class="t" style="left:331px;top:339.0px;height:16px;line-height:16px;">Default</div>
<div style="left:298px;top:925px;width:25px;height:21px;background:#cce4f7"></div>
<svg style="position:absolute;left:298px;top:925px;" width="25" height="21" viewBox="0 0 25 21"><path d="M7 4l1.2 2.6 2.8.2-2.1 1.8.7 2.7-2.6-1.5-2.5 1.5.7-2.7-2.1-1.8 2.8-.2z" fill="#f5e020" stroke="#c0a000" stroke-width="0.5"/><rect x="9.5" y="9.5" width="11" height="9" fill="#fff" stroke="#333"/><rect x="9.5" y="9.5" width="11" height="2" fill="#333"/></svg>
<div style="left:326px;top:925px;width:25px;height:21px;background:#cce4f7"></div>
<svg style="position:absolute;left:326px;top:925px;" width="25" height="21" viewBox="0 0 25 21"><rect x="5.5" y="4.5" width="10" height="8" fill="#fff" stroke="#333"/><rect x="5.5" y="4.5" width="10" height="2" fill="#333"/><rect x="9.5" y="9.5" width="11" height="9" fill="#fff" stroke="#333"/><rect x="9.5" y="9.5" width="11" height="2" fill="#333"/></svg>
<div style="left:361px;top:925px;width:25px;height:21px;background:#e6e6e6"></div>
<svg style="position:absolute;left:361px;top:925px;" width="25" height="21" viewBox="0 0 25 21"><rect x="6.5" y="4.5" width="5" height="5" fill="none" stroke="#aaa"/><rect x="6.5" y="11.5" width="5" height="5" fill="none" stroke="#aaa"/><path d="M7 7l2 2 3-4M7 14l2 2 3-4M13 13l2 2 4-5" fill="none" stroke="#999"/></svg>
<div style="left:389px;top:925px;width:25px;height:21px;background:#e6e6e6"></div>
<svg style="position:absolute;left:389px;top:925px;" width="25" height="21" viewBox="0 0 25 21"><rect x="6.5" y="4.5" width="5" height="5" fill="none" stroke="#aaa"/><rect x="6.5" y="11.5" width="5" height="5" fill="none" stroke="#aaa"/><path d="M7 7l2 2 3-4" fill="none" stroke="#999"/><path d="M14 10c2-2 5-1 5 1M19 13c-2 2-5 1-5-1" fill="none" stroke="#999"/></svg>
<div style="left:463px;top:925px;width:25px;height:21px;background:#cce4f7"></div>
<svg style="position:absolute;left:463px;top:925px;" width="25" height="21" viewBox="0 0 25 21"><path d="M7 5l11 11M18 5l-11 11" stroke="#e01010" stroke-width="2.6"/></svg>
<div style="left:503px;top:319px;width:60px;height:47px;background:#fff"></div>
<div class="t" style="left:509px;top:320.0px;height:16px;line-height:16px;color:#4a62a0;font-size:11.8px;-webkit-text-stroke:0.6px #4a62a0">No.</div>
<div style="left:508px;top:341px;width:50px;height:20px;background:#e6e6e6"></div>
<div class="t" style="right:1367px;top:344.0px;height:16px;line-height:16px;">1</div>
<div style="left:573px;top:319px;width:362px;height:47px;background:#fff"></div>
<div class="t" style="left:578px;top:320.0px;height:16px;line-height:16px;color:#4a62a0;font-size:11.8px;-webkit-text-stroke:0.6px #4a62a0">Ultimate Configuration Name</div>
<div style="left:578px;top:341px;width:352px;height:21px;background:#e4e4f0"></div>
<div class="t" style="left:582px;top:343.0px;height:16px;line-height:16px;">Default</div>
<svg style="position:absolute;left:914px;top:346px;" width="12" height="10" viewBox="0 0 12 10"><path d="M1.5 3l4.5 4.5 4.5-4.5" fill="none" stroke="#333" stroke-width="1.2"/></svg>
<div style="left:945px;top:319px;width:420px;height:47px;background:#fff"></div>
<div class="t" style="left:950px;top:320.0px;height:16px;line-height:16px;color:#4a62a0;font-size:11.8px;-webkit-text-stroke:0.6px #4a62a0">Assigned to</div>
<div style="left:950px;top:341px;width:380px;height:20px;background:#e6e6e6"></div>
<svg style="position:absolute;left:954px;top:344px;" width="16" height="14" viewBox="0 0 16 14"><path d="M2 12l8-9" stroke="#8aa8d8" stroke-width="2.5"/><circle cx="2" cy="12" r="1.6" fill="#e02020"/><circle cx="10" cy="3" r="1.5" fill="#e02020"/><path d="M11.5 9h3M13 9v4M11.5 13h3" stroke="#333" stroke-width="0.8"/></svg>
<div class="t" style="left:971px;top:343.0px;height:16px;line-height:16px;">All</div>
<svg style="position:absolute;left:995px;top:344px;" width="14" height="12" viewBox="0 0 14 12"><path d="M1 7l5-4h7l-5 5z" fill="#8fb0e0" stroke="#5e82bf" stroke-width="0.8"/></svg>
<div class="t" style="left:1011px;top:343.0px;height:16px;line-height:16px;">All</div>
<div style="left:1041px;top:350px;width:3px;height:3px;background:#e02020;border-radius:2px"></div>
<div class="t" style="left:1051px;top:343.0px;height:16px;line-height:16px;">All</div>
<div style="left:1335px;top:341px;width:25px;height:20px;background:#cce4f7"></div>
<svg style="position:absolute;left:1335px;top:341px;" width="25" height="20" viewBox="0 0 25 20"><path d="M7 3l5 5M12 3l-5 5" stroke="#e02020" stroke-width="1.2"/><path d="M10 6v11l2.5-2.5 2 4 1.5-.8-2-4h3.5z" fill="#fff" stroke="#333" stroke-width="0.9"/></svg>
<div style="left:503px;top:376px;width:65px;height:24px;background:#ececec"></div>
<div class="t" style="left:504.0px;width:65px;text-align:center;top:381.0px;height:16px;line-height:16px;font-size:11.2px">Members</div>
<div style="left:568px;top:378px;width:59px;height:21px;background:#e1e1e1;border-left:1px solid #d0d0d6"></div>
<div class="t" style="left:568.0px;width:59px;text-align:center;top:381.0px;height:16px;line-height:16px;font-size:11.2px">Stability</div>
<div style="left:628px;top:378px;width:60px;height:21px;background:#e1e1e1;border-left:1px solid #d0d0d6"></div>
<div class="t" style="left:628.0px;width:60px;text-align:center;top:381.0px;height:16px;line-height:16px;font-size:11.2px">Surfaces</div>
<div style="left:689px;top:378px;width:64px;height:21px;background:#e1e1e1;border-left:1px solid #d0d0d6"></div>
<div class="t" style="left:689.0px;width:64px;text-align:center;top:381.0px;height:16px;line-height:16px;font-size:11.2px">Punching</div>
<div style="left:753px;top:378px;width:61px;height:21px;background:#e1e1e1;border-left:1px solid #d0d0d6"></div>
<div class="t" style="left:753.0px;width:61px;text-align:center;top:381.0px;height:16px;line-height:16px;font-size:11.2px">Fatigue</div>
<div style="left:814px;top:378px;width:124px;height:21px;background:#e1e1e1;border-left:1px solid #d0d0d6"></div>
<div class="t" style="left:814.0px;width:124px;text-align:center;top:381.0px;height:16px;line-height:16px;font-size:11.2px">Standard Parameters</div>
<div style="left:503px;top:399px;width:862px;height:551px;background:#ececec"></div>
<div style="left:512px;top:407px;width:423px;height:18px;background:#fff"></div>
<div class="t" style="left:517px;top:408.0px;height:16px;line-height:16px;color:#4a62a0;font-size:11.8px;-webkit-text-stroke:0.6px #4a62a0">Design Parameters</div>
<div style="left:512px;top:425px;width:407px;height:444px;overflow:hidden;background:#fff">
<div style="left:0px;top:0px;width:19px;height:444px;background:#e3e3e3"></div>
<div style="left:19px;top:-5px;width:388px;height:16px;background:#f7f7f0"></div>
<div style="left:0px;top:27px;width:407px;height:16px;background:#e3e3e3"></div>
<div style="left:19px;top:43px;width:388px;height:16px;background:#f7f7f0"></div>
<div style="left:19px;top:59px;width:388px;height:16px;background:#efefef"></div>
<div style="left:19px;top:75px;width:388px;height:16px;background:#f7f7f0"></div>
<div style="left:19px;top:91px;width:388px;height:16px;background:#f7f7f0"></div>
<div style="left:19px;top:123px;width:388px;height:16px;background:#f7f7f0"></div>
<div style="left:19px;top:139px;width:388px;height:16px;background:#f7f7f0"></div>
<div style="left:19px;top:171px;width:388px;height:16px;background:#f7f7f0"></div>
<div style="left:0px;top:203px;width:407px;height:16px;background:#e3e3e3"></div>
<div style="left:19px;top:219px;width:388px;height:16px;background:#f7f7f0"></div>
<div style="left:0px;top:251px;width:407px;height:16px;background:#e3e3e3"></div>
<div style="left:19px;top:267px;width:388px;height:16px;background:#f7f7f0"></div>
<div style="left:0px;top:299px;width:407px;height:16px;background:#e3e3e3"></div>
<div style="left:19px;top:315px;width:388px;height:16px;background:#efefef"></div>
<div style="left:19px;top:331px;width:388px;height:16px;background:#f7f7f0"></div>
<div style="left:19px;top:347px;width:388px;height:16px;background:#f7f7f0"></div>
<div style="left:19px;top:379px;width:388px;height:16px;background:#efefef"></div>
<div style="left:19px;top:395px;width:388px;height:16px;background:#efefef"></div>
<div style="left:19px;top:411px;width:388px;height:16px;background:#f7f7f0"></div>
</div>
<div style="left:512px;top:425px;width:407px;height:444px;overflow:hidden">
<div style="left:9px;top:0px;width:1px;height:299px;background:repeating-linear-gradient(180deg,#a0a0a0 0 1px,transparent 1px 2px)"></div>
<div style="left:29px;top:48px;width:1px;height:132px;background:repeating-linear-gradient(180deg,#a0a0a0 0 1px,transparent 1px 2px)"></div>
<div style="left:49px;top:64px;width:1px;height:84px;background:repeating-linear-gradient(180deg,#a0a0a0 0 1px,transparent 1px 2px)"></div>
<div style="left:69px;top:80px;width:1px;height:20px;background:repeating-linear-gradient(180deg,#a0a0a0 0 1px,transparent 1px 2px)"></div>
<div style="left:29px;top:224px;width:1px;height:4px;background:repeating-linear-gradient(180deg,#a0a0a0 0 1px,transparent 1px 2px)"></div>
<div style="left:29px;top:272px;width:1px;height:4px;background:repeating-linear-gradient(180deg,#a0a0a0 0 1px,transparent 1px 2px)"></div>
<div style="left:29px;top:320px;width:1px;height:68px;background:repeating-linear-gradient(180deg,#a0a0a0 0 1px,transparent 1px 2px)"></div>
<div style="left:49px;top:336px;width:1px;height:20px;background:repeating-linear-gradient(180deg,#a0a0a0 0 1px,transparent 1px 2px)"></div>
<div style="left:49px;top:408px;width:1px;height:12px;background:repeating-linear-gradient(180deg,#a0a0a0 0 1px,transparent 1px 2px)"></div>
<div style="left:69px;top:408px;width:1px;height:12px;background:repeating-linear-gradient(180deg,#a0a0a0 0 1px,transparent 1px 2px)"></div>
<svg style="position:absolute;left:43px;top:-3.5px;" width="13" height="13" viewBox="0 0 13 13"><circle cx="6.5" cy="6.5" r="5.8" fill="#fff" stroke="#333" stroke-width="1"/></svg>
<div style="left:31px;top:3px;width:10px;height:1px;background:repeating-linear-gradient(90deg,#a0a0a0 0 1px,transparent 1px 2px)"></div>
<div class="t" style="left:62px;top:-4.0px;height:16px;line-height:16px;">Automatically increase required longitudinal reinf. to avoid shear re</div>
<svg style="position:absolute;left:5px;top:30px;" width="10" height="10" viewBox="0 0 10 10"><rect x="0.5" y="0.5" width="9" height="9" fill="#fff" stroke="#8a8a8a"/><path d="M2 4.5h6" stroke="#444"/></svg>
<div style="left:15px;top:35px;width:5px;height:1px;background:repeating-linear-gradient(90deg,#a0a0a0 0 1px,transparent 1px 2px)"></div>
<div class="t" style="left:23px;top:28.0px;height:16px;line-height:16px;">Shear Joint</div>
<svg style="position:absolute;left:25px;top:46px;" width="10" height="10" viewBox="0 0 10 10"><rect x="0.5" y="0.5" width="9" height="9" fill="#fff" stroke="#8a8a8a"/><path d="M2 4.5h6" stroke="#444"/></svg>
<div style="left:35px;top:51px;width:6px;height:1px;background:repeating-linear-gradient(90deg,#a0a0a0 0 1px,transparent 1px 2px)"></div>
<svg style="position:absolute;left:43px;top:45px;" width="13" height="13" viewBox="0 0 13 13"><rect x="0.5" y="0.5" width="12" height="12" fill="#fff" stroke="#333"/><path d="M2.5 6.5l3 3 5-6.5" fill="none" stroke="#222" stroke-width="1.2"/></svg>
<div class="t" style="left:62px;top:44.0px;height:16px;line-height:16px;">Design of shear joint</div>
<svg style="position:absolute;left:45px;top:62px;" width="10" height="10" viewBox="0 0 10 10"><rect x="0.5" y="0.5" width="9" height="9" fill="#fff" stroke="#8a8a8a"/><path d="M2 4.5h6" stroke="#444"/></svg>
<div style="left:55px;top:67px;width:6px;height:1px;background:repeating-linear-gradient(90deg,#a0a0a0 0 1px,transparent 1px 2px)"></div>
<div class="t" style="left:63px;top:60.0px;height:16px;line-height:16px;">Analysis method for shear stress in joint</div>
<div style="left:70px;top:83px;width:11px;height:1px;background:repeating-linear-gradient(90deg,#a0a0a0 0 1px,transparent 1px 2px)"></div>
<svg style="position:absolute;left:83px;top:76.5px;" width="13" height="13" viewBox="0 0 13 13"><circle cx="6.5" cy="6.5" r="5.8" fill="#fff" stroke="#333" stroke-width="1"/><circle cx="6.5" cy="6.5" r="3.3" fill="#222"/></svg>
<div class="t" style="left:102px;top:76.0px;height:16px;line-height:16px;">Analytical with shear force V<sub style='font-size:9px;vertical-align:-2px'>z,Ed</sub> and β-factor acc. to Eq. 6.24</div>
<div style="left:70px;top:99px;width:11px;height:1px;background:repeating-linear-gradient(90deg,#a0a0a0 0 1px,transparent 1px 2px)"></div>
<svg style="position:absolute;left:83px;top:92.5px;" width="13" height="13" viewBox="0 0 13 13"><circle cx="6.5" cy="6.5" r="5.8" fill="#fff" stroke="#333" stroke-width="1"/></svg>
<div class="t" style="left:102px;top:92.0px;height:16px;line-height:16px;">General integration of axial stresses into section parts</div>
<div style="left:50px;top:131px;width:11px;height:1px;background:repeating-linear-gradient(90deg,#a0a0a0 0 1px,transparent 1px 2px)"></div>
<svg style="position:absolute;left:63px;top:125px;" width="13" height="13" viewBox="0 0 13 13"><rect x="0.5" y="0.5" width="12" height="12" fill="#fff" stroke="#333"/></svg>
<div class="t" style="left:82px;top:124.0px;height:16px;line-height:16px;">Fatigue or dynamic loads acc. to 6.2.5 (5)</div>
<div style="left:50px;top:147px;width:11px;height:1px;background:repeating-linear-gradient(90deg,#a0a0a0 0 1px,transparent 1px 2px)"></div>
<div class="t" style="left:63px;top:140.0px;height:16px;line-height:16px;">Normal stress across joint surfaces (tension negative)</div>
<div style="left:399px;top:140px;width:1px;height:14px;background:#d6d6d6"></div>
<div class="t" style="left:403px;top:140.0px;height:16px;line-height:16px;"><span style='color:#b05a00'>(</span></div>
<div style="left:30px;top:179px;width:11px;height:1px;background:repeating-linear-gradient(90deg,#a0a0a0 0 1px,transparent 1px 2px)"></div>
<svg style="position:absolute;left:43px;top:173px;" width="13" height="13" viewBox="0 0 13 13"><rect x="0.5" y="0.5" width="12" height="12" fill="#fff" stroke="#333"/></svg>
<div class="t" style="left:62px;top:172.0px;height:16px;line-height:16px;">Design of flange connections on segmented cross-sections</div>
<svg style="position:absolute;left:5px;top:206px;" width="10" height="10" viewBox="0 0 10 10"><rect x="0.5" y="0.5" width="9" height="9" fill="#fff" stroke="#8a8a8a"/><path d="M2 4.5h6" stroke="#444"/></svg>
<div style="left:15px;top:211px;width:5px;height:1px;background:repeating-linear-gradient(90deg,#a0a0a0 0 1px,transparent 1px 2px)"></div>
<div class="t" style="left:23px;top:204.0px;height:16px;line-height:16px;">Neutral Axis Depth Limitation</div>
<div style="left:30px;top:227px;width:11px;height:1px;background:repeating-linear-gradient(90deg,#a0a0a0 0 1px,transparent 1px 2px)"></div>
<svg style="position:absolute;left:43px;top:221px;" width="13" height="13" viewBox="0 0 13 13"><rect x="0.5" y="0.5" width="12" height="12" fill="#fff" stroke="#333"/></svg>
<div class="t" style="left:62px;top:220.0px;height:16px;line-height:16px;">Consider neutral axis depth limitation acc. to 5.6.2(2), 5.6.3(2)</div>
<svg style="position:absolute;left:5px;top:254px;" width="10" height="10" viewBox="0 0 10 10"><rect x="0.5" y="0.5" width="9" height="9" fill="#fff" stroke="#8a8a8a"/><path d="M2 4.5h6" stroke="#444"/></svg>
<div style="left:15px;top:259px;width:5px;height:1px;background:repeating-linear-gradient(90deg,#a0a0a0 0 1px,transparent 1px 2px)"></div>
<div class="t" style="left:23px;top:252.0px;height:16px;line-height:16px;">Calculation Setting</div>
<div style="left:30px;top:275px;width:11px;height:1px;background:repeating-linear-gradient(90deg,#a0a0a0 0 1px,transparent 1px 2px)"></div>
<svg style="position:absolute;left:43px;top:269px;" width="13" height="13" viewBox="0 0 13 13"><rect x="0.5" y="0.5" width="12" height="12" fill="#fff" stroke="#333"/></svg>
<div class="t" style="left:62px;top:268.0px;height:16px;line-height:16px;">Net concrete area</div>
<svg style="position:absolute;left:5px;top:302px;" width="10" height="10" viewBox="0 0 10 10"><rect x="0.5" y="0.5" width="9" height="9" fill="#fff" stroke="#8a8a8a"/><path d="M2 4.5h6" stroke="#444"/></svg>
<div style="left:15px;top:307px;width:5px;height:1px;background:repeating-linear-gradient(90deg,#a0a0a0 0 1px,transparent 1px 2px)"></div>
<div class="t" style="left:23px;top:300.0px;height:16px;line-height:16px;">Fiber Concrete</div>
<svg style="position:absolute;left:25px;top:318px;" width="10" height="10" viewBox="0 0 10 10"><rect x="0.5" y="0.5" width="9" height="9" fill="#fff" stroke="#8a8a8a"/><path d="M2 4.5h6" stroke="#444"/></svg>
<div style="left:35px;top:323px;width:6px;height:1px;background:repeating-linear-gradient(90deg,#a0a0a0 0 1px,transparent 1px 2px)"></div>
<div class="t" style="left:43px;top:316.0px;height:16px;line-height:16px;">Fiber concrete effect</div>
<div style="left:50px;top:339px;width:11px;height:1px;background:repeating-linear-gradient(90deg,#a0a0a0 0 1px,transparent 1px 2px)"></div>
<svg style="position:absolute;left:63px;top:332.5px;" width="13" height="13" viewBox="0 0 13 13"><circle cx="6.5" cy="6.5" r="5.8" fill="#fff" stroke="#333" stroke-width="1"/><circle cx="6.5" cy="6.5" r="3.3" fill="#222"/></svg>
<div class="t" style="left:82px;top:332.0px;height:16px;line-height:16px;">In bending and shear design</div>
<div style="left:50px;top:355px;width:11px;height:1px;background:repeating-linear-gradient(90deg,#a0a0a0 0 1px,transparent 1px 2px)"></div>
<svg style="position:absolute;left:63px;top:348.5px;" width="13" height="13" viewBox="0 0 13 13"><circle cx="6.5" cy="6.5" r="5.8" fill="#fff" stroke="#333" stroke-width="1"/></svg>
<div class="t" style="left:82px;top:348.0px;height:16px;line-height:16px;">In torsion design</div>
<svg style="position:absolute;left:25px;top:382px;" width="10" height="10" viewBox="0 0 10 10"><rect x="0.5" y="0.5" width="9" height="9" fill="#fff" stroke="#8a8a8a"/><path d="M2 4.5h6" stroke="#444"/></svg>
<div style="left:35px;top:387px;width:6px;height:1px;background:repeating-linear-gradient(90deg,#a0a0a0 0 1px,transparent 1px 2px)"></div>
<div class="t" style="left:43px;top:380.0px;height:16px;line-height:16px;">Concrete</div>
<svg style="position:absolute;left:45px;top:398px;" width="10" height="10" viewBox="0 0 10 10"><rect x="0.5" y="0.5" width="9" height="9" fill="#fff" stroke="#8a8a8a"/><path d="M2 4.5h6" stroke="#444"/></svg>
<div style="left:55px;top:403px;width:6px;height:1px;background:repeating-linear-gradient(90deg,#a0a0a0 0 1px,transparent 1px 2px)"></div>
<div class="t" style="left:63px;top:396.0px;height:16px;line-height:16px;">Material model for tension strains</div>
<div style="left:70px;top:419px;width:11px;height:1px;background:repeating-linear-gradient(90deg,#a0a0a0 0 1px,transparent 1px 2px)"></div>
<svg style="position:absolute;left:83px;top:413px;" width="13" height="13" viewBox="0 0 13 13"><rect x="0.5" y="0.5" width="12" height="12" fill="#fff" stroke="#333"/><path d="M2.5 6.5l3 3 5-6.5" fill="none" stroke="#222" stroke-width="1.2"/></svg>
<div class="t" style="left:102px;top:412.0px;height:16px;line-height:16px;">Size factor κ<sup style='font-size:8px;vertical-align:4px'>f</sup><sub style='font-size:9px;vertical-align:-2px'>G</sub> calculated from tension area A<sup style='font-size:8px;vertical-align:4px'>f</sup><sub style='font-size:9px;vertical-align:-2px'>ct</sub></div>
</div>
<div style="left:508px;top:723px;width:408px;height:140px;border:3px solid #5ba02e"></div>
<div style="left:919px;top:425px;width:16px;height:444px;background:#ebebeb"></div>
<svg style="position:absolute;left:921px;top:429px;" width="11" height="8" viewBox="0 0 11 8"><path d="M1.5 6l4-4 4 4" fill="none" stroke="#555" stroke-width="1.3"/></svg>
<div style="left:920px;top:689px;width:14px;height:162px;background:#c3c3c3"></div>
<svg style="position:absolute;left:921px;top:855px;" width="11" height="8" viewBox="0 0 11 8"><path d="M1.5 2l4 4 4-4" fill="none" stroke="#555" stroke-width="1.3"/></svg>
<div style="left:512px;top:869px;width:423px;height:16px;background:#ebebeb"></div>
<div style="left:529px;top:870px;width:279px;height:14px;background:#c8c8c8"></div>
<svg style="position:absolute;left:515px;top:872px;" width="9" height="11" viewBox="0 0 9 11"><path d="M6.5 1.5l-4 4 4 4" fill="none" stroke="#555" stroke-width="1.3"/></svg>
<svg style="position:absolute;left:904px;top:872px;" width="9" height="11" viewBox="0 0 9 11"><path d="M2.5 1.5l4 4-4 4" fill="none" stroke="#555" stroke-width="1.3"/></svg>
<div style="left:919px;top:869px;width:16px;height:16px;background:#f0f0f0"></div>
<div style="left:945px;top:407px;width:411px;height:534px;background:#fff"></div>
<div style="left:512px;top:895px;width:310px;height:47px;background:#fff"></div>
<div class="t" style="left:517px;top:896.0px;height:16px;line-height:16px;color:#4a62a0;font-size:11.8px;-webkit-text-stroke:0.6px #4a62a0">Comment</div>
<div style="left:517px;top:917px;width:270px;height:21px;background:#e4e4f0"></div>
<svg style="position:absolute;left:771px;top:922px;" width="12" height="10" viewBox="0 0 12 10"><path d="M1.5 3l4.5 4.5 4.5-4.5" fill="none" stroke="#333" stroke-width="1.2"/></svg>
<div style="left:792px;top:917px;width:24px;height:21px;background:#e6e6e6"></div>
<svg style="position:absolute;left:792px;top:917px;" width="24" height="21" viewBox="0 0 24 21"><rect x="5.5" y="5.5" width="10" height="9" fill="#fff" stroke="#888"/><rect x="8.5" y="8.5" width="10" height="9" fill="#fff" stroke="#888"/></svg>
<div style="left:832px;top:895px;width:103px;height:47px;background:#fff"></div>
<div style="left:284px;top:958px;width:1090px;height:42px;background:#fff"></div>
<div style="left:293px;top:968px;width:25px;height:21px;background:#cce4f7"></div>
<svg style="position:absolute;left:293px;top:968px;" width="25" height="21" viewBox="0 0 25 21"><path d="M12.5 3.5a7 7 0 1 1-3 13.5l-4 3 1.5-4.5a7 7 0 0 1 5.5-12z" fill="#555"/><text x="12.5" y="14.5" font-size="10" font-weight="bold" text-anchor="middle" fill="#fff" font-family="Liberation Sans">?</text></svg>
<div style="left:328px;top:968px;width:25px;height:21px;background:#cce4f7"></div>
<svg style="position:absolute;left:328px;top:968px;" width="25" height="21" viewBox="0 0 25 21"><rect x="4" y="3" width="17" height="4" fill="#6cc04a"/><text x="3" y="18" font-size="10" fill="#111" font-family="Liberation Sans">0,</text><text x="11" y="18" font-size="10" fill="#2255cc" font-family="Liberation Sans" text-decoration="underline">00</text></svg>
<div style="left:387px;top:968px;width:25px;height:21px;background:#cce4f7"></div>
<svg style="position:absolute;left:387px;top:968px;" width="25" height="21" viewBox="0 0 25 21"><rect x="6" y="3" width="4" height="4" fill="#e02020"/><rect x="10" y="3" width="4" height="4" fill="#30a030"/><rect x="6" y="7" width="4" height="4" fill="#f0c020"/><path d="M8 11l-3 8M8 11l3 8M6 16h4" stroke="#222" stroke-width="1"/><rect x="12" y="10.5" width="10" height="7" fill="#fff" stroke="#333"/><rect x="14" y="13" width="6" height="2" fill="#2a6ad0"/></svg>
<div style="left:422px;top:968px;width:25px;height:21px;background:#cce4f7"></div>
<svg style="position:absolute;left:422px;top:968px;" width="25" height="21" viewBox="0 0 25 21"><path d="M5 9l8-4 6 2-8 5z" fill="#3c9a3c"/><path d="M5 9v5l6 3v-5z" fill="#2a7a2a"/><path d="M11 12l8-5v5l-8 5z" fill="#58b858"/><path d="M19 8l4 3-4 3z" fill="#333"/></svg>
<div style="left:450px;top:968px;width:25px;height:21px;background:#cce4f7"></div>
<svg style="position:absolute;left:450px;top:968px;" width="25" height="21" viewBox="0 0 25 21"><path d="M4 7h12l3 3v10h-15z" fill="#555"/><rect x="7" y="7" width="8" height="4" fill="#ddd"/><rect x="7" y="14" width="8" height="6" fill="#fff"/><path d="M13 3l6 1 2 5-6-1z" fill="#3ca03c"/></svg>
<div style="left:485px;top:968px;width:25px;height:21px;background:#cce4f7"></div>
<svg style="position:absolute;left:485px;top:968px;" width="25" height="21" viewBox="0 0 25 21"><ellipse cx="10" cy="5" rx="5" ry="2" fill="#ddd" stroke="#555" stroke-width="0.8"/><path d="M5 5v9c0 2.5 10 2.5 10 0v-9" fill="#ddd" stroke="#555" stroke-width="0.8"/><rect x="13.5" y="10.5" width="8" height="10" fill="#fff" stroke="#555"/><path d="M15 13h5M15 15.5h5M15 18h5" stroke="#555" stroke-width="0.8"/></svg>
<div style="left:520px;top:968px;width:25px;height:21px;background:#e6e6e6"></div>
<svg style="position:absolute;left:520px;top:968px;" width="25" height="21" viewBox="0 0 25 21"><path d="M7 10a6 6 0 1 0 2-4.5" fill="none" stroke="#9a9a9a" stroke-width="1.6"/><path d="M6 3v4h4" fill="none" stroke="#9a9a9a" stroke-width="1.6"/></svg>
<div style="left:555px;top:968px;width:25px;height:21px;background:#e6e6e6"></div>
<svg style="position:absolute;left:555px;top:968px;" width="25" height="21" viewBox="0 0 25 21"><text x="5" y="18" font-size="14" font-style="italic" fill="#8a8a8a" font-family="Liberation Serif">f</text><text x="11" y="18" font-size="11" font-style="italic" fill="#8a8a8a" font-family="Liberation Serif">x</text><ellipse cx="17" cy="6" rx="4" ry="2.5" fill="none" stroke="#8a8a8a"/></svg>
<div style="left:363px;top:968px;width:21px;height:21px;background:#ccffff;border:1px solid #111"></div>
<div style="left:1101px;top:969px;width:81px;height:21px;background:#e1e1e1;border:2px solid #0078d7"></div>
<div class="t" style="left:1100.5px;width:81px;text-align:center;top:971.5px;height:16px;line-height:16px;">OK</div>
<div style="left:1192px;top:969px;width:81px;height:21px;background:#e1e1e1;border:1px solid #adadad"></div>
<div class="t" style="left:1191.5px;width:81px;text-align:center;top:971.5px;height:16px;line-height:16px;">Cancel</div>
<div style="left:1283px;top:969px;width:81px;height:21px;background:#cccccc;border:1px solid #c4c4c4"></div>
<div class="t" style="left:1282.5px;width:81px;text-align:center;top:971.5px;height:16px;line-height:16px;color:#848484">Apply</div>
<svg style="position:absolute;left:1362px;top:988px;" width="10" height="10" viewBox="0 0 10 10"><g fill="#999"><rect x="7" y="1" width="2" height="2"/><rect x="4" y="4" width="2" height="2"/><rect x="7" y="4" width="2" height="2"/><rect x="1" y="7" width="2" height="2"/><rect x="4" y="7" width="2" height="2"/><rect x="7" y="7" width="2" height="2"/></g></svg></body></html>
